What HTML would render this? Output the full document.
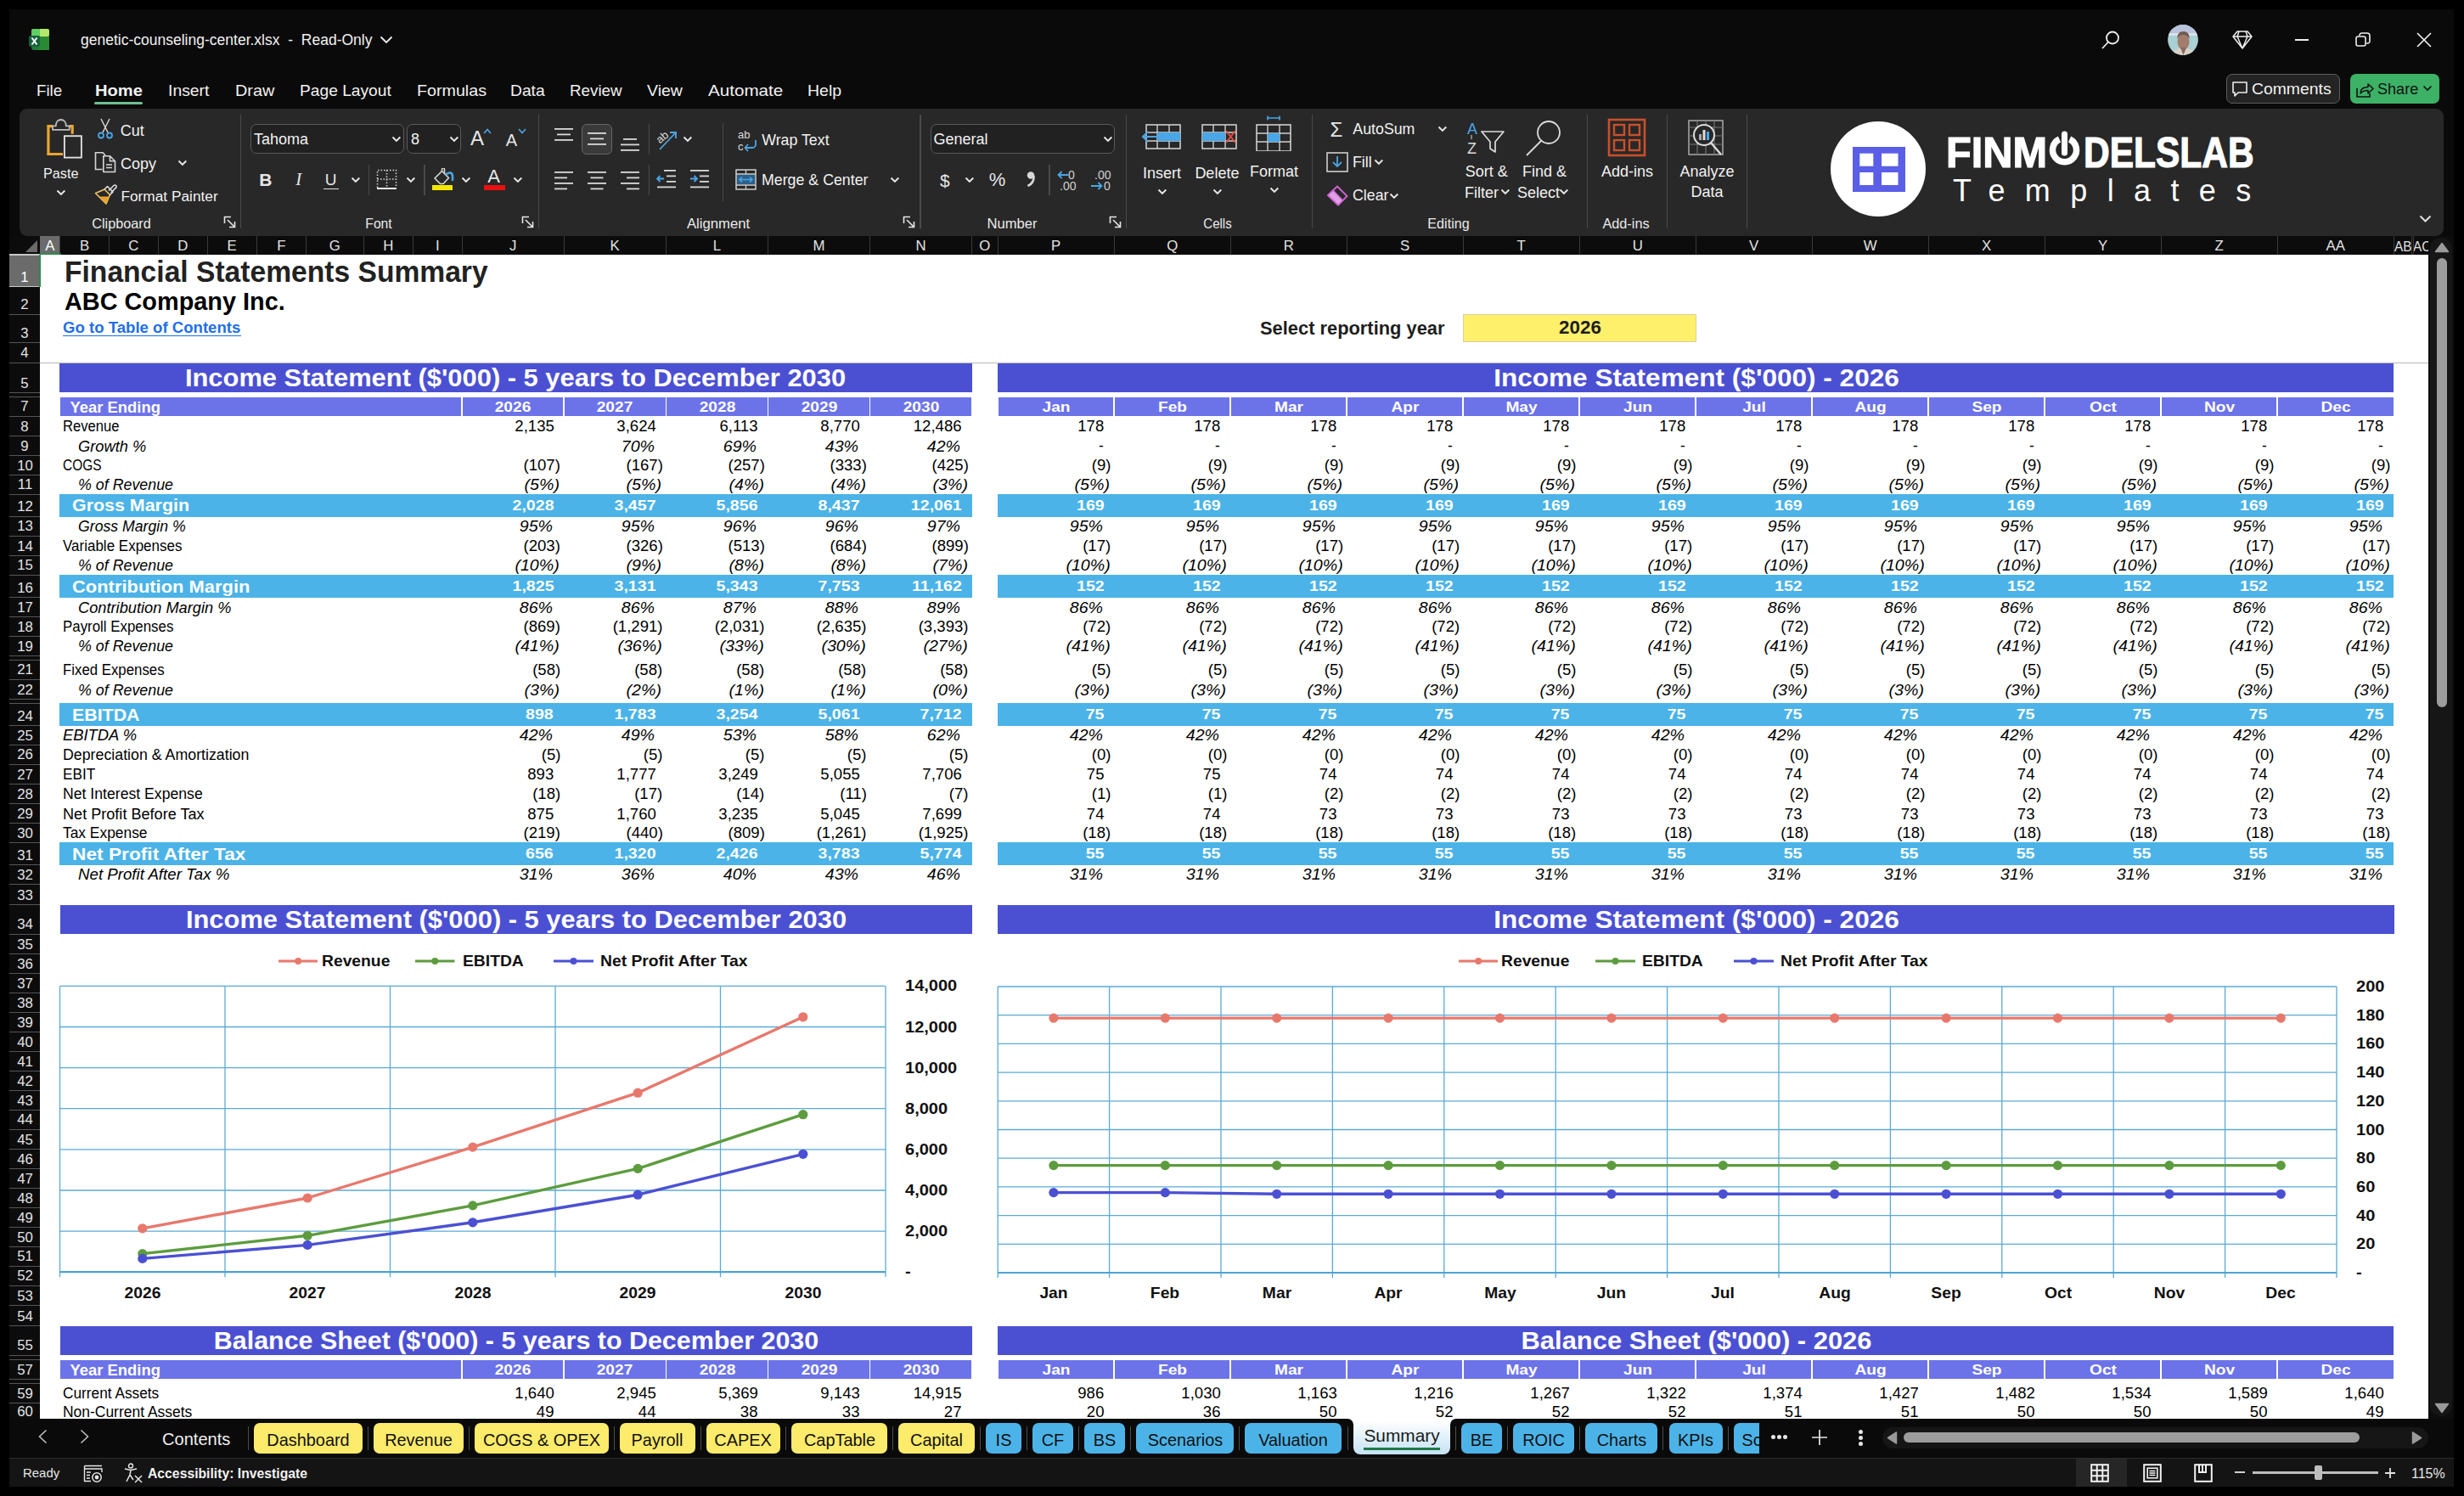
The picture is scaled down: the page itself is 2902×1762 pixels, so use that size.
<!DOCTYPE html><html><head><meta charset="utf-8"><style>
*{margin:0;padding:0;box-sizing:border-box}
html,body{width:2902px;height:1762px;overflow:hidden;background:#000;font-family:"Liberation Sans",sans-serif}
.a{position:absolute}
.t{position:absolute;white-space:pre}
</style></head><body><div class="a" style="left:11.0px;top:11.0px;width:2879.0px;height:1740.0px;background:#0a0a0a;"></div>
<svg class="a" style="left:34.0px;top:33.0px;" width="26" height="28" viewBox="0 0 26 28">
<rect x="3" y="1" width="21" height="25" rx="3" fill="#1f7a34"/>
<rect x="12" y="1" width="12" height="9" rx="2" fill="#b5e86a"/>
<rect x="3" y="1" width="10" height="9" rx="2" fill="#5fcf63"/>
<rect x="12" y="10" width="12" height="16" fill="#2a8a33"/>
<rect x="0" y="9" width="13" height="13" rx="2" fill="#16613a"/>
<path d="M3.5 11.5 L9.5 19.5 M9.5 11.5 L3.5 19.5" stroke="#fff" stroke-width="2"/>
</svg>
<div class="t" style="top:39.0px;font-size:17.6px;line-height:17.6px;color:#f2f2f2;left:95.4px;transform:scaleX(0.995);transform-origin:0 0;">genetic-counseling-center.xlsx  -  Read-Only</div>
<svg class="a" style="left:447.0px;top:42.0px;" width="16" height="10" viewBox="0 0 16 10"><path d="M1.5 1.5 L8 8 L14.5 1.5" stroke="#eee" stroke-width="1.8" fill="none"/></svg>
<svg class="a" style="left:2474.0px;top:35.0px;" width="24" height="24" viewBox="0 0 24 24"><circle cx="14" cy="9.5" r="7" stroke="#eee" stroke-width="1.8" fill="none"/><path d="M9 14.5 L2 22" stroke="#eee" stroke-width="1.8"/></svg>
<svg class="a" style="left:2553.0px;top:28.8px;" width="36" height="36" viewBox="0 0 36 36"><defs><clipPath id="av"><circle cx="18" cy="18" r="17.9"/></clipPath></defs><g clip-path="url(#av)"><rect width="36" height="36" fill="#a9d0d2"/><rect width="36" height="12" fill="#b9c4dc"/><rect y="10" width="36" height="3" fill="#d8e0e8"/><path d="M4 36 C6 29 12 28 18 28 C25 28 31 29 33 36 Z" fill="#d9d2c8"/><ellipse cx="18.5" cy="20" rx="7" ry="9.5" fill="#a47c6c"/><path d="M11.5 17 C11 11 14 8 18.5 8 C23 8 26 11 25.5 17 C24 13 21 12 18.5 12 C15 12 13 13 11.5 17 Z" fill="#6f5a50"/><path d="M15 27 L18.5 36 L22 27 Z" fill="#8a6a5c"/></g></svg>
<svg class="a" style="left:2629.0px;top:35.0px;" width="24" height="24" viewBox="0 0 24 24"><path d="M6 2 H18 L23 8 L12 22 L1 8 Z M1 8 H23 M8 2 L6 8 L12 22 L18 8 L16 2" stroke="#eee" stroke-width="1.5" fill="none" stroke-linejoin="round"/></svg>
<div class="a" style="left:2703.0px;top:46.0px;width:16.0px;height:2.0px;background:#eee;"></div>
<svg class="a" style="left:2774.0px;top:38.0px;" width="18" height="18" viewBox="0 0 18 18"><rect x="1" y="5" width="11" height="11" rx="2" stroke="#eee" stroke-width="1.6" fill="none"/><path d="M5 4 V3.5 a2.5 2.5 0 0 1 2.5 -2.5 H14 a3 3 0 0 1 3 3 V10.5 a2.5 2.5 0 0 1 -2.5 2.5 H13" stroke="#eee" stroke-width="1.6" fill="none"/></svg>
<svg class="a" style="left:2846.0px;top:38.0px;" width="18" height="18" viewBox="0 0 18 18"><path d="M1 1 L17 17 M17 1 L1 17" stroke="#eee" stroke-width="1.7"/></svg>
<div class="a" style="left:2621.5px;top:87.3px;width:134px;height:35.2px;border:1.3px solid #5c5c5c;border-radius:7px;background:#242424"></div>
<svg class="a" style="left:2628.0px;top:95.0px;" width="20" height="20" viewBox="0 0 20 20"><path d="M2 2 H18 V14 H8 L4 18 V14 H2 Z" stroke="#eee" stroke-width="1.6" fill="none" stroke-linejoin="round"/></svg>
<div class="t" style="top:96.3px;font-size:18.5px;line-height:18.5px;color:#f2f2f2;left:2652.4px;transform:scaleX(1.046);transform-origin:0 0;">Comments</div>
<div class="a" style="left:2768px;top:87.3px;width:104.8px;height:35.2px;border-radius:7px;background:#3db166"></div>
<svg class="a" style="left:2774.0px;top:96.0px;" width="22" height="20" viewBox="0 0 22 20"><path d="M2 8 V18 H17 V14" stroke="#111" stroke-width="1.6" fill="none"/><path d="M6 14 C6 9 9 6.5 15 6.5 V3 L21 8.5 L15 14 V10.5 C11 10.5 8 11.5 6 14 Z" stroke="#111" stroke-width="1.5" fill="none" stroke-linejoin="round"/></svg>
<div class="t" style="top:96.3px;font-size:18.5px;line-height:18.5px;color:#111;left:2799.6px;transform:scaleX(0.976);transform-origin:0 0;">Share</div>
<svg class="a" style="left:2853.0px;top:100.0px;" width="12" height="8" viewBox="0 0 12 8"><path d="M1.5 1.5 L6 6 L10.5 1.5" stroke="#111" stroke-width="1.6" fill="none"/></svg>
<div class="t" style="top:98.3px;font-size:18.5px;line-height:18.5px;color:#f2f2f2;left:42.6px;transform:scaleX(1.013);transform-origin:0 0;">File</div>
<div class="t" style="top:98.3px;font-size:18.5px;line-height:18.5px;color:#f2f2f2;font-weight:bold;left:111.6px;transform:scaleX(1.087);transform-origin:0 0;">Home</div>
<div class="t" style="top:98.3px;font-size:18.5px;line-height:18.5px;color:#f2f2f2;left:198.0px;transform:scaleX(1.047);transform-origin:0 0;">Insert</div>
<div class="t" style="top:98.3px;font-size:18.5px;line-height:18.5px;color:#f2f2f2;left:277.2px;transform:scaleX(1.073);transform-origin:0 0;">Draw</div>
<div class="t" style="top:98.3px;font-size:18.5px;line-height:18.5px;color:#f2f2f2;left:353.0px;transform:scaleX(1.037);transform-origin:0 0;">Page Layout</div>
<div class="t" style="top:98.3px;font-size:18.5px;line-height:18.5px;color:#f2f2f2;left:491.0px;transform:scaleX(1.064);transform-origin:0 0;">Formulas</div>
<div class="t" style="top:98.3px;font-size:18.5px;line-height:18.5px;color:#f2f2f2;left:600.6px;transform:scaleX(1.039);transform-origin:0 0;">Data</div>
<div class="t" style="top:98.3px;font-size:18.5px;line-height:18.5px;color:#f2f2f2;left:670.9px;transform:scaleX(1.015);transform-origin:0 0;">Review</div>
<div class="t" style="top:98.3px;font-size:18.5px;line-height:18.5px;color:#f2f2f2;left:761.8px;transform:scaleX(1.052);transform-origin:0 0;">View</div>
<div class="t" style="top:98.3px;font-size:18.5px;line-height:18.5px;color:#f2f2f2;left:834.0px;transform:scaleX(1.114);transform-origin:0 0;">Automate</div>
<div class="t" style="top:98.3px;font-size:18.5px;line-height:18.5px;color:#f2f2f2;left:951.0px;transform:scaleX(1.053);transform-origin:0 0;">Help</div>
<div class="a" style="left:111.0px;top:119.5px;width:57.0px;height:3.1px;background:#6cc08f;border-radius:2px"></div>
<div class="a" style="left:23px;top:128px;width:2855px;height:149.5px;border-radius:9px;background:#282828"></div>
<div class="t" style="top:255.0px;font-size:16.5px;line-height:16.5px;color:#eaeaea;left:143.1px;transform:translateX(-50%) scaleX(0.986);transform-origin:50% 0;">Clipboard</div>
<div class="t" style="top:255.0px;font-size:16.5px;line-height:16.5px;color:#eaeaea;left:445.5px;transform:translateX(-50%) scaleX(0.948);transform-origin:50% 0;">Font</div>
<div class="t" style="top:255.0px;font-size:16.5px;line-height:16.5px;color:#eaeaea;left:846.0px;transform:translateX(-50%) scaleX(1.011);transform-origin:50% 0;">Alignment</div>
<div class="t" style="top:255.0px;font-size:16.5px;line-height:16.5px;color:#eaeaea;left:1191.7px;transform:translateX(-50%) scaleX(1.007);transform-origin:50% 0;">Number</div>
<div class="t" style="top:255.0px;font-size:16.5px;line-height:16.5px;color:#eaeaea;left:1434.2px;transform:translateX(-50%) scaleX(0.912);transform-origin:50% 0;">Cells</div>
<div class="t" style="top:255.0px;font-size:16.5px;line-height:16.5px;color:#eaeaea;left:1705.8px;transform:translateX(-50%) scaleX(0.978);transform-origin:50% 0;">Editing</div>
<div class="t" style="top:255.0px;font-size:16.5px;line-height:16.5px;color:#eaeaea;left:1914.8px;transform:translateX(-50%) scaleX(0.987);transform-origin:50% 0;">Add-ins</div>
<svg class="a" style="left:263.0px;top:254.0px;clip-path:inset(0 0 0 0)" width="16" height="16" viewBox="0 0 16 16"><path d="M1.5 9 V1.5 H9" stroke="#e6e6e6" stroke-width="1.6" fill="none"/><path d="M5 5 L13.5 13.5 M13.5 7 V13.5 H7" stroke="#e6e6e6" stroke-width="1.6" fill="none"/></svg>
<svg class="a" style="left:613.7px;top:254.0px;clip-path:inset(0 0 0 0)" width="16" height="16" viewBox="0 0 16 16"><path d="M1.5 9 V1.5 H9" stroke="#e6e6e6" stroke-width="1.6" fill="none"/><path d="M5 5 L13.5 13.5 M13.5 7 V13.5 H7" stroke="#e6e6e6" stroke-width="1.6" fill="none"/></svg>
<svg class="a" style="left:1063.0px;top:254.0px;clip-path:inset(0 0 0 0)" width="16" height="16" viewBox="0 0 16 16"><path d="M1.5 9 V1.5 H9" stroke="#e6e6e6" stroke-width="1.6" fill="none"/><path d="M5 5 L13.5 13.5 M13.5 7 V13.5 H7" stroke="#e6e6e6" stroke-width="1.6" fill="none"/></svg>
<svg class="a" style="left:1305.7px;top:254.0px;clip-path:inset(0 0 0 0)" width="16" height="16" viewBox="0 0 16 16"><path d="M1.5 9 V1.5 H9" stroke="#e6e6e6" stroke-width="1.6" fill="none"/><path d="M5 5 L13.5 13.5 M13.5 7 V13.5 H7" stroke="#e6e6e6" stroke-width="1.6" fill="none"/></svg>
<div class="a" style="left:283.0px;top:135.0px;width:1.3px;height:134.0px;background:#4a4a4a;"></div>
<div class="a" style="left:633.5px;top:135.0px;width:1.3px;height:134.0px;background:#4a4a4a;"></div>
<div class="a" style="left:1083.4px;top:135.0px;width:1.3px;height:134.0px;background:#4a4a4a;"></div>
<div class="a" style="left:1326.0px;top:135.0px;width:1.3px;height:134.0px;background:#4a4a4a;"></div>
<div class="a" style="left:1544.6px;top:135.0px;width:1.3px;height:134.0px;background:#4a4a4a;"></div>
<div class="a" style="left:1868.5px;top:135.0px;width:1.3px;height:134.0px;background:#4a4a4a;"></div>
<div class="a" style="left:1963.0px;top:135.0px;width:1.3px;height:134.0px;background:#4a4a4a;"></div>
<div class="a" style="left:2056.6px;top:135.0px;width:1.3px;height:134.0px;background:#4a4a4a;"></div>
<svg class="a" style="left:53.0px;top:138.0px;" width="46" height="50" viewBox="0 0 46 50"><path d="M21 43.5 H3.9 V10.7 H9 M28.9 10.7 H32.2 V19.7" stroke="#eba530" stroke-width="3.2" fill="none"/><path d="M9 14.8 V10.3 H12.8 C12.8 5.5 15.5 3 18.8 3 C22 3 24.8 5.5 24.8 10.3 H28.7 V14.8 Z" stroke="#bdbdbd" stroke-width="1.8" fill="none" stroke-linejoin="round"/><rect x="22.9" y="22.2" width="20" height="25.4" stroke="#dedede" stroke-width="1.9" fill="none"/></svg>
<div class="t" style="top:196.2px;font-size:16.2px;line-height:16.2px;color:#f2f2f2;left:71.7px;transform:translateX(-50%) scaleX(1.000);transform-origin:50% 0;">Paste</div>
<svg class="a" style="left:65.8px;top:222.8px;" width="11.8" height="7.4" viewBox="0 0 11.8 7.4"><path d="M1.5 1.5 L5.9 5.9 L10.3 1.5" stroke="#e6e6e6" stroke-width="2" fill="none"/></svg>
<svg class="a" style="left:113.0px;top:139.0px;" width="22" height="26" viewBox="0 0 22 26"><path d="M6 1 L14 17 M16 1 L8 17" stroke="#ddd" stroke-width="1.4" fill="none"/><circle cx="6" cy="20.5" r="3" stroke="#4aa6e6" stroke-width="1.8" fill="none"/><circle cx="16" cy="20.5" r="3" stroke="#4aa6e6" stroke-width="1.8" fill="none"/></svg>
<div class="t" style="top:144.7px;font-size:18px;line-height:18px;color:#f2f2f2;left:141.8px;">Cut</div>
<svg class="a" style="left:111.0px;top:178.0px;" width="27" height="27" viewBox="0 0 27 27"><path d="M9.5 21.5 H1.5 V1.8 H10 L13 4.8" stroke="#d6d6d6" stroke-width="1.6" fill="none"/><path d="M10.8 5.8 H18.5 L24.5 11.8 V24.5 H10.8 Z M18.5 5.8 V11.8 H24.5" stroke="#d6d6d6" stroke-width="1.6" fill="none" stroke-linejoin="round"/><path d="M14 16 H21 M14 19.5 H21" stroke="#d6d6d6" stroke-width="1.5"/></svg>
<div class="t" style="top:183.7px;font-size:18px;line-height:18px;color:#f2f2f2;left:142.0px;">Copy</div>
<svg class="a" style="left:209.3px;top:188.3px;" width="11.8" height="7.4" viewBox="0 0 11.8 7.4"><path d="M1.5 1.5 L5.9 5.9 L10.3 1.5" stroke="#e6e6e6" stroke-width="2" fill="none"/></svg>
<svg class="a" style="left:110.0px;top:216.0px;" width="28" height="26" viewBox="0 0 28 26"><path d="M2.5 11.5 C6 10 10 8.5 13 7 L19.5 13.5 C18 16.5 16.5 20.5 15 24 Z" stroke="#f0c868" stroke-width="1.6" fill="none" stroke-linejoin="round"/><path d="M6.5 15.5 L15 24 C16.5 20.5 17.5 18 18.5 15.5 Z" fill="#e9a32e"/><path d="M13 7 L16.5 3.5 L23 10 L19.5 13.5 M18 8.5 L24 2.5 a1.8 1.8 0 0 1 2.6 2.6 L20.6 11" stroke="#dedede" stroke-width="1.6" fill="none" stroke-linejoin="round"/></svg>
<div class="t" style="top:222.8px;font-size:17.3px;line-height:17.3px;color:#f2f2f2;left:142.4px;">Format Painter</div>
<div class="a" style="left:295.4px;top:146px;width:180.2px;height:35.3px;border:1.3px solid #5a5a5a;border-radius:7px;background:#212121"></div>
<div class="t" style="top:155.2px;font-size:18px;line-height:18px;color:#f2f2f2;left:299.0px;">Tahoma</div>
<svg class="a" style="left:460.9px;top:160.3px;" width="11.8" height="7.4" viewBox="0 0 11.8 7.4"><path d="M1.5 1.5 L5.9 5.9 L10.3 1.5" stroke="#e6e6e6" stroke-width="2" fill="none"/></svg>
<div class="a" style="left:479px;top:146px;width:64.4px;height:35.3px;border:1.3px solid #5a5a5a;border-radius:7px;background:#212121"></div>
<div class="t" style="top:155.2px;font-size:18px;line-height:18px;color:#f2f2f2;left:484.0px;">8</div>
<svg class="a" style="left:528.7px;top:160.3px;" width="11.8" height="7.4" viewBox="0 0 11.8 7.4"><path d="M1.5 1.5 L5.9 5.9 L10.3 1.5" stroke="#e6e6e6" stroke-width="2" fill="none"/></svg>
<div class="t" style="top:151.1px;font-size:24px;line-height:24px;color:#e6e6e6;left:554.0px;">A</div>
<svg class="a" style="left:569.0px;top:151.0px;" width="10" height="7" viewBox="0 0 10 7"><path d="M1 6 L5 1.5 L9 6" stroke="#4aa6e6" stroke-width="1.6" fill="none"/></svg>
<div class="t" style="top:154.5px;font-size:20px;line-height:20px;color:#e6e6e6;left:595.7px;">A</div>
<svg class="a" style="left:610.0px;top:151.0px;" width="10" height="7" viewBox="0 0 10 7"><path d="M1 1 L5 5.5 L9 1" stroke="#4aa6e6" stroke-width="1.6" fill="none"/></svg>
<div class="t" style="top:201.2px;font-size:21px;line-height:21px;color:#e6e6e6;font-weight:bold;left:312.8px;transform:translateX(-50%) scaleX(1.000);transform-origin:50% 0;">B</div>
<div class="t" style="top:201.2px;font-size:21px;line-height:21px;color:#e6e6e6;font-style:italic;left:351.8px;transform:translateX(-50%) scaleX(1.000);transform-origin:50% 0;font-family:Liberation Serif">I</div>
<div class="t" style="top:201.8px;font-size:19px;line-height:19px;color:#e6e6e6;left:389.7px;transform:translateX(-50%) scaleX(1.000);transform-origin:50% 0;">U</div>
<div class="a" style="left:381.0px;top:221.5px;width:18.0px;height:1.5px;background:#e6e6e6;"></div>
<svg class="a" style="left:412.8px;top:208.3px;" width="11.8" height="7.4" viewBox="0 0 11.8 7.4"><path d="M1.5 1.5 L5.9 5.9 L10.3 1.5" stroke="#e6e6e6" stroke-width="2" fill="none"/></svg>
<div class="a" style="left:434.0px;top:194.0px;width:1.3px;height:36.0px;background:#4a4a4a;"></div>
<svg class="a" style="left:443.0px;top:199.0px;" width="25" height="25" viewBox="0 0 25 25"><path d="M1.5 22 V1.5 H23.5 V22 M12.5 1.5 V22 M1.5 12 H23.5" stroke="#d0d0d0" stroke-width="1.6" stroke-dasharray="1.6 1.9" fill="none"/><path d="M1 23 H24" stroke="#eee" stroke-width="2"/></svg>
<svg class="a" style="left:477.8px;top:208.3px;" width="11.8" height="7.4" viewBox="0 0 11.8 7.4"><path d="M1.5 1.5 L5.9 5.9 L10.3 1.5" stroke="#e6e6e6" stroke-width="2" fill="none"/></svg>
<div class="a" style="left:499.3px;top:194.0px;width:1.3px;height:36.0px;background:#4a4a4a;"></div>
<svg class="a" style="left:510.0px;top:198.0px;" width="26" height="22" viewBox="0 0 26 22"><path d="M2 12 L10.5 3.5 L18.5 11.5 L12 18.5 H8.5 Z" stroke="#d6d6d6" stroke-width="1.6" fill="none" stroke-linejoin="round"/><path d="M10.5 3.5 V1.5 a1.5 1.5 0 0 1 3 0 V7" stroke="#d6d6d6" stroke-width="1.6" fill="none"/><path d="M16 7 C19 4.5 22.5 5 23 9 V14" stroke="#4aa6e6" stroke-width="2.6" fill="none" stroke-linecap="round"/></svg>
<div class="a" style="left:509.0px;top:218.0px;width:24.0px;height:6.0px;background:#f5e600;"></div>
<svg class="a" style="left:543.1px;top:208.3px;" width="11.8" height="7.4" viewBox="0 0 11.8 7.4"><path d="M1.5 1.5 L5.9 5.9 L10.3 1.5" stroke="#e6e6e6" stroke-width="2" fill="none"/></svg>
<div class="t" style="top:197.3px;font-size:22px;line-height:22px;color:#e6e6e6;left:581.7px;transform:translateX(-50%) scaleX(1.000);transform-origin:50% 0;">A</div>
<div class="a" style="left:569.5px;top:218.0px;width:25.0px;height:6.0px;background:#e81010;"></div>
<svg class="a" style="left:604.1px;top:208.3px;" width="11.8" height="7.4" viewBox="0 0 11.8 7.4"><path d="M1.5 1.5 L5.9 5.9 L10.3 1.5" stroke="#e6e6e6" stroke-width="2" fill="none"/></svg>
<svg class="a" style="left:653.0px;top:151.0px;" width="23" height="16" viewBox="0 0 23 16"><rect x="0" y="0" width="22" height="1.8" fill="#d9d9d9"/><rect x="3" y="6.5" width="16" height="1.8" fill="#d9d9d9"/><rect x="0" y="13" width="22" height="1.8" fill="#d9d9d9"/></svg>
<div class="a" style="left:685px;top:146px;width:35.8px;height:35.6px;border:1.3px solid #666;border-radius:6px;background:#3a3a3a"></div>
<svg class="a" style="left:692.0px;top:155.5px;" width="23" height="16" viewBox="0 0 23 16"><rect x="0" y="0" width="22" height="1.8" fill="#d9d9d9"/><rect x="3" y="6.5" width="16" height="1.8" fill="#d9d9d9"/><rect x="0" y="13" width="22" height="1.8" fill="#d9d9d9"/></svg>
<svg class="a" style="left:731.0px;top:163.0px;" width="23" height="16" viewBox="0 0 23 16"><rect x="3" y="0" width="16" height="1.8" fill="#d9d9d9"/><rect x="0" y="6.5" width="22" height="1.8" fill="#d9d9d9"/><rect x="0" y="13" width="22" height="1.8" fill="#d9d9d9"/></svg>
<div class="a" style="left:763.6px;top:146.0px;width:1.3px;height:36.0px;background:#4a4a4a;"></div>
<svg class="a" style="left:771.0px;top:150.0px;" width="28" height="28" viewBox="0 0 28 28"><text x="2" y="16" font-size="13" fill="#ddd" font-family="Liberation Sans" transform="rotate(-40 9 12)">ab</text><path d="M6 26 L25 6 M18 6 H25 V13" stroke="#4aa6e6" stroke-width="1.8" fill="none"/></svg>
<svg class="a" style="left:804.1px;top:160.3px;" width="11.8" height="7.4" viewBox="0 0 11.8 7.4"><path d="M1.5 1.5 L5.9 5.9 L10.3 1.5" stroke="#e6e6e6" stroke-width="2" fill="none"/></svg>
<div class="a" style="left:851.0px;top:145.0px;width:1.3px;height:92.0px;background:#4a4a4a;"></div>
<svg class="a" style="left:868.0px;top:152.0px;" width="26" height="28" viewBox="0 0 26 28"><text x="1" y="11" font-size="13" fill="#ddd" font-family="Liberation Sans">ab</text><text x="1" y="25" font-size="13" fill="#ddd" font-family="Liberation Sans">c</text><path d="M22 13 V18 a4 4 0 0 1 -4 4 H10 M13 18 L9.5 22 L13 26" stroke="#4aa6e6" stroke-width="1.8" fill="none"/></svg>
<div class="t" style="top:156.9px;font-size:17.8px;line-height:17.8px;color:#f2f2f2;left:897.2px;">Wrap Text</div>
<svg class="a" style="left:653.0px;top:201.5px;" width="23" height="22.5" viewBox="0 0 23 22.5"><rect x="0" y="0" width="22" height="1.8" fill="#d9d9d9"/><rect x="0" y="6.5" width="15" height="1.8" fill="#d9d9d9"/><rect x="0" y="13" width="22" height="1.8" fill="#d9d9d9"/><rect x="0" y="19.5" width="15" height="1.8" fill="#d9d9d9"/></svg>
<svg class="a" style="left:692.0px;top:201.5px;" width="23" height="22.5" viewBox="0 0 23 22.5"><rect x="0" y="0" width="22" height="1.8" fill="#d9d9d9"/><rect x="3.5" y="6.5" width="15" height="1.8" fill="#d9d9d9"/><rect x="0" y="13" width="22" height="1.8" fill="#d9d9d9"/><rect x="3.5" y="19.5" width="15" height="1.8" fill="#d9d9d9"/></svg>
<svg class="a" style="left:731.0px;top:201.5px;" width="23" height="22.5" viewBox="0 0 23 22.5"><rect x="0" y="0" width="22" height="1.8" fill="#d9d9d9"/><rect x="7" y="6.5" width="15" height="1.8" fill="#d9d9d9"/><rect x="0" y="13" width="22" height="1.8" fill="#d9d9d9"/><rect x="7" y="19.5" width="15" height="1.8" fill="#d9d9d9"/></svg>
<div class="a" style="left:763.6px;top:194.0px;width:1.3px;height:36.0px;background:#4a4a4a;"></div>
<svg class="a" style="left:773.0px;top:200.0px;" width="24" height="22" viewBox="0 0 24 22"><rect x="9" y="0" width="14" height="1.8" fill="#d9d9d9"/><rect x="12" y="6.5" width="11" height="1.8" fill="#d9d9d9"/><rect x="12" y="13" width="11" height="1.8" fill="#d9d9d9"/><rect x="1" y="19.5" width="22" height="1.8" fill="#d9d9d9"/><path d="M9 10.5 H1 M4.5 7 L1 10.5 L4.5 14" stroke="#4aa6e6" stroke-width="1.8" fill="none"/></svg>
<svg class="a" style="left:812.0px;top:200.0px;" width="24" height="22" viewBox="0 0 24 22"><rect x="1" y="0" width="22" height="1.8" fill="#d9d9d9"/><rect x="12" y="6.5" width="11" height="1.8" fill="#d9d9d9"/><rect x="12" y="13" width="11" height="1.8" fill="#d9d9d9"/><rect x="1" y="19.5" width="22" height="1.8" fill="#d9d9d9"/><path d="M1 10.5 H9 M5.5 7 L9 10.5 L5.5 14" stroke="#4aa6e6" stroke-width="1.8" fill="none"/></svg>
<svg class="a" style="left:866.0px;top:199.0px;" width="25" height="25" viewBox="0 0 25 25"><rect x="1" y="1" width="23" height="23" stroke="#cfcfcf" stroke-width="1.5" fill="none"/><path d="M1 6 H24 M1 19 H24 M12.5 1 V6 M12.5 19 V24" stroke="#cfcfcf" stroke-width="1.3"/><rect x="2" y="7" width="21" height="11" fill="#2b5f8a"/><path d="M5 12.5 H20 M8 9.5 L5 12.5 L8 15.5 M17 9.5 L20 12.5 L17 15.5" stroke="#4aa6e6" stroke-width="1.6" fill="none"/></svg>
<div class="t" style="top:203.9px;font-size:17.8px;line-height:17.8px;color:#f2f2f2;left:897.0px;">Merge &amp; Center</div>
<svg class="a" style="left:1048.1px;top:208.3px;" width="11.8" height="7.4" viewBox="0 0 11.8 7.4"><path d="M1.5 1.5 L5.9 5.9 L10.3 1.5" stroke="#e6e6e6" stroke-width="2" fill="none"/></svg>
<div class="a" style="left:1096px;top:146px;width:217.3px;height:35.4px;border:1.3px solid #5a5a5a;border-radius:7px;background:#212121"></div>
<div class="t" style="top:155.2px;font-size:18px;line-height:18px;color:#f2f2f2;left:1099.4px;">General</div>
<svg class="a" style="left:1298.5px;top:160.3px;" width="11.8" height="7.4" viewBox="0 0 11.8 7.4"><path d="M1.5 1.5 L5.9 5.9 L10.3 1.5" stroke="#e6e6e6" stroke-width="2" fill="none"/></svg>
<div class="t" style="top:201.7px;font-size:21px;line-height:21px;color:#e6e6e6;left:1112.8px;transform:translateX(-50%) scaleX(1.000);transform-origin:50% 0;">$</div>
<svg class="a" style="left:1136.1px;top:208.3px;" width="11.8" height="7.4" viewBox="0 0 11.8 7.4"><path d="M1.5 1.5 L5.9 5.9 L10.3 1.5" stroke="#e6e6e6" stroke-width="2" fill="none"/></svg>
<div class="t" style="top:200.8px;font-size:22px;line-height:22px;color:#e6e6e6;left:1174.5px;transform:translateX(-50%) scaleX(1.000);transform-origin:50% 0;">%</div>
<svg class="a" style="left:1206.0px;top:200.0px;" width="16" height="22" viewBox="0 0 16 22"><circle cx="8" cy="6.5" r="4.2" fill="#d8d8d8"/><path d="M11.5 7 C12 12.5 9 17 4.5 19" stroke="#d8d8d8" stroke-width="2.6" fill="none"/></svg>
<div class="a" style="left:1235.4px;top:194.0px;width:1.3px;height:36.0px;background:#4a4a4a;"></div>
<svg class="a" style="left:1244.0px;top:198.0px;" width="30" height="28" viewBox="0 0 30 28"><text x="14" y="13" font-size="14" fill="#d0d0d0" font-family="Liberation Sans">0</text><text x="4" y="26" font-size="14" fill="#d0d0d0" font-family="Liberation Sans">.00</text><path d="M14 8 H2.5 M6.5 4 L2.5 8 L6.5 12" stroke="#4aa6e6" stroke-width="1.8" fill="none"/></svg>
<svg class="a" style="left:1282.0px;top:198.0px;" width="30" height="28" viewBox="0 0 30 28"><text x="7" y="13" font-size="14" fill="#d0d0d0" font-family="Liberation Sans">.00</text><text x="18" y="26" font-size="14" fill="#d0d0d0" font-family="Liberation Sans">0</text><path d="M3 21 H15.5 M11.5 17 L15.5 21 L11.5 25" stroke="#4aa6e6" stroke-width="1.8" fill="none"/></svg>
<svg class="a" style="left:1345.0px;top:140.0px;" width="48" height="42" viewBox="0 0 48 42"><rect x="5" y="7" width="40" height="28" stroke="#cfcfcf" stroke-width="1.6" fill="none"/><path d="M5 16 H45 M5 26 H45 M18 7 V35 M32 7 V35" stroke="#cfcfcf" stroke-width="1.4"/><rect x="18" y="16" width="27" height="10" fill="#4aa6e6"/><path d="M1 21 H20 M7 15 L1 21 L7 27" stroke="#4aa6e6" stroke-width="2" fill="none"/></svg>
<div class="t" style="top:195.2px;font-size:18px;line-height:18px;color:#f2f2f2;left:1368.5px;transform:translateX(-50%) scaleX(1.000);transform-origin:50% 0;">Insert</div>
<svg class="a" style="left:1362.6px;top:222.3px;" width="11.8" height="7.4" viewBox="0 0 11.8 7.4"><path d="M1.5 1.5 L5.9 5.9 L10.3 1.5" stroke="#e6e6e6" stroke-width="2" fill="none"/></svg>
<svg class="a" style="left:1411.0px;top:140.0px;" width="48" height="42" viewBox="0 0 48 42"><rect x="5" y="7" width="40" height="28" stroke="#cfcfcf" stroke-width="1.6" fill="none"/><path d="M5 16 H45 M5 26 H45 M18 7 V35 M32 7 V35" stroke="#cfcfcf" stroke-width="1.4"/><rect x="5" y="16" width="27" height="10" fill="#4aa6e6"/><path d="M33 14 L44 28 M44 14 L33 28" stroke="#e84b3c" stroke-width="2"/></svg>
<div class="t" style="top:195.2px;font-size:18px;line-height:18px;color:#f2f2f2;left:1433.4px;transform:translateX(-50%) scaleX(1.000);transform-origin:50% 0;">Delete</div>
<svg class="a" style="left:1427.5px;top:222.3px;" width="11.8" height="7.4" viewBox="0 0 11.8 7.4"><path d="M1.5 1.5 L5.9 5.9 L10.3 1.5" stroke="#e6e6e6" stroke-width="2" fill="none"/></svg>
<svg class="a" style="left:1476.0px;top:136.0px;" width="48" height="42" viewBox="0 0 48 42"><rect x="4" y="11" width="40" height="31" stroke="#cfcfcf" stroke-width="1.6" fill="none"/><path d="M4 21 H44 M4 31 H44 M17 11 V42 M31 11 V42" stroke="#cfcfcf" stroke-width="1.4"/><rect x="17" y="21" width="14" height="10" fill="#4aa6e6"/><path d="M17 3 H31 M17 0.5 V5.5 M31 0.5 V5.5" stroke="#4aa6e6" stroke-width="1.6"/></svg>
<div class="t" style="top:193.2px;font-size:18px;line-height:18px;color:#f2f2f2;left:1500.4px;transform:translateX(-50%) scaleX(1.000);transform-origin:50% 0;">Format</div>
<svg class="a" style="left:1494.5px;top:220.3px;" width="11.8" height="7.4" viewBox="0 0 11.8 7.4"><path d="M1.5 1.5 L5.9 5.9 L10.3 1.5" stroke="#e6e6e6" stroke-width="2" fill="none"/></svg>
<div class="t" style="top:140.6px;font-size:24px;line-height:24px;color:#e6e6e6;left:1574.0px;transform:translateX(-50%) scaleX(1.000);transform-origin:50% 0;">Σ</div>
<div class="t" style="top:143.9px;font-size:17.8px;line-height:17.8px;color:#f2f2f2;left:1593.3px;">AutoSum</div>
<svg class="a" style="left:1693.1px;top:148.3px;" width="11.8" height="7.4" viewBox="0 0 11.8 7.4"><path d="M1.5 1.5 L5.9 5.9 L10.3 1.5" stroke="#e6e6e6" stroke-width="2" fill="none"/></svg>
<svg class="a" style="left:1562.0px;top:179.0px;" width="26" height="24" viewBox="0 0 26 24"><rect x="1" y="1" width="24" height="22" stroke="#cfcfcf" stroke-width="1.6" fill="none"/><path d="M13 5 V17 M8 12 L13 17 L18 12" stroke="#4aa6e6" stroke-width="1.8" fill="none"/></svg>
<div class="t" style="top:182.9px;font-size:17.8px;line-height:17.8px;color:#f2f2f2;left:1593.0px;">Fill</div>
<svg class="a" style="left:1618.1px;top:187.3px;" width="11.8" height="7.4" viewBox="0 0 11.8 7.4"><path d="M1.5 1.5 L5.9 5.9 L10.3 1.5" stroke="#e6e6e6" stroke-width="2" fill="none"/></svg>
<svg class="a" style="left:1562.0px;top:218.0px;" width="26" height="25" viewBox="0 0 26 25"><path d="M13 1.5 L24.5 13 L14 23.5 L2 12 Z" stroke="#c862cc" stroke-width="2" fill="none" stroke-linejoin="round"/><path d="M2 12 L8 6 L19.5 18 L14 23.5 Z" fill="#e0a0e6" stroke="#c862cc" stroke-width="1.5" stroke-linejoin="round"/></svg>
<div class="t" style="top:222.4px;font-size:17.8px;line-height:17.8px;color:#f2f2f2;left:1593.0px;">Clear</div>
<svg class="a" style="left:1636.1px;top:227.3px;" width="11.8" height="7.4" viewBox="0 0 11.8 7.4"><path d="M1.5 1.5 L5.9 5.9 L10.3 1.5" stroke="#e6e6e6" stroke-width="2" fill="none"/></svg>
<svg class="a" style="left:1727.0px;top:141.0px;" width="48" height="42" viewBox="0 0 48 42"><text x="1" y="17" font-size="18" fill="#4aa6e6" font-family="Liberation Sans">A</text><text x="1" y="40" font-size="18" fill="#ddd" font-family="Liberation Sans">Z</text><path d="M6 18 V23" stroke="#ddd" stroke-width="1"/><path d="M18 14 H44 L34 26 V38 L28 34 V26 Z" stroke="#ddd" stroke-width="1.7" fill="none" stroke-linejoin="round"/></svg>
<div class="t" style="top:193.2px;font-size:18px;line-height:18px;color:#f2f2f2;left:1750.8px;transform:translateX(-50%) scaleX(1.000);transform-origin:50% 0;">Sort &amp;</div>
<div class="t" style="top:217.7px;font-size:18px;line-height:18px;color:#f2f2f2;left:1745.0px;transform:translateX(-50%) scaleX(1.000);transform-origin:50% 0;">Filter</div>
<svg class="a" style="left:1767.1px;top:222.3px;" width="11.8" height="7.4" viewBox="0 0 11.8 7.4"><path d="M1.5 1.5 L5.9 5.9 L10.3 1.5" stroke="#e6e6e6" stroke-width="2" fill="none"/></svg>
<svg class="a" style="left:1796.0px;top:140.0px;" width="48" height="44" viewBox="0 0 48 44"><circle cx="28" cy="16" r="13" stroke="#ddd" stroke-width="1.8" fill="none"/><path d="M19 26 L2 43" stroke="#ddd" stroke-width="1.8"/></svg>
<div class="t" style="top:193.2px;font-size:18px;line-height:18px;color:#f2f2f2;left:1819.0px;transform:translateX(-50%) scaleX(1.000);transform-origin:50% 0;">Find &amp;</div>
<div class="t" style="top:217.7px;font-size:18px;line-height:18px;color:#f2f2f2;left:1812.0px;transform:translateX(-50%) scaleX(1.000);transform-origin:50% 0;">Select</div>
<svg class="a" style="left:1836.1px;top:222.3px;" width="11.8" height="7.4" viewBox="0 0 11.8 7.4"><path d="M1.5 1.5 L5.9 5.9 L10.3 1.5" stroke="#e6e6e6" stroke-width="2" fill="none"/></svg>
<svg class="a" style="left:1893.0px;top:139.0px;" width="46" height="46" viewBox="0 0 46 46"><rect x="2" y="2" width="42" height="42" stroke="#c9502b" stroke-width="2.6" fill="none"/><rect x="8" y="8" width="12" height="12" stroke="#c9502b" stroke-width="2.4" fill="none"/><rect x="26" y="8" width="12" height="12" stroke="#c9502b" stroke-width="2.4" fill="none"/><rect x="8" y="26" width="12" height="12" stroke="#c9502b" stroke-width="2.4" fill="none"/><rect x="26" y="26" width="12" height="12" stroke="#c9502b" stroke-width="2.4" fill="none"/></svg>
<div class="t" style="top:193.2px;font-size:18px;line-height:18px;color:#f2f2f2;left:1916.4px;transform:translateX(-50%) scaleX(1.000);transform-origin:50% 0;">Add-ins</div>
<svg class="a" style="left:1987.0px;top:140.0px;" width="46" height="46" viewBox="0 0 46 46"><rect x="2" y="2" width="40" height="40" stroke="#aaa" stroke-width="1.5" fill="none"/><path d="M2 10 H42 M2 20 H42 M2 30 H42 M12 2 V42 M22 2 V42 M32 2 V42" stroke="#777" stroke-width="1.1"/><circle cx="20" cy="19" r="12" stroke="#ddd" stroke-width="2" fill="#282828"/><path d="M28 28 L40 42" stroke="#ddd" stroke-width="2.4"/><rect x="14" y="18" width="3" height="7" fill="#aaa"/><rect x="18.5" y="13" width="3" height="12" fill="#ddd"/><rect x="23" y="15" width="3" height="10" fill="#4aa6e6"/></svg>
<div class="t" style="top:193.2px;font-size:18px;line-height:18px;color:#f2f2f2;left:2010.6px;transform:translateX(-50%) scaleX(1.000);transform-origin:50% 0;">Analyze</div>
<div class="t" style="top:217.2px;font-size:18px;line-height:18px;color:#f2f2f2;left:2010.6px;transform:translateX(-50%) scaleX(1.000);transform-origin:50% 0;">Data</div>
<div class="a" style="left:2156.3px;top:143.3px;width:112px;height:112px;border-radius:50%;background:#fff"></div>
<svg class="a" style="left:2181.7px;top:173.1px;" width="62" height="53" viewBox="0 0 62 53"><rect x="0" y="0" width="62" height="53" fill="#5b5ee6"/><rect x="8.3" y="7.7" width="16" height="15" fill="#fff"/><rect x="34" y="7.7" width="19.5" height="15" fill="#fff"/><rect x="8.3" y="30" width="16" height="15" fill="#fff"/><rect x="34" y="30" width="19.5" height="15" fill="#fff"/></svg>
<div class="t" style="top:154.5px;font-size:50px;line-height:50px;color:#fff;font-weight:bold;left:2292.0px;transform:scaleX(0.975);transform-origin:0 0;-webkit-text-stroke:1.2px #fff">FINM</div>
<div class="t" style="top:154.5px;font-size:50px;line-height:50px;color:#fff;font-weight:bold;left:2453.5px;transform:scaleX(0.850);transform-origin:0 0;-webkit-text-stroke:1.2px #fff">DELSLAB</div>
<svg class="a" style="left:2410.0px;top:150.0px;" width="44" height="50" viewBox="0 0 44 50"><path d="M15.5 14 A14 14 0 1 0 27.5 14" stroke="#fff" stroke-width="7.5" fill="none"/><path d="M21.5 8 V30" stroke="#fff" stroke-width="7" stroke-linecap="round"/></svg>
<div class="t" style="top:206.7px;font-size:36px;line-height:36px;color:#fff;left:2300.0px;letter-spacing:23.4px">Templates</div>
<svg class="a" style="left:2849.0px;top:252.5px;" width="15" height="9" viewBox="0 0 15 9"><path d="M1.5 1.5 L7.5 7.5 L13.5 1.5" stroke="#ddd" stroke-width="2" fill="none"/></svg>
<div class="a" style="left:47.0px;top:300.0px;width:2813.0px;height:1370.5px;background:#fff;"></div>
<div class="a" style="left:11.0px;top:278.0px;width:2849.0px;height:22.0px;background:#0c0c0c;"></div>
<svg class="a" style="left:27.0px;top:282.0px;" width="18" height="16" viewBox="0 0 18 16"><path d="M17 1 V15 H3 Z" fill="#6a6a6a"/></svg>
<div class="a" style="left:47.0px;top:278.0px;width:23.6px;height:22.0px;background:#6b6b6b;"></div>
<div class="a" style="left:47.0px;top:298.2px;width:24.6px;height:2.3px;background:#2f8a4f;"></div>
<div class="t" style="top:281.7px;font-size:16.8px;line-height:16.8px;color:#ffffff;left:58.8px;transform:translateX(-50%) scaleX(1.000);transform-origin:50% 0;">A</div>
<div class="t" style="top:281.7px;font-size:16.8px;line-height:16.8px;color:#e3e3e3;left:99.6px;transform:translateX(-50%) scaleX(1.000);transform-origin:50% 0;">B</div>
<div class="a" style="left:70.0px;top:278.0px;width:1.2px;height:22.0px;background:#3a3a3a;"></div>
<div class="t" style="top:281.7px;font-size:16.8px;line-height:16.8px;color:#e3e3e3;left:157.4px;transform:translateX(-50%) scaleX(1.000);transform-origin:50% 0;">C</div>
<div class="a" style="left:128.0px;top:278.0px;width:1.2px;height:22.0px;background:#3a3a3a;"></div>
<div class="t" style="top:281.7px;font-size:16.8px;line-height:16.8px;color:#e3e3e3;left:215.2px;transform:translateX(-50%) scaleX(1.000);transform-origin:50% 0;">D</div>
<div class="a" style="left:185.7px;top:278.0px;width:1.2px;height:22.0px;background:#3a3a3a;"></div>
<div class="t" style="top:281.7px;font-size:16.8px;line-height:16.8px;color:#e3e3e3;left:273.2px;transform:translateX(-50%) scaleX(1.000);transform-origin:50% 0;">E</div>
<div class="a" style="left:243.6px;top:278.0px;width:1.2px;height:22.0px;background:#3a3a3a;"></div>
<div class="t" style="top:281.7px;font-size:16.8px;line-height:16.8px;color:#e3e3e3;left:331.3px;transform:translateX(-50%) scaleX(1.000);transform-origin:50% 0;">F</div>
<div class="a" style="left:301.6px;top:278.0px;width:1.2px;height:22.0px;background:#3a3a3a;"></div>
<div class="t" style="top:281.7px;font-size:16.8px;line-height:16.8px;color:#e3e3e3;left:394.2px;transform:translateX(-50%) scaleX(1.000);transform-origin:50% 0;">G</div>
<div class="a" style="left:359.8px;top:278.0px;width:1.2px;height:22.0px;background:#3a3a3a;"></div>
<div class="t" style="top:281.7px;font-size:16.8px;line-height:16.8px;color:#e3e3e3;left:457.2px;transform:translateX(-50%) scaleX(1.000);transform-origin:50% 0;">H</div>
<div class="a" style="left:427.5px;top:278.0px;width:1.2px;height:22.0px;background:#3a3a3a;"></div>
<div class="t" style="top:281.7px;font-size:16.8px;line-height:16.8px;color:#e3e3e3;left:515.3px;transform:translateX(-50%) scaleX(1.000);transform-origin:50% 0;">I</div>
<div class="a" style="left:485.8px;top:278.0px;width:1.2px;height:22.0px;background:#3a3a3a;"></div>
<div class="t" style="top:281.7px;font-size:16.8px;line-height:16.8px;color:#e3e3e3;left:604.2px;transform:translateX(-50%) scaleX(1.000);transform-origin:50% 0;">J</div>
<div class="a" style="left:543.7px;top:278.0px;width:1.2px;height:22.0px;background:#3a3a3a;"></div>
<div class="t" style="top:281.7px;font-size:16.8px;line-height:16.8px;color:#e3e3e3;left:724.2px;transform:translateX(-50%) scaleX(1.000);transform-origin:50% 0;">K</div>
<div class="a" style="left:663.5px;top:278.0px;width:1.2px;height:22.0px;background:#3a3a3a;"></div>
<div class="t" style="top:281.7px;font-size:16.8px;line-height:16.8px;color:#e3e3e3;left:844.5px;transform:translateX(-50%) scaleX(1.000);transform-origin:50% 0;">L</div>
<div class="a" style="left:783.8px;top:278.0px;width:1.2px;height:22.0px;background:#3a3a3a;"></div>
<div class="t" style="top:281.7px;font-size:16.8px;line-height:16.8px;color:#e3e3e3;left:964.5px;transform:translateX(-50%) scaleX(1.000);transform-origin:50% 0;">M</div>
<div class="a" style="left:903.9px;top:278.0px;width:1.2px;height:22.0px;background:#3a3a3a;"></div>
<div class="t" style="top:281.7px;font-size:16.8px;line-height:16.8px;color:#e3e3e3;left:1084.5px;transform:translateX(-50%) scaleX(1.000);transform-origin:50% 0;">N</div>
<div class="a" style="left:1023.9px;top:278.0px;width:1.2px;height:22.0px;background:#3a3a3a;"></div>
<div class="t" style="top:281.7px;font-size:16.8px;line-height:16.8px;color:#e3e3e3;left:1159.8px;transform:translateX(-50%) scaleX(1.000);transform-origin:50% 0;">O</div>
<div class="a" style="left:1143.9px;top:278.0px;width:1.2px;height:22.0px;background:#3a3a3a;"></div>
<div class="t" style="top:281.7px;font-size:16.8px;line-height:16.8px;color:#e3e3e3;left:1243.7px;transform:translateX(-50%) scaleX(1.000);transform-origin:50% 0;">P</div>
<div class="a" style="left:1174.6px;top:278.0px;width:1.2px;height:22.0px;background:#3a3a3a;"></div>
<div class="t" style="top:281.7px;font-size:16.8px;line-height:16.8px;color:#e3e3e3;left:1380.7px;transform:translateX(-50%) scaleX(1.000);transform-origin:50% 0;">Q</div>
<div class="a" style="left:1311.6px;top:278.0px;width:1.2px;height:22.0px;background:#3a3a3a;"></div>
<div class="t" style="top:281.7px;font-size:16.8px;line-height:16.8px;color:#e3e3e3;left:1517.7px;transform:translateX(-50%) scaleX(1.000);transform-origin:50% 0;">R</div>
<div class="a" style="left:1448.6px;top:278.0px;width:1.2px;height:22.0px;background:#3a3a3a;"></div>
<div class="t" style="top:281.7px;font-size:16.8px;line-height:16.8px;color:#e3e3e3;left:1654.7px;transform:translateX(-50%) scaleX(1.000);transform-origin:50% 0;">S</div>
<div class="a" style="left:1585.6px;top:278.0px;width:1.2px;height:22.0px;background:#3a3a3a;"></div>
<div class="t" style="top:281.7px;font-size:16.8px;line-height:16.8px;color:#e3e3e3;left:1791.7px;transform:translateX(-50%) scaleX(1.000);transform-origin:50% 0;">T</div>
<div class="a" style="left:1722.6px;top:278.0px;width:1.2px;height:22.0px;background:#3a3a3a;"></div>
<div class="t" style="top:281.7px;font-size:16.8px;line-height:16.8px;color:#e3e3e3;left:1928.7px;transform:translateX(-50%) scaleX(1.000);transform-origin:50% 0;">U</div>
<div class="a" style="left:1859.6px;top:278.0px;width:1.2px;height:22.0px;background:#3a3a3a;"></div>
<div class="t" style="top:281.7px;font-size:16.8px;line-height:16.8px;color:#e3e3e3;left:2065.7px;transform:translateX(-50%) scaleX(1.000);transform-origin:50% 0;">V</div>
<div class="a" style="left:1996.6px;top:278.0px;width:1.2px;height:22.0px;background:#3a3a3a;"></div>
<div class="t" style="top:281.7px;font-size:16.8px;line-height:16.8px;color:#e3e3e3;left:2202.7px;transform:translateX(-50%) scaleX(1.000);transform-origin:50% 0;">W</div>
<div class="a" style="left:2133.6px;top:278.0px;width:1.2px;height:22.0px;background:#3a3a3a;"></div>
<div class="t" style="top:281.7px;font-size:16.8px;line-height:16.8px;color:#e3e3e3;left:2339.7px;transform:translateX(-50%) scaleX(1.000);transform-origin:50% 0;">X</div>
<div class="a" style="left:2270.6px;top:278.0px;width:1.2px;height:22.0px;background:#3a3a3a;"></div>
<div class="t" style="top:281.7px;font-size:16.8px;line-height:16.8px;color:#e3e3e3;left:2476.7px;transform:translateX(-50%) scaleX(1.000);transform-origin:50% 0;">Y</div>
<div class="a" style="left:2407.6px;top:278.0px;width:1.2px;height:22.0px;background:#3a3a3a;"></div>
<div class="t" style="top:281.7px;font-size:16.8px;line-height:16.8px;color:#e3e3e3;left:2613.7px;transform:translateX(-50%) scaleX(1.000);transform-origin:50% 0;">Z</div>
<div class="a" style="left:2544.6px;top:278.0px;width:1.2px;height:22.0px;background:#3a3a3a;"></div>
<div class="t" style="top:281.7px;font-size:16.8px;line-height:16.8px;color:#e3e3e3;left:2750.7px;transform:translateX(-50%) scaleX(1.000);transform-origin:50% 0;">AA</div>
<div class="a" style="left:2681.6px;top:278.0px;width:1.2px;height:22.0px;background:#3a3a3a;"></div>
<div class="t" style="top:282.0px;font-size:16.5px;line-height:16.5px;color:#e3e3e3;left:2820.2px;transform:scaleX(0.930);transform-origin:0 0;overflow:hidden;">AB</div>
<div class="a" style="left:2818.6px;top:278.0px;width:1.2px;height:22.0px;background:#3a3a3a;"></div>
<div class="t" style="top:282.0px;font-size:16.5px;line-height:16.5px;color:#e3e3e3;left:2841.6px;transform:scaleX(0.930);transform-origin:0 0;overflow:hidden;">AC</div>
<div class="a" style="left:2840.0px;top:278.0px;width:1.2px;height:22.0px;background:#3a3a3a;"></div>
<div class="a" style="left:2818.6px;top:278.0px;width:1.2px;height:22.0px;background:#3a3a3a;"></div>
<div class="a" style="left:2841.6px;top:278.0px;width:1.2px;height:22.0px;background:#3a3a3a;"></div>
<div class="a" style="left:11.0px;top:300.0px;width:36.0px;height:1370.5px;background:#0c0c0c;"></div>
<div class="a" style="left:11.0px;top:300.0px;width:36.0px;height:37.5px;background:#6b6b6b;"></div>
<div class="t" style="top:318.6px;font-size:16.8px;line-height:16.8px;color:#ffffff;left:29.0px;transform:translateX(-50%) scaleX(1.000);transform-origin:50% 0;">1</div>
<div class="a" style="left:11.0px;top:337.0px;width:36.0px;height:1.0px;background:#c9c9c9;"></div>
<div class="t" style="top:351.3px;font-size:16.8px;line-height:16.8px;color:#e3e3e3;left:29.0px;transform:translateX(-50%) scaleX(1.000);transform-origin:50% 0;">2</div>
<div class="a" style="left:11.0px;top:369.7px;width:36.0px;height:1.0px;background:#555;"></div>
<div class="t" style="top:384.5px;font-size:16.8px;line-height:16.8px;color:#e3e3e3;left:29.0px;transform:translateX(-50%) scaleX(1.000);transform-origin:50% 0;">3</div>
<div class="a" style="left:11.0px;top:402.9px;width:36.0px;height:1.0px;background:#555;"></div>
<div class="t" style="top:408.1px;font-size:16.8px;line-height:16.8px;color:#e3e3e3;left:29.0px;transform:translateX(-50%) scaleX(1.000);transform-origin:50% 0;">4</div>
<div class="a" style="left:11.0px;top:426.5px;width:36.0px;height:1.0px;background:#555;"></div>
<div class="t" style="top:443.6px;font-size:16.8px;line-height:16.8px;color:#e3e3e3;left:29.0px;transform:translateX(-50%) scaleX(1.000);transform-origin:50% 0;">5</div>
<div class="a" style="left:11.0px;top:462.0px;width:36.0px;height:1.0px;background:#555;"></div>
<div class="a" style="left:11.0px;top:466.5px;width:36.0px;height:1.0px;background:#555;"></div>
<div class="t" style="top:471.1px;font-size:16.8px;line-height:16.8px;color:#e3e3e3;left:29.0px;transform:translateX(-50%) scaleX(1.000);transform-origin:50% 0;">7</div>
<div class="a" style="left:11.0px;top:489.5px;width:36.0px;height:1.0px;background:#555;"></div>
<div class="t" style="top:494.5px;font-size:16.8px;line-height:16.8px;color:#e3e3e3;left:29.0px;transform:translateX(-50%) scaleX(1.000);transform-origin:50% 0;">8</div>
<div class="a" style="left:11.0px;top:512.9px;width:36.0px;height:1.0px;background:#555;"></div>
<div class="t" style="top:517.7px;font-size:16.8px;line-height:16.8px;color:#e3e3e3;left:29.0px;transform:translateX(-50%) scaleX(1.000);transform-origin:50% 0;">9</div>
<div class="a" style="left:11.0px;top:536.1px;width:36.0px;height:1.0px;background:#555;"></div>
<div class="t" style="top:540.6px;font-size:16.8px;line-height:16.8px;color:#e3e3e3;left:29.5px;transform:translateX(-50%) scaleX(1.000);transform-origin:50% 0;">10</div>
<div class="a" style="left:11.0px;top:559.0px;width:36.0px;height:1.0px;background:#555;"></div>
<div class="t" style="top:563.4px;font-size:16.8px;line-height:16.8px;color:#e3e3e3;left:29.5px;transform:translateX(-50%) scaleX(1.000);transform-origin:50% 0;">11</div>
<div class="a" style="left:11.0px;top:581.8px;width:36.0px;height:1.0px;background:#555;"></div>
<div class="t" style="top:589.4px;font-size:16.8px;line-height:16.8px;color:#e3e3e3;left:29.5px;transform:translateX(-50%) scaleX(1.000);transform-origin:50% 0;">12</div>
<div class="a" style="left:11.0px;top:607.8px;width:36.0px;height:1.0px;background:#555;"></div>
<div class="t" style="top:612.1px;font-size:16.8px;line-height:16.8px;color:#e3e3e3;left:29.5px;transform:translateX(-50%) scaleX(1.000);transform-origin:50% 0;">13</div>
<div class="a" style="left:11.0px;top:630.5px;width:36.0px;height:1.0px;background:#555;"></div>
<div class="t" style="top:635.6px;font-size:16.8px;line-height:16.8px;color:#e3e3e3;left:29.5px;transform:translateX(-50%) scaleX(1.000);transform-origin:50% 0;">14</div>
<div class="a" style="left:11.0px;top:654.0px;width:36.0px;height:1.0px;background:#555;"></div>
<div class="t" style="top:658.4px;font-size:16.8px;line-height:16.8px;color:#e3e3e3;left:29.5px;transform:translateX(-50%) scaleX(1.000);transform-origin:50% 0;">15</div>
<div class="a" style="left:11.0px;top:676.8px;width:36.0px;height:1.0px;background:#555;"></div>
<div class="t" style="top:684.5px;font-size:16.8px;line-height:16.8px;color:#e3e3e3;left:29.5px;transform:translateX(-50%) scaleX(1.000);transform-origin:50% 0;">16</div>
<div class="a" style="left:11.0px;top:702.9px;width:36.0px;height:1.0px;background:#555;"></div>
<div class="t" style="top:707.9px;font-size:16.8px;line-height:16.8px;color:#e3e3e3;left:29.5px;transform:translateX(-50%) scaleX(1.000);transform-origin:50% 0;">17</div>
<div class="a" style="left:11.0px;top:726.3px;width:36.0px;height:1.0px;background:#555;"></div>
<div class="t" style="top:730.6px;font-size:16.8px;line-height:16.8px;color:#e3e3e3;left:29.5px;transform:translateX(-50%) scaleX(1.000);transform-origin:50% 0;">18</div>
<div class="a" style="left:11.0px;top:749.0px;width:36.0px;height:1.0px;background:#555;"></div>
<div class="t" style="top:753.6px;font-size:16.8px;line-height:16.8px;color:#e3e3e3;left:29.5px;transform:translateX(-50%) scaleX(1.000);transform-origin:50% 0;">19</div>
<div class="a" style="left:11.0px;top:772.0px;width:36.0px;height:1.0px;background:#555;"></div>
<div class="a" style="left:11.0px;top:776.5px;width:36.0px;height:1.0px;background:#555;"></div>
<div class="t" style="top:781.4px;font-size:16.8px;line-height:16.8px;color:#e3e3e3;left:29.5px;transform:translateX(-50%) scaleX(1.000);transform-origin:50% 0;">21</div>
<div class="a" style="left:11.0px;top:799.8px;width:36.0px;height:1.0px;background:#555;"></div>
<div class="t" style="top:804.8px;font-size:16.8px;line-height:16.8px;color:#e3e3e3;left:29.5px;transform:translateX(-50%) scaleX(1.000);transform-origin:50% 0;">22</div>
<div class="a" style="left:11.0px;top:823.2px;width:36.0px;height:1.0px;background:#555;"></div>
<div class="a" style="left:11.0px;top:827.9px;width:36.0px;height:1.0px;background:#555;"></div>
<div class="t" style="top:835.6px;font-size:16.8px;line-height:16.8px;color:#e3e3e3;left:29.5px;transform:translateX(-50%) scaleX(1.000);transform-origin:50% 0;">24</div>
<div class="a" style="left:11.0px;top:854.0px;width:36.0px;height:1.0px;background:#555;"></div>
<div class="t" style="top:858.5px;font-size:16.8px;line-height:16.8px;color:#e3e3e3;left:29.5px;transform:translateX(-50%) scaleX(1.000);transform-origin:50% 0;">25</div>
<div class="a" style="left:11.0px;top:876.9px;width:36.0px;height:1.0px;background:#555;"></div>
<div class="t" style="top:881.2px;font-size:16.8px;line-height:16.8px;color:#e3e3e3;left:29.5px;transform:translateX(-50%) scaleX(1.000);transform-origin:50% 0;">26</div>
<div class="a" style="left:11.0px;top:899.6px;width:36.0px;height:1.0px;background:#555;"></div>
<div class="t" style="top:904.6px;font-size:16.8px;line-height:16.8px;color:#e3e3e3;left:29.5px;transform:translateX(-50%) scaleX(1.000);transform-origin:50% 0;">27</div>
<div class="a" style="left:11.0px;top:923.0px;width:36.0px;height:1.0px;background:#555;"></div>
<div class="t" style="top:927.6px;font-size:16.8px;line-height:16.8px;color:#e3e3e3;left:29.5px;transform:translateX(-50%) scaleX(1.000);transform-origin:50% 0;">28</div>
<div class="a" style="left:11.0px;top:946.0px;width:36.0px;height:1.0px;background:#555;"></div>
<div class="t" style="top:950.7px;font-size:16.8px;line-height:16.8px;color:#e3e3e3;left:29.5px;transform:translateX(-50%) scaleX(1.000);transform-origin:50% 0;">29</div>
<div class="a" style="left:11.0px;top:969.1px;width:36.0px;height:1.0px;background:#555;"></div>
<div class="t" style="top:973.5px;font-size:16.8px;line-height:16.8px;color:#e3e3e3;left:29.5px;transform:translateX(-50%) scaleX(1.000);transform-origin:50% 0;">30</div>
<div class="a" style="left:11.0px;top:991.9px;width:36.0px;height:1.0px;background:#555;"></div>
<div class="t" style="top:999.5px;font-size:16.8px;line-height:16.8px;color:#e3e3e3;left:29.5px;transform:translateX(-50%) scaleX(1.000);transform-origin:50% 0;">31</div>
<div class="a" style="left:11.0px;top:1017.9px;width:36.0px;height:1.0px;background:#555;"></div>
<div class="t" style="top:1022.6px;font-size:16.8px;line-height:16.8px;color:#e3e3e3;left:29.5px;transform:translateX(-50%) scaleX(1.000);transform-origin:50% 0;">32</div>
<div class="a" style="left:11.0px;top:1041.0px;width:36.0px;height:1.0px;background:#555;"></div>
<div class="t" style="top:1046.5px;font-size:16.8px;line-height:16.8px;color:#e3e3e3;left:29.5px;transform:translateX(-50%) scaleX(1.000);transform-origin:50% 0;">33</div>
<div class="a" style="left:11.0px;top:1064.9px;width:36.0px;height:1.0px;background:#555;"></div>
<div class="t" style="top:1081.3px;font-size:16.8px;line-height:16.8px;color:#e3e3e3;left:29.5px;transform:translateX(-50%) scaleX(1.000);transform-origin:50% 0;">34</div>
<div class="a" style="left:11.0px;top:1099.7px;width:36.0px;height:1.0px;background:#555;"></div>
<div class="t" style="top:1104.7px;font-size:16.8px;line-height:16.8px;color:#e3e3e3;left:29.5px;transform:translateX(-50%) scaleX(1.000);transform-origin:50% 0;">35</div>
<div class="a" style="left:11.0px;top:1123.1px;width:36.0px;height:1.0px;background:#555;"></div>
<div class="t" style="top:1127.7px;font-size:16.8px;line-height:16.8px;color:#e3e3e3;left:29.5px;transform:translateX(-50%) scaleX(1.000);transform-origin:50% 0;">36</div>
<div class="a" style="left:11.0px;top:1146.1px;width:36.0px;height:1.0px;background:#555;"></div>
<div class="t" style="top:1150.8px;font-size:16.8px;line-height:16.8px;color:#e3e3e3;left:29.5px;transform:translateX(-50%) scaleX(1.000);transform-origin:50% 0;">37</div>
<div class="a" style="left:11.0px;top:1169.2px;width:36.0px;height:1.0px;background:#555;"></div>
<div class="t" style="top:1173.5px;font-size:16.8px;line-height:16.8px;color:#e3e3e3;left:29.5px;transform:translateX(-50%) scaleX(1.000);transform-origin:50% 0;">38</div>
<div class="a" style="left:11.0px;top:1191.9px;width:36.0px;height:1.0px;background:#555;"></div>
<div class="t" style="top:1196.7px;font-size:16.8px;line-height:16.8px;color:#e3e3e3;left:29.5px;transform:translateX(-50%) scaleX(1.000);transform-origin:50% 0;">39</div>
<div class="a" style="left:11.0px;top:1215.1px;width:36.0px;height:1.0px;background:#555;"></div>
<div class="t" style="top:1219.8px;font-size:16.8px;line-height:16.8px;color:#e3e3e3;left:29.5px;transform:translateX(-50%) scaleX(1.000);transform-origin:50% 0;">40</div>
<div class="a" style="left:11.0px;top:1238.2px;width:36.0px;height:1.0px;background:#555;"></div>
<div class="t" style="top:1242.5px;font-size:16.8px;line-height:16.8px;color:#e3e3e3;left:29.5px;transform:translateX(-50%) scaleX(1.000);transform-origin:50% 0;">41</div>
<div class="a" style="left:11.0px;top:1260.9px;width:36.0px;height:1.0px;background:#555;"></div>
<div class="t" style="top:1265.7px;font-size:16.8px;line-height:16.8px;color:#e3e3e3;left:29.5px;transform:translateX(-50%) scaleX(1.000);transform-origin:50% 0;">42</div>
<div class="a" style="left:11.0px;top:1284.1px;width:36.0px;height:1.0px;background:#555;"></div>
<div class="t" style="top:1288.7px;font-size:16.8px;line-height:16.8px;color:#e3e3e3;left:29.5px;transform:translateX(-50%) scaleX(1.000);transform-origin:50% 0;">43</div>
<div class="a" style="left:11.0px;top:1307.1px;width:36.0px;height:1.0px;background:#555;"></div>
<div class="t" style="top:1311.4px;font-size:16.8px;line-height:16.8px;color:#e3e3e3;left:29.5px;transform:translateX(-50%) scaleX(1.000);transform-origin:50% 0;">44</div>
<div class="a" style="left:11.0px;top:1329.8px;width:36.0px;height:1.0px;background:#555;"></div>
<div class="t" style="top:1334.5px;font-size:16.8px;line-height:16.8px;color:#e3e3e3;left:29.5px;transform:translateX(-50%) scaleX(1.000);transform-origin:50% 0;">45</div>
<div class="a" style="left:11.0px;top:1352.9px;width:36.0px;height:1.0px;background:#555;"></div>
<div class="t" style="top:1357.5px;font-size:16.8px;line-height:16.8px;color:#e3e3e3;left:29.5px;transform:translateX(-50%) scaleX(1.000);transform-origin:50% 0;">46</div>
<div class="a" style="left:11.0px;top:1375.9px;width:36.0px;height:1.0px;background:#555;"></div>
<div class="t" style="top:1380.5px;font-size:16.8px;line-height:16.8px;color:#e3e3e3;left:29.5px;transform:translateX(-50%) scaleX(1.000);transform-origin:50% 0;">47</div>
<div class="a" style="left:11.0px;top:1398.9px;width:36.0px;height:1.0px;background:#555;"></div>
<div class="t" style="top:1403.5px;font-size:16.8px;line-height:16.8px;color:#e3e3e3;left:29.5px;transform:translateX(-50%) scaleX(1.000);transform-origin:50% 0;">48</div>
<div class="a" style="left:11.0px;top:1421.9px;width:36.0px;height:1.0px;background:#555;"></div>
<div class="t" style="top:1426.5px;font-size:16.8px;line-height:16.8px;color:#e3e3e3;left:29.5px;transform:translateX(-50%) scaleX(1.000);transform-origin:50% 0;">49</div>
<div class="a" style="left:11.0px;top:1444.9px;width:36.0px;height:1.0px;background:#555;"></div>
<div class="t" style="top:1449.5px;font-size:16.8px;line-height:16.8px;color:#e3e3e3;left:29.5px;transform:translateX(-50%) scaleX(1.000);transform-origin:50% 0;">50</div>
<div class="a" style="left:11.0px;top:1467.9px;width:36.0px;height:1.0px;background:#555;"></div>
<div class="t" style="top:1472.4px;font-size:16.8px;line-height:16.8px;color:#e3e3e3;left:29.5px;transform:translateX(-50%) scaleX(1.000);transform-origin:50% 0;">51</div>
<div class="a" style="left:11.0px;top:1490.8px;width:36.0px;height:1.0px;background:#555;"></div>
<div class="t" style="top:1495.4px;font-size:16.8px;line-height:16.8px;color:#e3e3e3;left:29.5px;transform:translateX(-50%) scaleX(1.000);transform-origin:50% 0;">52</div>
<div class="a" style="left:11.0px;top:1513.8px;width:36.0px;height:1.0px;background:#555;"></div>
<div class="t" style="top:1518.8px;font-size:16.8px;line-height:16.8px;color:#e3e3e3;left:29.5px;transform:translateX(-50%) scaleX(1.000);transform-origin:50% 0;">53</div>
<div class="a" style="left:11.0px;top:1537.2px;width:36.0px;height:1.0px;background:#555;"></div>
<div class="t" style="top:1542.6px;font-size:16.8px;line-height:16.8px;color:#e3e3e3;left:29.5px;transform:translateX(-50%) scaleX(1.000);transform-origin:50% 0;">54</div>
<div class="a" style="left:11.0px;top:1561.0px;width:36.0px;height:1.0px;background:#555;"></div>
<div class="t" style="top:1577.4px;font-size:16.8px;line-height:16.8px;color:#e3e3e3;left:29.5px;transform:translateX(-50%) scaleX(1.000);transform-origin:50% 0;">55</div>
<div class="a" style="left:11.0px;top:1595.8px;width:36.0px;height:1.0px;background:#555;"></div>
<div class="a" style="left:11.0px;top:1600.7px;width:36.0px;height:1.0px;background:#555;"></div>
<div class="t" style="top:1605.9px;font-size:16.8px;line-height:16.8px;color:#e3e3e3;left:29.5px;transform:translateX(-50%) scaleX(1.000);transform-origin:50% 0;">57</div>
<div class="a" style="left:11.0px;top:1624.3px;width:36.0px;height:1.0px;background:#555;"></div>
<div class="a" style="left:11.0px;top:1629.0px;width:36.0px;height:1.0px;background:#555;"></div>
<div class="t" style="top:1633.6px;font-size:16.8px;line-height:16.8px;color:#e3e3e3;left:29.5px;transform:translateX(-50%) scaleX(1.000);transform-origin:50% 0;">59</div>
<div class="a" style="left:11.0px;top:1652.0px;width:36.0px;height:1.0px;background:#555;"></div>
<div class="t" style="top:1655.3px;font-size:16.8px;line-height:16.8px;color:#e3e3e3;left:29.5px;transform:translateX(-50%) scaleX(1.000);transform-origin:50% 0;">60</div>
<div class="a" style="left:11.0px;top:1673.7px;width:36.0px;height:1.0px;background:#555;"></div>
<div class="a" style="left:11.0px;top:299.4px;width:36.0px;height:1.3px;background:#c9c9c9;"></div>
<div class="a" style="left:46.2px;top:300.0px;width:1.4px;height:37.5px;background:#2f8a4f;"></div>
<div class="a" style="left:47.0px;top:426.5px;width:2813.0px;height:1.1px;background:#b8b8b8;"></div>
<div class="a" style="left:70.1px;top:427.8px;width:1074.7px;height:34.7px;background:#4b50d3;"></div>
<div class="t" style="top:430.3px;font-size:29.4px;line-height:29.4px;color:#fff;font-weight:bold;left:607.2px;transform:translateX(-50%) scaleX(1.051);transform-origin:50% 0;">Income Statement ($'000) - 5 years to December 2030</div>
<div class="a" style="left:1175.2px;top:427.8px;width:1644.3px;height:34.7px;background:#4b50d3;"></div>
<div class="t" style="top:430.3px;font-size:29.4px;line-height:29.4px;color:#fff;font-weight:bold;left:1997.5px;transform:translateX(-50%) scaleX(1.074);transform-origin:50% 0;">Income Statement ($'000) - 2026</div>
<div class="a" style="left:71.2px;top:468.0px;width:1072.6px;height:21.6px;background:#6c73e8;"></div>
<div class="a" style="left:543.4px;top:468.0px;width:1.8px;height:21.6px;background:#fff;"></div>
<div class="a" style="left:663.2px;top:468.0px;width:1.8px;height:21.6px;background:#fff;"></div>
<div class="a" style="left:783.5px;top:468.0px;width:1.8px;height:21.6px;background:#fff;"></div>
<div class="a" style="left:903.6px;top:468.0px;width:1.8px;height:21.6px;background:#fff;"></div>
<div class="a" style="left:1023.6px;top:468.0px;width:1.8px;height:21.6px;background:#fff;"></div>
<div class="t" style="top:470.5px;font-size:18.4px;line-height:18.4px;color:#fff;font-weight:bold;left:82.6px;">Year Ending</div>
<div class="t" style="top:470.6px;font-size:17.4px;line-height:17.4px;color:#fff;font-weight:bold;left:604.2px;transform:translateX(-50%) scaleX(1.100);transform-origin:50% 0;">2026</div>
<div class="t" style="top:470.6px;font-size:17.4px;line-height:17.4px;color:#fff;font-weight:bold;left:724.2px;transform:translateX(-50%) scaleX(1.100);transform-origin:50% 0;">2027</div>
<div class="t" style="top:470.6px;font-size:17.4px;line-height:17.4px;color:#fff;font-weight:bold;left:844.5px;transform:translateX(-50%) scaleX(1.100);transform-origin:50% 0;">2028</div>
<div class="t" style="top:470.6px;font-size:17.4px;line-height:17.4px;color:#fff;font-weight:bold;left:964.5px;transform:translateX(-50%) scaleX(1.100);transform-origin:50% 0;">2029</div>
<div class="t" style="top:470.6px;font-size:17.4px;line-height:17.4px;color:#fff;font-weight:bold;left:1084.5px;transform:translateX(-50%) scaleX(1.100);transform-origin:50% 0;">2030</div>
<div class="a" style="left:1175.8px;top:468.0px;width:1642.9px;height:21.6px;background:#6c73e8;"></div>
<div class="a" style="left:1311.3px;top:468.0px;width:1.8px;height:21.6px;background:#fff;"></div>
<div class="a" style="left:1448.3px;top:468.0px;width:1.8px;height:21.6px;background:#fff;"></div>
<div class="a" style="left:1585.3px;top:468.0px;width:1.8px;height:21.6px;background:#fff;"></div>
<div class="a" style="left:1722.3px;top:468.0px;width:1.8px;height:21.6px;background:#fff;"></div>
<div class="a" style="left:1859.3px;top:468.0px;width:1.8px;height:21.6px;background:#fff;"></div>
<div class="a" style="left:1996.3px;top:468.0px;width:1.8px;height:21.6px;background:#fff;"></div>
<div class="a" style="left:2133.3px;top:468.0px;width:1.8px;height:21.6px;background:#fff;"></div>
<div class="a" style="left:2270.3px;top:468.0px;width:1.8px;height:21.6px;background:#fff;"></div>
<div class="a" style="left:2407.3px;top:468.0px;width:1.8px;height:21.6px;background:#fff;"></div>
<div class="a" style="left:2544.3px;top:468.0px;width:1.8px;height:21.6px;background:#fff;"></div>
<div class="a" style="left:2681.3px;top:468.0px;width:1.8px;height:21.6px;background:#fff;"></div>
<div class="t" style="top:470.6px;font-size:17.4px;line-height:17.4px;color:#fff;font-weight:bold;left:1243.7px;transform:translateX(-50%) scaleX(1.100);transform-origin:50% 0;">Jan</div>
<div class="t" style="top:470.6px;font-size:17.4px;line-height:17.4px;color:#fff;font-weight:bold;left:1380.7px;transform:translateX(-50%) scaleX(1.100);transform-origin:50% 0;">Feb</div>
<div class="t" style="top:470.6px;font-size:17.4px;line-height:17.4px;color:#fff;font-weight:bold;left:1517.7px;transform:translateX(-50%) scaleX(1.100);transform-origin:50% 0;">Mar</div>
<div class="t" style="top:470.6px;font-size:17.4px;line-height:17.4px;color:#fff;font-weight:bold;left:1654.7px;transform:translateX(-50%) scaleX(1.100);transform-origin:50% 0;">Apr</div>
<div class="t" style="top:470.6px;font-size:17.4px;line-height:17.4px;color:#fff;font-weight:bold;left:1791.7px;transform:translateX(-50%) scaleX(1.100);transform-origin:50% 0;">May</div>
<div class="t" style="top:470.6px;font-size:17.4px;line-height:17.4px;color:#fff;font-weight:bold;left:1928.7px;transform:translateX(-50%) scaleX(1.100);transform-origin:50% 0;">Jun</div>
<div class="t" style="top:470.6px;font-size:17.4px;line-height:17.4px;color:#fff;font-weight:bold;left:2065.7px;transform:translateX(-50%) scaleX(1.100);transform-origin:50% 0;">Jul</div>
<div class="t" style="top:470.6px;font-size:17.4px;line-height:17.4px;color:#fff;font-weight:bold;left:2202.7px;transform:translateX(-50%) scaleX(1.100);transform-origin:50% 0;">Aug</div>
<div class="t" style="top:470.6px;font-size:17.4px;line-height:17.4px;color:#fff;font-weight:bold;left:2339.7px;transform:translateX(-50%) scaleX(1.100);transform-origin:50% 0;">Sep</div>
<div class="t" style="top:470.6px;font-size:17.4px;line-height:17.4px;color:#fff;font-weight:bold;left:2476.7px;transform:translateX(-50%) scaleX(1.100);transform-origin:50% 0;">Oct</div>
<div class="t" style="top:470.6px;font-size:17.4px;line-height:17.4px;color:#fff;font-weight:bold;left:2613.7px;transform:translateX(-50%) scaleX(1.100);transform-origin:50% 0;">Nov</div>
<div class="t" style="top:470.6px;font-size:17.4px;line-height:17.4px;color:#fff;font-weight:bold;left:2750.7px;transform:translateX(-50%) scaleX(1.100);transform-origin:50% 0;">Dec</div>
<div class="t" style="top:494.3px;font-size:17.5px;line-height:17.5px;left:74.0px;transform:scaleX(0.949);transform-origin:0 0;">Revenue</div>
<div class="t" style="top:494.3px;font-size:17.5px;line-height:17.5px;right:2249.5px;transform:scaleX(1.060);transform-origin:100% 0;">2,135</div>
<div class="t" style="top:494.3px;font-size:17.5px;line-height:17.5px;right:2129.2px;transform:scaleX(1.060);transform-origin:100% 0;">3,624</div>
<div class="t" style="top:494.3px;font-size:17.5px;line-height:17.5px;right:2009.1px;transform:scaleX(1.060);transform-origin:100% 0;">6,113</div>
<div class="t" style="top:494.3px;font-size:17.5px;line-height:17.5px;right:1889.1px;transform:scaleX(1.060);transform-origin:100% 0;">8,770</div>
<div class="t" style="top:494.3px;font-size:17.5px;line-height:17.5px;right:1769.1px;transform:scaleX(1.060);transform-origin:100% 0;">12,486</div>
<div class="t" style="top:494.3px;font-size:17.5px;line-height:17.5px;right:1601.4px;transform:scaleX(1.060);transform-origin:100% 0;">178</div>
<div class="t" style="top:494.3px;font-size:17.5px;line-height:17.5px;right:1464.4px;transform:scaleX(1.060);transform-origin:100% 0;">178</div>
<div class="t" style="top:494.3px;font-size:17.5px;line-height:17.5px;right:1327.4px;transform:scaleX(1.060);transform-origin:100% 0;">178</div>
<div class="t" style="top:494.3px;font-size:17.5px;line-height:17.5px;right:1190.4px;transform:scaleX(1.060);transform-origin:100% 0;">178</div>
<div class="t" style="top:494.3px;font-size:17.5px;line-height:17.5px;right:1053.4px;transform:scaleX(1.060);transform-origin:100% 0;">178</div>
<div class="t" style="top:494.3px;font-size:17.5px;line-height:17.5px;right:916.4px;transform:scaleX(1.060);transform-origin:100% 0;">178</div>
<div class="t" style="top:494.3px;font-size:17.5px;line-height:17.5px;right:779.4px;transform:scaleX(1.060);transform-origin:100% 0;">178</div>
<div class="t" style="top:494.3px;font-size:17.5px;line-height:17.5px;right:642.4px;transform:scaleX(1.060);transform-origin:100% 0;">178</div>
<div class="t" style="top:494.3px;font-size:17.5px;line-height:17.5px;right:505.4px;transform:scaleX(1.060);transform-origin:100% 0;">178</div>
<div class="t" style="top:494.3px;font-size:17.5px;line-height:17.5px;right:368.4px;transform:scaleX(1.060);transform-origin:100% 0;">178</div>
<div class="t" style="top:494.3px;font-size:17.5px;line-height:17.5px;right:231.4px;transform:scaleX(1.060);transform-origin:100% 0;">178</div>
<div class="t" style="top:494.3px;font-size:17.5px;line-height:17.5px;right:94.4px;transform:scaleX(1.060);transform-origin:100% 0;">178</div>
<div class="t" style="top:517.5px;font-size:17.5px;line-height:17.5px;font-style:italic;left:92.0px;transform:scaleX(1.046);transform-origin:0 0;">Growth %</div>
<div class="t" style="top:517.5px;font-size:17.5px;line-height:17.5px;font-style:italic;right:2130.6px;transform:scaleX(1.120);transform-origin:100% 0;">70%</div>
<div class="t" style="top:517.5px;font-size:17.5px;line-height:17.5px;font-style:italic;right:2010.5px;transform:scaleX(1.120);transform-origin:100% 0;">69%</div>
<div class="t" style="top:517.5px;font-size:17.5px;line-height:17.5px;font-style:italic;right:1890.5px;transform:scaleX(1.120);transform-origin:100% 0;">43%</div>
<div class="t" style="top:517.5px;font-size:17.5px;line-height:17.5px;font-style:italic;right:1770.5px;transform:scaleX(1.120);transform-origin:100% 0;">42%</div>
<div class="t" style="top:516.7px;font-size:17.5px;line-height:17.5px;right:1602.3px;">-</div>
<div class="t" style="top:516.7px;font-size:17.5px;line-height:17.5px;right:1465.3px;">-</div>
<div class="t" style="top:516.7px;font-size:17.5px;line-height:17.5px;right:1328.3px;">-</div>
<div class="t" style="top:516.7px;font-size:17.5px;line-height:17.5px;right:1191.3px;">-</div>
<div class="t" style="top:516.7px;font-size:17.5px;line-height:17.5px;right:1054.3px;">-</div>
<div class="t" style="top:516.7px;font-size:17.5px;line-height:17.5px;right:917.3px;">-</div>
<div class="t" style="top:516.7px;font-size:17.5px;line-height:17.5px;right:780.3px;">-</div>
<div class="t" style="top:516.7px;font-size:17.5px;line-height:17.5px;right:643.3px;">-</div>
<div class="t" style="top:516.7px;font-size:17.5px;line-height:17.5px;right:506.3px;">-</div>
<div class="t" style="top:516.7px;font-size:17.5px;line-height:17.5px;right:369.3px;">-</div>
<div class="t" style="top:516.7px;font-size:17.5px;line-height:17.5px;right:232.3px;">-</div>
<div class="t" style="top:516.7px;font-size:17.5px;line-height:17.5px;right:95.3px;">-</div>
<div class="t" style="top:540.4px;font-size:17.5px;line-height:17.5px;left:74.0px;transform:scaleX(0.883);transform-origin:0 0;">COGS</div>
<div class="t" style="top:540.4px;font-size:17.5px;line-height:17.5px;right:2241.9px;transform:scaleX(1.060);transform-origin:100% 0;">(107)</div>
<div class="t" style="top:540.4px;font-size:17.5px;line-height:17.5px;right:2121.6px;transform:scaleX(1.060);transform-origin:100% 0;">(167)</div>
<div class="t" style="top:540.4px;font-size:17.5px;line-height:17.5px;right:2001.5px;transform:scaleX(1.060);transform-origin:100% 0;">(257)</div>
<div class="t" style="top:540.4px;font-size:17.5px;line-height:17.5px;right:1881.5px;transform:scaleX(1.060);transform-origin:100% 0;">(333)</div>
<div class="t" style="top:540.4px;font-size:17.5px;line-height:17.5px;right:1761.5px;transform:scaleX(1.060);transform-origin:100% 0;">(425)</div>
<div class="t" style="top:540.4px;font-size:17.5px;line-height:17.5px;right:1593.8px;transform:scaleX(1.060);transform-origin:100% 0;">(9)</div>
<div class="t" style="top:540.4px;font-size:17.5px;line-height:17.5px;right:1456.8px;transform:scaleX(1.060);transform-origin:100% 0;">(9)</div>
<div class="t" style="top:540.4px;font-size:17.5px;line-height:17.5px;right:1319.8px;transform:scaleX(1.060);transform-origin:100% 0;">(9)</div>
<div class="t" style="top:540.4px;font-size:17.5px;line-height:17.5px;right:1182.8px;transform:scaleX(1.060);transform-origin:100% 0;">(9)</div>
<div class="t" style="top:540.4px;font-size:17.5px;line-height:17.5px;right:1045.8px;transform:scaleX(1.060);transform-origin:100% 0;">(9)</div>
<div class="t" style="top:540.4px;font-size:17.5px;line-height:17.5px;right:908.8px;transform:scaleX(1.060);transform-origin:100% 0;">(9)</div>
<div class="t" style="top:540.4px;font-size:17.5px;line-height:17.5px;right:771.8px;transform:scaleX(1.060);transform-origin:100% 0;">(9)</div>
<div class="t" style="top:540.4px;font-size:17.5px;line-height:17.5px;right:634.8px;transform:scaleX(1.060);transform-origin:100% 0;">(9)</div>
<div class="t" style="top:540.4px;font-size:17.5px;line-height:17.5px;right:497.8px;transform:scaleX(1.060);transform-origin:100% 0;">(9)</div>
<div class="t" style="top:540.4px;font-size:17.5px;line-height:17.5px;right:360.8px;transform:scaleX(1.060);transform-origin:100% 0;">(9)</div>
<div class="t" style="top:540.4px;font-size:17.5px;line-height:17.5px;right:223.8px;transform:scaleX(1.060);transform-origin:100% 0;">(9)</div>
<div class="t" style="top:540.4px;font-size:17.5px;line-height:17.5px;right:86.8px;transform:scaleX(1.060);transform-origin:100% 0;">(9)</div>
<div class="t" style="top:563.2px;font-size:17.5px;line-height:17.5px;font-style:italic;left:92.0px;transform:scaleX(1.019);transform-origin:0 0;">% of Revenue</div>
<div class="t" style="top:563.2px;font-size:17.5px;line-height:17.5px;font-style:italic;right:2242.9px;transform:scaleX(1.120);transform-origin:100% 0;">(5%)</div>
<div class="t" style="top:563.2px;font-size:17.5px;line-height:17.5px;font-style:italic;right:2122.6px;transform:scaleX(1.120);transform-origin:100% 0;">(5%)</div>
<div class="t" style="top:563.2px;font-size:17.5px;line-height:17.5px;font-style:italic;right:2002.5px;transform:scaleX(1.120);transform-origin:100% 0;">(4%)</div>
<div class="t" style="top:563.2px;font-size:17.5px;line-height:17.5px;font-style:italic;right:1882.5px;transform:scaleX(1.120);transform-origin:100% 0;">(4%)</div>
<div class="t" style="top:563.2px;font-size:17.5px;line-height:17.5px;font-style:italic;right:1762.5px;transform:scaleX(1.120);transform-origin:100% 0;">(3%)</div>
<div class="t" style="top:563.2px;font-size:17.5px;line-height:17.5px;font-style:italic;right:1594.8px;transform:scaleX(1.120);transform-origin:100% 0;">(5%)</div>
<div class="t" style="top:563.2px;font-size:17.5px;line-height:17.5px;font-style:italic;right:1457.8px;transform:scaleX(1.120);transform-origin:100% 0;">(5%)</div>
<div class="t" style="top:563.2px;font-size:17.5px;line-height:17.5px;font-style:italic;right:1320.8px;transform:scaleX(1.120);transform-origin:100% 0;">(5%)</div>
<div class="t" style="top:563.2px;font-size:17.5px;line-height:17.5px;font-style:italic;right:1183.8px;transform:scaleX(1.120);transform-origin:100% 0;">(5%)</div>
<div class="t" style="top:563.2px;font-size:17.5px;line-height:17.5px;font-style:italic;right:1046.8px;transform:scaleX(1.120);transform-origin:100% 0;">(5%)</div>
<div class="t" style="top:563.2px;font-size:17.5px;line-height:17.5px;font-style:italic;right:909.8px;transform:scaleX(1.120);transform-origin:100% 0;">(5%)</div>
<div class="t" style="top:563.2px;font-size:17.5px;line-height:17.5px;font-style:italic;right:772.8px;transform:scaleX(1.120);transform-origin:100% 0;">(5%)</div>
<div class="t" style="top:563.2px;font-size:17.5px;line-height:17.5px;font-style:italic;right:635.8px;transform:scaleX(1.120);transform-origin:100% 0;">(5%)</div>
<div class="t" style="top:563.2px;font-size:17.5px;line-height:17.5px;font-style:italic;right:498.8px;transform:scaleX(1.120);transform-origin:100% 0;">(5%)</div>
<div class="t" style="top:563.2px;font-size:17.5px;line-height:17.5px;font-style:italic;right:361.8px;transform:scaleX(1.120);transform-origin:100% 0;">(5%)</div>
<div class="t" style="top:563.2px;font-size:17.5px;line-height:17.5px;font-style:italic;right:224.8px;transform:scaleX(1.120);transform-origin:100% 0;">(5%)</div>
<div class="t" style="top:563.2px;font-size:17.5px;line-height:17.5px;font-style:italic;right:87.8px;transform:scaleX(1.120);transform-origin:100% 0;">(5%)</div>
<div class="a" style="left:70.2px;top:582.1px;width:1074.6px;height:26.7px;background:#4bb3e7;"></div>
<div class="a" style="left:1175.2px;top:582.1px;width:1644.3px;height:26.7px;background:#4bb3e7;"></div>
<div class="t" style="top:585.4px;font-size:20.8px;line-height:20.8px;color:#fff;font-weight:bold;left:85.0px;transform:scaleX(1.030);transform-origin:0 0;">Gross Margin</div>
<div class="t" style="top:587.6px;font-size:16.6px;line-height:16.6px;color:#fff;font-weight:bold;right:2249.9px;transform:scaleX(1.180);transform-origin:100% 0;">2,028</div>
<div class="t" style="top:587.6px;font-size:16.6px;line-height:16.6px;color:#fff;font-weight:bold;right:2129.6px;transform:scaleX(1.180);transform-origin:100% 0;">3,457</div>
<div class="t" style="top:587.6px;font-size:16.6px;line-height:16.6px;color:#fff;font-weight:bold;right:2009.5px;transform:scaleX(1.180);transform-origin:100% 0;">5,856</div>
<div class="t" style="top:587.6px;font-size:16.6px;line-height:16.6px;color:#fff;font-weight:bold;right:1889.5px;transform:scaleX(1.180);transform-origin:100% 0;">8,437</div>
<div class="t" style="top:587.6px;font-size:16.6px;line-height:16.6px;color:#fff;font-weight:bold;right:1769.5px;transform:scaleX(1.180);transform-origin:100% 0;">12,061</div>
<div class="t" style="top:587.6px;font-size:16.6px;line-height:16.6px;color:#fff;font-weight:bold;right:1601.8px;transform:scaleX(1.180);transform-origin:100% 0;">169</div>
<div class="t" style="top:587.6px;font-size:16.6px;line-height:16.6px;color:#fff;font-weight:bold;right:1464.8px;transform:scaleX(1.180);transform-origin:100% 0;">169</div>
<div class="t" style="top:587.6px;font-size:16.6px;line-height:16.6px;color:#fff;font-weight:bold;right:1327.8px;transform:scaleX(1.180);transform-origin:100% 0;">169</div>
<div class="t" style="top:587.6px;font-size:16.6px;line-height:16.6px;color:#fff;font-weight:bold;right:1190.8px;transform:scaleX(1.180);transform-origin:100% 0;">169</div>
<div class="t" style="top:587.6px;font-size:16.6px;line-height:16.6px;color:#fff;font-weight:bold;right:1053.8px;transform:scaleX(1.180);transform-origin:100% 0;">169</div>
<div class="t" style="top:587.6px;font-size:16.6px;line-height:16.6px;color:#fff;font-weight:bold;right:916.8px;transform:scaleX(1.180);transform-origin:100% 0;">169</div>
<div class="t" style="top:587.6px;font-size:16.6px;line-height:16.6px;color:#fff;font-weight:bold;right:779.8px;transform:scaleX(1.180);transform-origin:100% 0;">169</div>
<div class="t" style="top:587.6px;font-size:16.6px;line-height:16.6px;color:#fff;font-weight:bold;right:642.8px;transform:scaleX(1.180);transform-origin:100% 0;">169</div>
<div class="t" style="top:587.6px;font-size:16.6px;line-height:16.6px;color:#fff;font-weight:bold;right:505.8px;transform:scaleX(1.180);transform-origin:100% 0;">169</div>
<div class="t" style="top:587.6px;font-size:16.6px;line-height:16.6px;color:#fff;font-weight:bold;right:368.8px;transform:scaleX(1.180);transform-origin:100% 0;">169</div>
<div class="t" style="top:587.6px;font-size:16.6px;line-height:16.6px;color:#fff;font-weight:bold;right:231.8px;transform:scaleX(1.180);transform-origin:100% 0;">169</div>
<div class="t" style="top:587.6px;font-size:16.6px;line-height:16.6px;color:#fff;font-weight:bold;right:94.8px;transform:scaleX(1.180);transform-origin:100% 0;">169</div>
<div class="t" style="top:611.9px;font-size:17.5px;line-height:17.5px;font-style:italic;left:92.0px;transform:scaleX(1.010);transform-origin:0 0;">Gross Margin %</div>
<div class="t" style="top:611.9px;font-size:17.5px;line-height:17.5px;font-style:italic;right:2250.9px;transform:scaleX(1.120);transform-origin:100% 0;">95%</div>
<div class="t" style="top:611.9px;font-size:17.5px;line-height:17.5px;font-style:italic;right:2130.6px;transform:scaleX(1.120);transform-origin:100% 0;">95%</div>
<div class="t" style="top:611.9px;font-size:17.5px;line-height:17.5px;font-style:italic;right:2010.5px;transform:scaleX(1.120);transform-origin:100% 0;">96%</div>
<div class="t" style="top:611.9px;font-size:17.5px;line-height:17.5px;font-style:italic;right:1890.5px;transform:scaleX(1.120);transform-origin:100% 0;">96%</div>
<div class="t" style="top:611.9px;font-size:17.5px;line-height:17.5px;font-style:italic;right:1770.5px;transform:scaleX(1.120);transform-origin:100% 0;">97%</div>
<div class="t" style="top:611.9px;font-size:17.5px;line-height:17.5px;font-style:italic;right:1602.8px;transform:scaleX(1.120);transform-origin:100% 0;">95%</div>
<div class="t" style="top:611.9px;font-size:17.5px;line-height:17.5px;font-style:italic;right:1465.8px;transform:scaleX(1.120);transform-origin:100% 0;">95%</div>
<div class="t" style="top:611.9px;font-size:17.5px;line-height:17.5px;font-style:italic;right:1328.8px;transform:scaleX(1.120);transform-origin:100% 0;">95%</div>
<div class="t" style="top:611.9px;font-size:17.5px;line-height:17.5px;font-style:italic;right:1191.8px;transform:scaleX(1.120);transform-origin:100% 0;">95%</div>
<div class="t" style="top:611.9px;font-size:17.5px;line-height:17.5px;font-style:italic;right:1054.8px;transform:scaleX(1.120);transform-origin:100% 0;">95%</div>
<div class="t" style="top:611.9px;font-size:17.5px;line-height:17.5px;font-style:italic;right:917.8px;transform:scaleX(1.120);transform-origin:100% 0;">95%</div>
<div class="t" style="top:611.9px;font-size:17.5px;line-height:17.5px;font-style:italic;right:780.8px;transform:scaleX(1.120);transform-origin:100% 0;">95%</div>
<div class="t" style="top:611.9px;font-size:17.5px;line-height:17.5px;font-style:italic;right:643.8px;transform:scaleX(1.120);transform-origin:100% 0;">95%</div>
<div class="t" style="top:611.9px;font-size:17.5px;line-height:17.5px;font-style:italic;right:506.8px;transform:scaleX(1.120);transform-origin:100% 0;">95%</div>
<div class="t" style="top:611.9px;font-size:17.5px;line-height:17.5px;font-style:italic;right:369.8px;transform:scaleX(1.120);transform-origin:100% 0;">95%</div>
<div class="t" style="top:611.9px;font-size:17.5px;line-height:17.5px;font-style:italic;right:232.8px;transform:scaleX(1.120);transform-origin:100% 0;">95%</div>
<div class="t" style="top:611.9px;font-size:17.5px;line-height:17.5px;font-style:italic;right:95.8px;transform:scaleX(1.120);transform-origin:100% 0;">95%</div>
<div class="t" style="top:635.4px;font-size:17.5px;line-height:17.5px;left:74.0px;transform:scaleX(0.971);transform-origin:0 0;">Variable Expenses</div>
<div class="t" style="top:635.4px;font-size:17.5px;line-height:17.5px;right:2241.9px;transform:scaleX(1.060);transform-origin:100% 0;">(203)</div>
<div class="t" style="top:635.4px;font-size:17.5px;line-height:17.5px;right:2121.6px;transform:scaleX(1.060);transform-origin:100% 0;">(326)</div>
<div class="t" style="top:635.4px;font-size:17.5px;line-height:17.5px;right:2001.5px;transform:scaleX(1.060);transform-origin:100% 0;">(513)</div>
<div class="t" style="top:635.4px;font-size:17.5px;line-height:17.5px;right:1881.5px;transform:scaleX(1.060);transform-origin:100% 0;">(684)</div>
<div class="t" style="top:635.4px;font-size:17.5px;line-height:17.5px;right:1761.5px;transform:scaleX(1.060);transform-origin:100% 0;">(899)</div>
<div class="t" style="top:635.4px;font-size:17.5px;line-height:17.5px;right:1593.8px;transform:scaleX(1.060);transform-origin:100% 0;">(17)</div>
<div class="t" style="top:635.4px;font-size:17.5px;line-height:17.5px;right:1456.8px;transform:scaleX(1.060);transform-origin:100% 0;">(17)</div>
<div class="t" style="top:635.4px;font-size:17.5px;line-height:17.5px;right:1319.8px;transform:scaleX(1.060);transform-origin:100% 0;">(17)</div>
<div class="t" style="top:635.4px;font-size:17.5px;line-height:17.5px;right:1182.8px;transform:scaleX(1.060);transform-origin:100% 0;">(17)</div>
<div class="t" style="top:635.4px;font-size:17.5px;line-height:17.5px;right:1045.8px;transform:scaleX(1.060);transform-origin:100% 0;">(17)</div>
<div class="t" style="top:635.4px;font-size:17.5px;line-height:17.5px;right:908.8px;transform:scaleX(1.060);transform-origin:100% 0;">(17)</div>
<div class="t" style="top:635.4px;font-size:17.5px;line-height:17.5px;right:771.8px;transform:scaleX(1.060);transform-origin:100% 0;">(17)</div>
<div class="t" style="top:635.4px;font-size:17.5px;line-height:17.5px;right:634.8px;transform:scaleX(1.060);transform-origin:100% 0;">(17)</div>
<div class="t" style="top:635.4px;font-size:17.5px;line-height:17.5px;right:497.8px;transform:scaleX(1.060);transform-origin:100% 0;">(17)</div>
<div class="t" style="top:635.4px;font-size:17.5px;line-height:17.5px;right:360.8px;transform:scaleX(1.060);transform-origin:100% 0;">(17)</div>
<div class="t" style="top:635.4px;font-size:17.5px;line-height:17.5px;right:223.8px;transform:scaleX(1.060);transform-origin:100% 0;">(17)</div>
<div class="t" style="top:635.4px;font-size:17.5px;line-height:17.5px;right:86.8px;transform:scaleX(1.060);transform-origin:100% 0;">(17)</div>
<div class="t" style="top:658.2px;font-size:17.5px;line-height:17.5px;font-style:italic;left:92.0px;transform:scaleX(1.019);transform-origin:0 0;">% of Revenue</div>
<div class="t" style="top:658.2px;font-size:17.5px;line-height:17.5px;font-style:italic;right:2242.9px;transform:scaleX(1.120);transform-origin:100% 0;">(10%)</div>
<div class="t" style="top:658.2px;font-size:17.5px;line-height:17.5px;font-style:italic;right:2122.6px;transform:scaleX(1.120);transform-origin:100% 0;">(9%)</div>
<div class="t" style="top:658.2px;font-size:17.5px;line-height:17.5px;font-style:italic;right:2002.5px;transform:scaleX(1.120);transform-origin:100% 0;">(8%)</div>
<div class="t" style="top:658.2px;font-size:17.5px;line-height:17.5px;font-style:italic;right:1882.5px;transform:scaleX(1.120);transform-origin:100% 0;">(8%)</div>
<div class="t" style="top:658.2px;font-size:17.5px;line-height:17.5px;font-style:italic;right:1762.5px;transform:scaleX(1.120);transform-origin:100% 0;">(7%)</div>
<div class="t" style="top:658.2px;font-size:17.5px;line-height:17.5px;font-style:italic;right:1594.8px;transform:scaleX(1.120);transform-origin:100% 0;">(10%)</div>
<div class="t" style="top:658.2px;font-size:17.5px;line-height:17.5px;font-style:italic;right:1457.8px;transform:scaleX(1.120);transform-origin:100% 0;">(10%)</div>
<div class="t" style="top:658.2px;font-size:17.5px;line-height:17.5px;font-style:italic;right:1320.8px;transform:scaleX(1.120);transform-origin:100% 0;">(10%)</div>
<div class="t" style="top:658.2px;font-size:17.5px;line-height:17.5px;font-style:italic;right:1183.8px;transform:scaleX(1.120);transform-origin:100% 0;">(10%)</div>
<div class="t" style="top:658.2px;font-size:17.5px;line-height:17.5px;font-style:italic;right:1046.8px;transform:scaleX(1.120);transform-origin:100% 0;">(10%)</div>
<div class="t" style="top:658.2px;font-size:17.5px;line-height:17.5px;font-style:italic;right:909.8px;transform:scaleX(1.120);transform-origin:100% 0;">(10%)</div>
<div class="t" style="top:658.2px;font-size:17.5px;line-height:17.5px;font-style:italic;right:772.8px;transform:scaleX(1.120);transform-origin:100% 0;">(10%)</div>
<div class="t" style="top:658.2px;font-size:17.5px;line-height:17.5px;font-style:italic;right:635.8px;transform:scaleX(1.120);transform-origin:100% 0;">(10%)</div>
<div class="t" style="top:658.2px;font-size:17.5px;line-height:17.5px;font-style:italic;right:498.8px;transform:scaleX(1.120);transform-origin:100% 0;">(10%)</div>
<div class="t" style="top:658.2px;font-size:17.5px;line-height:17.5px;font-style:italic;right:361.8px;transform:scaleX(1.120);transform-origin:100% 0;">(10%)</div>
<div class="t" style="top:658.2px;font-size:17.5px;line-height:17.5px;font-style:italic;right:224.8px;transform:scaleX(1.120);transform-origin:100% 0;">(10%)</div>
<div class="t" style="top:658.2px;font-size:17.5px;line-height:17.5px;font-style:italic;right:87.8px;transform:scaleX(1.120);transform-origin:100% 0;">(10%)</div>
<div class="a" style="left:70.2px;top:677.1px;width:1074.6px;height:26.8px;background:#4bb3e7;"></div>
<div class="a" style="left:1175.2px;top:677.1px;width:1644.3px;height:26.8px;background:#4bb3e7;"></div>
<div class="t" style="top:680.5px;font-size:20.8px;line-height:20.8px;color:#fff;font-weight:bold;left:85.0px;transform:scaleX(1.054);transform-origin:0 0;">Contribution Margin</div>
<div class="t" style="top:682.7px;font-size:16.6px;line-height:16.6px;color:#fff;font-weight:bold;right:2249.9px;transform:scaleX(1.180);transform-origin:100% 0;">1,825</div>
<div class="t" style="top:682.7px;font-size:16.6px;line-height:16.6px;color:#fff;font-weight:bold;right:2129.6px;transform:scaleX(1.180);transform-origin:100% 0;">3,131</div>
<div class="t" style="top:682.7px;font-size:16.6px;line-height:16.6px;color:#fff;font-weight:bold;right:2009.5px;transform:scaleX(1.180);transform-origin:100% 0;">5,343</div>
<div class="t" style="top:682.7px;font-size:16.6px;line-height:16.6px;color:#fff;font-weight:bold;right:1889.5px;transform:scaleX(1.180);transform-origin:100% 0;">7,753</div>
<div class="t" style="top:682.7px;font-size:16.6px;line-height:16.6px;color:#fff;font-weight:bold;right:1769.5px;transform:scaleX(1.180);transform-origin:100% 0;">11,162</div>
<div class="t" style="top:682.7px;font-size:16.6px;line-height:16.6px;color:#fff;font-weight:bold;right:1601.8px;transform:scaleX(1.180);transform-origin:100% 0;">152</div>
<div class="t" style="top:682.7px;font-size:16.6px;line-height:16.6px;color:#fff;font-weight:bold;right:1464.8px;transform:scaleX(1.180);transform-origin:100% 0;">152</div>
<div class="t" style="top:682.7px;font-size:16.6px;line-height:16.6px;color:#fff;font-weight:bold;right:1327.8px;transform:scaleX(1.180);transform-origin:100% 0;">152</div>
<div class="t" style="top:682.7px;font-size:16.6px;line-height:16.6px;color:#fff;font-weight:bold;right:1190.8px;transform:scaleX(1.180);transform-origin:100% 0;">152</div>
<div class="t" style="top:682.7px;font-size:16.6px;line-height:16.6px;color:#fff;font-weight:bold;right:1053.8px;transform:scaleX(1.180);transform-origin:100% 0;">152</div>
<div class="t" style="top:682.7px;font-size:16.6px;line-height:16.6px;color:#fff;font-weight:bold;right:916.8px;transform:scaleX(1.180);transform-origin:100% 0;">152</div>
<div class="t" style="top:682.7px;font-size:16.6px;line-height:16.6px;color:#fff;font-weight:bold;right:779.8px;transform:scaleX(1.180);transform-origin:100% 0;">152</div>
<div class="t" style="top:682.7px;font-size:16.6px;line-height:16.6px;color:#fff;font-weight:bold;right:642.8px;transform:scaleX(1.180);transform-origin:100% 0;">152</div>
<div class="t" style="top:682.7px;font-size:16.6px;line-height:16.6px;color:#fff;font-weight:bold;right:505.8px;transform:scaleX(1.180);transform-origin:100% 0;">152</div>
<div class="t" style="top:682.7px;font-size:16.6px;line-height:16.6px;color:#fff;font-weight:bold;right:368.8px;transform:scaleX(1.180);transform-origin:100% 0;">152</div>
<div class="t" style="top:682.7px;font-size:16.6px;line-height:16.6px;color:#fff;font-weight:bold;right:231.8px;transform:scaleX(1.180);transform-origin:100% 0;">152</div>
<div class="t" style="top:682.7px;font-size:16.6px;line-height:16.6px;color:#fff;font-weight:bold;right:94.8px;transform:scaleX(1.180);transform-origin:100% 0;">152</div>
<div class="t" style="top:707.7px;font-size:17.5px;line-height:17.5px;font-style:italic;left:92.0px;transform:scaleX(1.042);transform-origin:0 0;">Contribution Margin %</div>
<div class="t" style="top:707.7px;font-size:17.5px;line-height:17.5px;font-style:italic;right:2250.9px;transform:scaleX(1.120);transform-origin:100% 0;">86%</div>
<div class="t" style="top:707.7px;font-size:17.5px;line-height:17.5px;font-style:italic;right:2130.6px;transform:scaleX(1.120);transform-origin:100% 0;">86%</div>
<div class="t" style="top:707.7px;font-size:17.5px;line-height:17.5px;font-style:italic;right:2010.5px;transform:scaleX(1.120);transform-origin:100% 0;">87%</div>
<div class="t" style="top:707.7px;font-size:17.5px;line-height:17.5px;font-style:italic;right:1890.5px;transform:scaleX(1.120);transform-origin:100% 0;">88%</div>
<div class="t" style="top:707.7px;font-size:17.5px;line-height:17.5px;font-style:italic;right:1770.5px;transform:scaleX(1.120);transform-origin:100% 0;">89%</div>
<div class="t" style="top:707.7px;font-size:17.5px;line-height:17.5px;font-style:italic;right:1602.8px;transform:scaleX(1.120);transform-origin:100% 0;">86%</div>
<div class="t" style="top:707.7px;font-size:17.5px;line-height:17.5px;font-style:italic;right:1465.8px;transform:scaleX(1.120);transform-origin:100% 0;">86%</div>
<div class="t" style="top:707.7px;font-size:17.5px;line-height:17.5px;font-style:italic;right:1328.8px;transform:scaleX(1.120);transform-origin:100% 0;">86%</div>
<div class="t" style="top:707.7px;font-size:17.5px;line-height:17.5px;font-style:italic;right:1191.8px;transform:scaleX(1.120);transform-origin:100% 0;">86%</div>
<div class="t" style="top:707.7px;font-size:17.5px;line-height:17.5px;font-style:italic;right:1054.8px;transform:scaleX(1.120);transform-origin:100% 0;">86%</div>
<div class="t" style="top:707.7px;font-size:17.5px;line-height:17.5px;font-style:italic;right:917.8px;transform:scaleX(1.120);transform-origin:100% 0;">86%</div>
<div class="t" style="top:707.7px;font-size:17.5px;line-height:17.5px;font-style:italic;right:780.8px;transform:scaleX(1.120);transform-origin:100% 0;">86%</div>
<div class="t" style="top:707.7px;font-size:17.5px;line-height:17.5px;font-style:italic;right:643.8px;transform:scaleX(1.120);transform-origin:100% 0;">86%</div>
<div class="t" style="top:707.7px;font-size:17.5px;line-height:17.5px;font-style:italic;right:506.8px;transform:scaleX(1.120);transform-origin:100% 0;">86%</div>
<div class="t" style="top:707.7px;font-size:17.5px;line-height:17.5px;font-style:italic;right:369.8px;transform:scaleX(1.120);transform-origin:100% 0;">86%</div>
<div class="t" style="top:707.7px;font-size:17.5px;line-height:17.5px;font-style:italic;right:232.8px;transform:scaleX(1.120);transform-origin:100% 0;">86%</div>
<div class="t" style="top:707.7px;font-size:17.5px;line-height:17.5px;font-style:italic;right:95.8px;transform:scaleX(1.120);transform-origin:100% 0;">86%</div>
<div class="t" style="top:730.4px;font-size:17.5px;line-height:17.5px;left:74.0px;transform:scaleX(0.964);transform-origin:0 0;">Payroll Expenses</div>
<div class="t" style="top:730.4px;font-size:17.5px;line-height:17.5px;right:2241.9px;transform:scaleX(1.060);transform-origin:100% 0;">(869)</div>
<div class="t" style="top:730.4px;font-size:17.5px;line-height:17.5px;right:2121.6px;transform:scaleX(1.060);transform-origin:100% 0;">(1,291)</div>
<div class="t" style="top:730.4px;font-size:17.5px;line-height:17.5px;right:2001.5px;transform:scaleX(1.060);transform-origin:100% 0;">(2,031)</div>
<div class="t" style="top:730.4px;font-size:17.5px;line-height:17.5px;right:1881.5px;transform:scaleX(1.060);transform-origin:100% 0;">(2,635)</div>
<div class="t" style="top:730.4px;font-size:17.5px;line-height:17.5px;right:1761.5px;transform:scaleX(1.060);transform-origin:100% 0;">(3,393)</div>
<div class="t" style="top:730.4px;font-size:17.5px;line-height:17.5px;right:1593.8px;transform:scaleX(1.060);transform-origin:100% 0;">(72)</div>
<div class="t" style="top:730.4px;font-size:17.5px;line-height:17.5px;right:1456.8px;transform:scaleX(1.060);transform-origin:100% 0;">(72)</div>
<div class="t" style="top:730.4px;font-size:17.5px;line-height:17.5px;right:1319.8px;transform:scaleX(1.060);transform-origin:100% 0;">(72)</div>
<div class="t" style="top:730.4px;font-size:17.5px;line-height:17.5px;right:1182.8px;transform:scaleX(1.060);transform-origin:100% 0;">(72)</div>
<div class="t" style="top:730.4px;font-size:17.5px;line-height:17.5px;right:1045.8px;transform:scaleX(1.060);transform-origin:100% 0;">(72)</div>
<div class="t" style="top:730.4px;font-size:17.5px;line-height:17.5px;right:908.8px;transform:scaleX(1.060);transform-origin:100% 0;">(72)</div>
<div class="t" style="top:730.4px;font-size:17.5px;line-height:17.5px;right:771.8px;transform:scaleX(1.060);transform-origin:100% 0;">(72)</div>
<div class="t" style="top:730.4px;font-size:17.5px;line-height:17.5px;right:634.8px;transform:scaleX(1.060);transform-origin:100% 0;">(72)</div>
<div class="t" style="top:730.4px;font-size:17.5px;line-height:17.5px;right:497.8px;transform:scaleX(1.060);transform-origin:100% 0;">(72)</div>
<div class="t" style="top:730.4px;font-size:17.5px;line-height:17.5px;right:360.8px;transform:scaleX(1.060);transform-origin:100% 0;">(72)</div>
<div class="t" style="top:730.4px;font-size:17.5px;line-height:17.5px;right:223.8px;transform:scaleX(1.060);transform-origin:100% 0;">(72)</div>
<div class="t" style="top:730.4px;font-size:17.5px;line-height:17.5px;right:86.8px;transform:scaleX(1.060);transform-origin:100% 0;">(72)</div>
<div class="t" style="top:753.4px;font-size:17.5px;line-height:17.5px;font-style:italic;left:92.0px;transform:scaleX(1.019);transform-origin:0 0;">% of Revenue</div>
<div class="t" style="top:753.4px;font-size:17.5px;line-height:17.5px;font-style:italic;right:2242.9px;transform:scaleX(1.120);transform-origin:100% 0;">(41%)</div>
<div class="t" style="top:753.4px;font-size:17.5px;line-height:17.5px;font-style:italic;right:2122.6px;transform:scaleX(1.120);transform-origin:100% 0;">(36%)</div>
<div class="t" style="top:753.4px;font-size:17.5px;line-height:17.5px;font-style:italic;right:2002.5px;transform:scaleX(1.120);transform-origin:100% 0;">(33%)</div>
<div class="t" style="top:753.4px;font-size:17.5px;line-height:17.5px;font-style:italic;right:1882.5px;transform:scaleX(1.120);transform-origin:100% 0;">(30%)</div>
<div class="t" style="top:753.4px;font-size:17.5px;line-height:17.5px;font-style:italic;right:1762.5px;transform:scaleX(1.120);transform-origin:100% 0;">(27%)</div>
<div class="t" style="top:753.4px;font-size:17.5px;line-height:17.5px;font-style:italic;right:1594.8px;transform:scaleX(1.120);transform-origin:100% 0;">(41%)</div>
<div class="t" style="top:753.4px;font-size:17.5px;line-height:17.5px;font-style:italic;right:1457.8px;transform:scaleX(1.120);transform-origin:100% 0;">(41%)</div>
<div class="t" style="top:753.4px;font-size:17.5px;line-height:17.5px;font-style:italic;right:1320.8px;transform:scaleX(1.120);transform-origin:100% 0;">(41%)</div>
<div class="t" style="top:753.4px;font-size:17.5px;line-height:17.5px;font-style:italic;right:1183.8px;transform:scaleX(1.120);transform-origin:100% 0;">(41%)</div>
<div class="t" style="top:753.4px;font-size:17.5px;line-height:17.5px;font-style:italic;right:1046.8px;transform:scaleX(1.120);transform-origin:100% 0;">(41%)</div>
<div class="t" style="top:753.4px;font-size:17.5px;line-height:17.5px;font-style:italic;right:909.8px;transform:scaleX(1.120);transform-origin:100% 0;">(41%)</div>
<div class="t" style="top:753.4px;font-size:17.5px;line-height:17.5px;font-style:italic;right:772.8px;transform:scaleX(1.120);transform-origin:100% 0;">(41%)</div>
<div class="t" style="top:753.4px;font-size:17.5px;line-height:17.5px;font-style:italic;right:635.8px;transform:scaleX(1.120);transform-origin:100% 0;">(41%)</div>
<div class="t" style="top:753.4px;font-size:17.5px;line-height:17.5px;font-style:italic;right:498.8px;transform:scaleX(1.120);transform-origin:100% 0;">(41%)</div>
<div class="t" style="top:753.4px;font-size:17.5px;line-height:17.5px;font-style:italic;right:361.8px;transform:scaleX(1.120);transform-origin:100% 0;">(41%)</div>
<div class="t" style="top:753.4px;font-size:17.5px;line-height:17.5px;font-style:italic;right:224.8px;transform:scaleX(1.120);transform-origin:100% 0;">(41%)</div>
<div class="t" style="top:753.4px;font-size:17.5px;line-height:17.5px;font-style:italic;right:87.8px;transform:scaleX(1.120);transform-origin:100% 0;">(41%)</div>
<div class="t" style="top:781.2px;font-size:17.5px;line-height:17.5px;left:74.0px;transform:scaleX(0.960);transform-origin:0 0;">Fixed Expenses</div>
<div class="t" style="top:781.2px;font-size:17.5px;line-height:17.5px;right:2241.9px;transform:scaleX(1.060);transform-origin:100% 0;">(58)</div>
<div class="t" style="top:781.2px;font-size:17.5px;line-height:17.5px;right:2121.6px;transform:scaleX(1.060);transform-origin:100% 0;">(58)</div>
<div class="t" style="top:781.2px;font-size:17.5px;line-height:17.5px;right:2001.5px;transform:scaleX(1.060);transform-origin:100% 0;">(58)</div>
<div class="t" style="top:781.2px;font-size:17.5px;line-height:17.5px;right:1881.5px;transform:scaleX(1.060);transform-origin:100% 0;">(58)</div>
<div class="t" style="top:781.2px;font-size:17.5px;line-height:17.5px;right:1761.5px;transform:scaleX(1.060);transform-origin:100% 0;">(58)</div>
<div class="t" style="top:781.2px;font-size:17.5px;line-height:17.5px;right:1593.8px;transform:scaleX(1.060);transform-origin:100% 0;">(5)</div>
<div class="t" style="top:781.2px;font-size:17.5px;line-height:17.5px;right:1456.8px;transform:scaleX(1.060);transform-origin:100% 0;">(5)</div>
<div class="t" style="top:781.2px;font-size:17.5px;line-height:17.5px;right:1319.8px;transform:scaleX(1.060);transform-origin:100% 0;">(5)</div>
<div class="t" style="top:781.2px;font-size:17.5px;line-height:17.5px;right:1182.8px;transform:scaleX(1.060);transform-origin:100% 0;">(5)</div>
<div class="t" style="top:781.2px;font-size:17.5px;line-height:17.5px;right:1045.8px;transform:scaleX(1.060);transform-origin:100% 0;">(5)</div>
<div class="t" style="top:781.2px;font-size:17.5px;line-height:17.5px;right:908.8px;transform:scaleX(1.060);transform-origin:100% 0;">(5)</div>
<div class="t" style="top:781.2px;font-size:17.5px;line-height:17.5px;right:771.8px;transform:scaleX(1.060);transform-origin:100% 0;">(5)</div>
<div class="t" style="top:781.2px;font-size:17.5px;line-height:17.5px;right:634.8px;transform:scaleX(1.060);transform-origin:100% 0;">(5)</div>
<div class="t" style="top:781.2px;font-size:17.5px;line-height:17.5px;right:497.8px;transform:scaleX(1.060);transform-origin:100% 0;">(5)</div>
<div class="t" style="top:781.2px;font-size:17.5px;line-height:17.5px;right:360.8px;transform:scaleX(1.060);transform-origin:100% 0;">(5)</div>
<div class="t" style="top:781.2px;font-size:17.5px;line-height:17.5px;right:223.8px;transform:scaleX(1.060);transform-origin:100% 0;">(5)</div>
<div class="t" style="top:781.2px;font-size:17.5px;line-height:17.5px;right:86.8px;transform:scaleX(1.060);transform-origin:100% 0;">(5)</div>
<div class="t" style="top:804.6px;font-size:17.5px;line-height:17.5px;font-style:italic;left:92.0px;transform:scaleX(1.019);transform-origin:0 0;">% of Revenue</div>
<div class="t" style="top:804.6px;font-size:17.5px;line-height:17.5px;font-style:italic;right:2242.9px;transform:scaleX(1.120);transform-origin:100% 0;">(3%)</div>
<div class="t" style="top:804.6px;font-size:17.5px;line-height:17.5px;font-style:italic;right:2122.6px;transform:scaleX(1.120);transform-origin:100% 0;">(2%)</div>
<div class="t" style="top:804.6px;font-size:17.5px;line-height:17.5px;font-style:italic;right:2002.5px;transform:scaleX(1.120);transform-origin:100% 0;">(1%)</div>
<div class="t" style="top:804.6px;font-size:17.5px;line-height:17.5px;font-style:italic;right:1882.5px;transform:scaleX(1.120);transform-origin:100% 0;">(1%)</div>
<div class="t" style="top:804.6px;font-size:17.5px;line-height:17.5px;font-style:italic;right:1762.5px;transform:scaleX(1.120);transform-origin:100% 0;">(0%)</div>
<div class="t" style="top:804.6px;font-size:17.5px;line-height:17.5px;font-style:italic;right:1594.8px;transform:scaleX(1.120);transform-origin:100% 0;">(3%)</div>
<div class="t" style="top:804.6px;font-size:17.5px;line-height:17.5px;font-style:italic;right:1457.8px;transform:scaleX(1.120);transform-origin:100% 0;">(3%)</div>
<div class="t" style="top:804.6px;font-size:17.5px;line-height:17.5px;font-style:italic;right:1320.8px;transform:scaleX(1.120);transform-origin:100% 0;">(3%)</div>
<div class="t" style="top:804.6px;font-size:17.5px;line-height:17.5px;font-style:italic;right:1183.8px;transform:scaleX(1.120);transform-origin:100% 0;">(3%)</div>
<div class="t" style="top:804.6px;font-size:17.5px;line-height:17.5px;font-style:italic;right:1046.8px;transform:scaleX(1.120);transform-origin:100% 0;">(3%)</div>
<div class="t" style="top:804.6px;font-size:17.5px;line-height:17.5px;font-style:italic;right:909.8px;transform:scaleX(1.120);transform-origin:100% 0;">(3%)</div>
<div class="t" style="top:804.6px;font-size:17.5px;line-height:17.5px;font-style:italic;right:772.8px;transform:scaleX(1.120);transform-origin:100% 0;">(3%)</div>
<div class="t" style="top:804.6px;font-size:17.5px;line-height:17.5px;font-style:italic;right:635.8px;transform:scaleX(1.120);transform-origin:100% 0;">(3%)</div>
<div class="t" style="top:804.6px;font-size:17.5px;line-height:17.5px;font-style:italic;right:498.8px;transform:scaleX(1.120);transform-origin:100% 0;">(3%)</div>
<div class="t" style="top:804.6px;font-size:17.5px;line-height:17.5px;font-style:italic;right:361.8px;transform:scaleX(1.120);transform-origin:100% 0;">(3%)</div>
<div class="t" style="top:804.6px;font-size:17.5px;line-height:17.5px;font-style:italic;right:224.8px;transform:scaleX(1.120);transform-origin:100% 0;">(3%)</div>
<div class="t" style="top:804.6px;font-size:17.5px;line-height:17.5px;font-style:italic;right:87.8px;transform:scaleX(1.120);transform-origin:100% 0;">(3%)</div>
<div class="a" style="left:70.2px;top:828.2px;width:1074.6px;height:26.8px;background:#4bb3e7;"></div>
<div class="a" style="left:1175.2px;top:828.2px;width:1644.3px;height:26.8px;background:#4bb3e7;"></div>
<div class="t" style="top:831.6px;font-size:20.8px;line-height:20.8px;color:#fff;font-weight:bold;left:85.0px;transform:scaleX(1.027);transform-origin:0 0;">EBITDA</div>
<div class="t" style="top:833.8px;font-size:16.6px;line-height:16.6px;color:#fff;font-weight:bold;right:2249.9px;transform:scaleX(1.180);transform-origin:100% 0;">898</div>
<div class="t" style="top:833.8px;font-size:16.6px;line-height:16.6px;color:#fff;font-weight:bold;right:2129.6px;transform:scaleX(1.180);transform-origin:100% 0;">1,783</div>
<div class="t" style="top:833.8px;font-size:16.6px;line-height:16.6px;color:#fff;font-weight:bold;right:2009.5px;transform:scaleX(1.180);transform-origin:100% 0;">3,254</div>
<div class="t" style="top:833.8px;font-size:16.6px;line-height:16.6px;color:#fff;font-weight:bold;right:1889.5px;transform:scaleX(1.180);transform-origin:100% 0;">5,061</div>
<div class="t" style="top:833.8px;font-size:16.6px;line-height:16.6px;color:#fff;font-weight:bold;right:1769.5px;transform:scaleX(1.180);transform-origin:100% 0;">7,712</div>
<div class="t" style="top:833.8px;font-size:16.6px;line-height:16.6px;color:#fff;font-weight:bold;right:1601.8px;transform:scaleX(1.180);transform-origin:100% 0;">75</div>
<div class="t" style="top:833.8px;font-size:16.6px;line-height:16.6px;color:#fff;font-weight:bold;right:1464.8px;transform:scaleX(1.180);transform-origin:100% 0;">75</div>
<div class="t" style="top:833.8px;font-size:16.6px;line-height:16.6px;color:#fff;font-weight:bold;right:1327.8px;transform:scaleX(1.180);transform-origin:100% 0;">75</div>
<div class="t" style="top:833.8px;font-size:16.6px;line-height:16.6px;color:#fff;font-weight:bold;right:1190.8px;transform:scaleX(1.180);transform-origin:100% 0;">75</div>
<div class="t" style="top:833.8px;font-size:16.6px;line-height:16.6px;color:#fff;font-weight:bold;right:1053.8px;transform:scaleX(1.180);transform-origin:100% 0;">75</div>
<div class="t" style="top:833.8px;font-size:16.6px;line-height:16.6px;color:#fff;font-weight:bold;right:916.8px;transform:scaleX(1.180);transform-origin:100% 0;">75</div>
<div class="t" style="top:833.8px;font-size:16.6px;line-height:16.6px;color:#fff;font-weight:bold;right:779.8px;transform:scaleX(1.180);transform-origin:100% 0;">75</div>
<div class="t" style="top:833.8px;font-size:16.6px;line-height:16.6px;color:#fff;font-weight:bold;right:642.8px;transform:scaleX(1.180);transform-origin:100% 0;">75</div>
<div class="t" style="top:833.8px;font-size:16.6px;line-height:16.6px;color:#fff;font-weight:bold;right:505.8px;transform:scaleX(1.180);transform-origin:100% 0;">75</div>
<div class="t" style="top:833.8px;font-size:16.6px;line-height:16.6px;color:#fff;font-weight:bold;right:368.8px;transform:scaleX(1.180);transform-origin:100% 0;">75</div>
<div class="t" style="top:833.8px;font-size:16.6px;line-height:16.6px;color:#fff;font-weight:bold;right:231.8px;transform:scaleX(1.180);transform-origin:100% 0;">75</div>
<div class="t" style="top:833.8px;font-size:16.6px;line-height:16.6px;color:#fff;font-weight:bold;right:94.8px;transform:scaleX(1.180);transform-origin:100% 0;">75</div>
<div class="t" style="top:858.3px;font-size:17.5px;line-height:17.5px;font-style:italic;left:74.0px;transform:scaleX(1.050);transform-origin:0 0;">EBITDA %</div>
<div class="t" style="top:858.3px;font-size:17.5px;line-height:17.5px;font-style:italic;right:2250.9px;transform:scaleX(1.120);transform-origin:100% 0;">42%</div>
<div class="t" style="top:858.3px;font-size:17.5px;line-height:17.5px;font-style:italic;right:2130.6px;transform:scaleX(1.120);transform-origin:100% 0;">49%</div>
<div class="t" style="top:858.3px;font-size:17.5px;line-height:17.5px;font-style:italic;right:2010.5px;transform:scaleX(1.120);transform-origin:100% 0;">53%</div>
<div class="t" style="top:858.3px;font-size:17.5px;line-height:17.5px;font-style:italic;right:1890.5px;transform:scaleX(1.120);transform-origin:100% 0;">58%</div>
<div class="t" style="top:858.3px;font-size:17.5px;line-height:17.5px;font-style:italic;right:1770.5px;transform:scaleX(1.120);transform-origin:100% 0;">62%</div>
<div class="t" style="top:858.3px;font-size:17.5px;line-height:17.5px;font-style:italic;right:1602.8px;transform:scaleX(1.120);transform-origin:100% 0;">42%</div>
<div class="t" style="top:858.3px;font-size:17.5px;line-height:17.5px;font-style:italic;right:1465.8px;transform:scaleX(1.120);transform-origin:100% 0;">42%</div>
<div class="t" style="top:858.3px;font-size:17.5px;line-height:17.5px;font-style:italic;right:1328.8px;transform:scaleX(1.120);transform-origin:100% 0;">42%</div>
<div class="t" style="top:858.3px;font-size:17.5px;line-height:17.5px;font-style:italic;right:1191.8px;transform:scaleX(1.120);transform-origin:100% 0;">42%</div>
<div class="t" style="top:858.3px;font-size:17.5px;line-height:17.5px;font-style:italic;right:1054.8px;transform:scaleX(1.120);transform-origin:100% 0;">42%</div>
<div class="t" style="top:858.3px;font-size:17.5px;line-height:17.5px;font-style:italic;right:917.8px;transform:scaleX(1.120);transform-origin:100% 0;">42%</div>
<div class="t" style="top:858.3px;font-size:17.5px;line-height:17.5px;font-style:italic;right:780.8px;transform:scaleX(1.120);transform-origin:100% 0;">42%</div>
<div class="t" style="top:858.3px;font-size:17.5px;line-height:17.5px;font-style:italic;right:643.8px;transform:scaleX(1.120);transform-origin:100% 0;">42%</div>
<div class="t" style="top:858.3px;font-size:17.5px;line-height:17.5px;font-style:italic;right:506.8px;transform:scaleX(1.120);transform-origin:100% 0;">42%</div>
<div class="t" style="top:858.3px;font-size:17.5px;line-height:17.5px;font-style:italic;right:369.8px;transform:scaleX(1.120);transform-origin:100% 0;">42%</div>
<div class="t" style="top:858.3px;font-size:17.5px;line-height:17.5px;font-style:italic;right:232.8px;transform:scaleX(1.120);transform-origin:100% 0;">42%</div>
<div class="t" style="top:858.3px;font-size:17.5px;line-height:17.5px;font-style:italic;right:95.8px;transform:scaleX(1.120);transform-origin:100% 0;">42%</div>
<div class="t" style="top:881.0px;font-size:17.5px;line-height:17.5px;left:74.0px;transform:scaleX(1.016);transform-origin:0 0;">Depreciation &amp; Amortization</div>
<div class="t" style="top:881.0px;font-size:17.5px;line-height:17.5px;right:2241.9px;transform:scaleX(1.060);transform-origin:100% 0;">(5)</div>
<div class="t" style="top:881.0px;font-size:17.5px;line-height:17.5px;right:2121.6px;transform:scaleX(1.060);transform-origin:100% 0;">(5)</div>
<div class="t" style="top:881.0px;font-size:17.5px;line-height:17.5px;right:2001.5px;transform:scaleX(1.060);transform-origin:100% 0;">(5)</div>
<div class="t" style="top:881.0px;font-size:17.5px;line-height:17.5px;right:1881.5px;transform:scaleX(1.060);transform-origin:100% 0;">(5)</div>
<div class="t" style="top:881.0px;font-size:17.5px;line-height:17.5px;right:1761.5px;transform:scaleX(1.060);transform-origin:100% 0;">(5)</div>
<div class="t" style="top:881.0px;font-size:17.5px;line-height:17.5px;right:1593.8px;transform:scaleX(1.060);transform-origin:100% 0;">(0)</div>
<div class="t" style="top:881.0px;font-size:17.5px;line-height:17.5px;right:1456.8px;transform:scaleX(1.060);transform-origin:100% 0;">(0)</div>
<div class="t" style="top:881.0px;font-size:17.5px;line-height:17.5px;right:1319.8px;transform:scaleX(1.060);transform-origin:100% 0;">(0)</div>
<div class="t" style="top:881.0px;font-size:17.5px;line-height:17.5px;right:1182.8px;transform:scaleX(1.060);transform-origin:100% 0;">(0)</div>
<div class="t" style="top:881.0px;font-size:17.5px;line-height:17.5px;right:1045.8px;transform:scaleX(1.060);transform-origin:100% 0;">(0)</div>
<div class="t" style="top:881.0px;font-size:17.5px;line-height:17.5px;right:908.8px;transform:scaleX(1.060);transform-origin:100% 0;">(0)</div>
<div class="t" style="top:881.0px;font-size:17.5px;line-height:17.5px;right:771.8px;transform:scaleX(1.060);transform-origin:100% 0;">(0)</div>
<div class="t" style="top:881.0px;font-size:17.5px;line-height:17.5px;right:634.8px;transform:scaleX(1.060);transform-origin:100% 0;">(0)</div>
<div class="t" style="top:881.0px;font-size:17.5px;line-height:17.5px;right:497.8px;transform:scaleX(1.060);transform-origin:100% 0;">(0)</div>
<div class="t" style="top:881.0px;font-size:17.5px;line-height:17.5px;right:360.8px;transform:scaleX(1.060);transform-origin:100% 0;">(0)</div>
<div class="t" style="top:881.0px;font-size:17.5px;line-height:17.5px;right:223.8px;transform:scaleX(1.060);transform-origin:100% 0;">(0)</div>
<div class="t" style="top:881.0px;font-size:17.5px;line-height:17.5px;right:86.8px;transform:scaleX(1.060);transform-origin:100% 0;">(0)</div>
<div class="t" style="top:904.4px;font-size:17.5px;line-height:17.5px;left:74.0px;transform:scaleX(0.984);transform-origin:0 0;">EBIT</div>
<div class="t" style="top:904.4px;font-size:17.5px;line-height:17.5px;right:2249.5px;transform:scaleX(1.060);transform-origin:100% 0;">893</div>
<div class="t" style="top:904.4px;font-size:17.5px;line-height:17.5px;right:2129.2px;transform:scaleX(1.060);transform-origin:100% 0;">1,777</div>
<div class="t" style="top:904.4px;font-size:17.5px;line-height:17.5px;right:2009.1px;transform:scaleX(1.060);transform-origin:100% 0;">3,249</div>
<div class="t" style="top:904.4px;font-size:17.5px;line-height:17.5px;right:1889.1px;transform:scaleX(1.060);transform-origin:100% 0;">5,055</div>
<div class="t" style="top:904.4px;font-size:17.5px;line-height:17.5px;right:1769.1px;transform:scaleX(1.060);transform-origin:100% 0;">7,706</div>
<div class="t" style="top:904.4px;font-size:17.5px;line-height:17.5px;right:1601.4px;transform:scaleX(1.060);transform-origin:100% 0;">75</div>
<div class="t" style="top:904.4px;font-size:17.5px;line-height:17.5px;right:1464.4px;transform:scaleX(1.060);transform-origin:100% 0;">75</div>
<div class="t" style="top:904.4px;font-size:17.5px;line-height:17.5px;right:1327.4px;transform:scaleX(1.060);transform-origin:100% 0;">74</div>
<div class="t" style="top:904.4px;font-size:17.5px;line-height:17.5px;right:1190.4px;transform:scaleX(1.060);transform-origin:100% 0;">74</div>
<div class="t" style="top:904.4px;font-size:17.5px;line-height:17.5px;right:1053.4px;transform:scaleX(1.060);transform-origin:100% 0;">74</div>
<div class="t" style="top:904.4px;font-size:17.5px;line-height:17.5px;right:916.4px;transform:scaleX(1.060);transform-origin:100% 0;">74</div>
<div class="t" style="top:904.4px;font-size:17.5px;line-height:17.5px;right:779.4px;transform:scaleX(1.060);transform-origin:100% 0;">74</div>
<div class="t" style="top:904.4px;font-size:17.5px;line-height:17.5px;right:642.4px;transform:scaleX(1.060);transform-origin:100% 0;">74</div>
<div class="t" style="top:904.4px;font-size:17.5px;line-height:17.5px;right:505.4px;transform:scaleX(1.060);transform-origin:100% 0;">74</div>
<div class="t" style="top:904.4px;font-size:17.5px;line-height:17.5px;right:368.4px;transform:scaleX(1.060);transform-origin:100% 0;">74</div>
<div class="t" style="top:904.4px;font-size:17.5px;line-height:17.5px;right:231.4px;transform:scaleX(1.060);transform-origin:100% 0;">74</div>
<div class="t" style="top:904.4px;font-size:17.5px;line-height:17.5px;right:94.4px;transform:scaleX(1.060);transform-origin:100% 0;">74</div>
<div class="t" style="top:927.4px;font-size:17.5px;line-height:17.5px;left:74.0px;transform:scaleX(1.008);transform-origin:0 0;">Net Interest Expense</div>
<div class="t" style="top:927.4px;font-size:17.5px;line-height:17.5px;right:2241.9px;transform:scaleX(1.060);transform-origin:100% 0;">(18)</div>
<div class="t" style="top:927.4px;font-size:17.5px;line-height:17.5px;right:2121.6px;transform:scaleX(1.060);transform-origin:100% 0;">(17)</div>
<div class="t" style="top:927.4px;font-size:17.5px;line-height:17.5px;right:2001.5px;transform:scaleX(1.060);transform-origin:100% 0;">(14)</div>
<div class="t" style="top:927.4px;font-size:17.5px;line-height:17.5px;right:1881.5px;transform:scaleX(1.060);transform-origin:100% 0;">(11)</div>
<div class="t" style="top:927.4px;font-size:17.5px;line-height:17.5px;right:1761.5px;transform:scaleX(1.060);transform-origin:100% 0;">(7)</div>
<div class="t" style="top:927.4px;font-size:17.5px;line-height:17.5px;right:1593.8px;transform:scaleX(1.060);transform-origin:100% 0;">(1)</div>
<div class="t" style="top:927.4px;font-size:17.5px;line-height:17.5px;right:1456.8px;transform:scaleX(1.060);transform-origin:100% 0;">(1)</div>
<div class="t" style="top:927.4px;font-size:17.5px;line-height:17.5px;right:1319.8px;transform:scaleX(1.060);transform-origin:100% 0;">(2)</div>
<div class="t" style="top:927.4px;font-size:17.5px;line-height:17.5px;right:1182.8px;transform:scaleX(1.060);transform-origin:100% 0;">(2)</div>
<div class="t" style="top:927.4px;font-size:17.5px;line-height:17.5px;right:1045.8px;transform:scaleX(1.060);transform-origin:100% 0;">(2)</div>
<div class="t" style="top:927.4px;font-size:17.5px;line-height:17.5px;right:908.8px;transform:scaleX(1.060);transform-origin:100% 0;">(2)</div>
<div class="t" style="top:927.4px;font-size:17.5px;line-height:17.5px;right:771.8px;transform:scaleX(1.060);transform-origin:100% 0;">(2)</div>
<div class="t" style="top:927.4px;font-size:17.5px;line-height:17.5px;right:634.8px;transform:scaleX(1.060);transform-origin:100% 0;">(2)</div>
<div class="t" style="top:927.4px;font-size:17.5px;line-height:17.5px;right:497.8px;transform:scaleX(1.060);transform-origin:100% 0;">(2)</div>
<div class="t" style="top:927.4px;font-size:17.5px;line-height:17.5px;right:360.8px;transform:scaleX(1.060);transform-origin:100% 0;">(2)</div>
<div class="t" style="top:927.4px;font-size:17.5px;line-height:17.5px;right:223.8px;transform:scaleX(1.060);transform-origin:100% 0;">(2)</div>
<div class="t" style="top:927.4px;font-size:17.5px;line-height:17.5px;right:86.8px;transform:scaleX(1.060);transform-origin:100% 0;">(2)</div>
<div class="t" style="top:950.5px;font-size:17.5px;line-height:17.5px;left:74.0px;transform:scaleX(1.034);transform-origin:0 0;">Net Profit Before Tax</div>
<div class="t" style="top:950.5px;font-size:17.5px;line-height:17.5px;right:2249.5px;transform:scaleX(1.060);transform-origin:100% 0;">875</div>
<div class="t" style="top:950.5px;font-size:17.5px;line-height:17.5px;right:2129.2px;transform:scaleX(1.060);transform-origin:100% 0;">1,760</div>
<div class="t" style="top:950.5px;font-size:17.5px;line-height:17.5px;right:2009.1px;transform:scaleX(1.060);transform-origin:100% 0;">3,235</div>
<div class="t" style="top:950.5px;font-size:17.5px;line-height:17.5px;right:1889.1px;transform:scaleX(1.060);transform-origin:100% 0;">5,045</div>
<div class="t" style="top:950.5px;font-size:17.5px;line-height:17.5px;right:1769.1px;transform:scaleX(1.060);transform-origin:100% 0;">7,699</div>
<div class="t" style="top:950.5px;font-size:17.5px;line-height:17.5px;right:1601.4px;transform:scaleX(1.060);transform-origin:100% 0;">74</div>
<div class="t" style="top:950.5px;font-size:17.5px;line-height:17.5px;right:1464.4px;transform:scaleX(1.060);transform-origin:100% 0;">74</div>
<div class="t" style="top:950.5px;font-size:17.5px;line-height:17.5px;right:1327.4px;transform:scaleX(1.060);transform-origin:100% 0;">73</div>
<div class="t" style="top:950.5px;font-size:17.5px;line-height:17.5px;right:1190.4px;transform:scaleX(1.060);transform-origin:100% 0;">73</div>
<div class="t" style="top:950.5px;font-size:17.5px;line-height:17.5px;right:1053.4px;transform:scaleX(1.060);transform-origin:100% 0;">73</div>
<div class="t" style="top:950.5px;font-size:17.5px;line-height:17.5px;right:916.4px;transform:scaleX(1.060);transform-origin:100% 0;">73</div>
<div class="t" style="top:950.5px;font-size:17.5px;line-height:17.5px;right:779.4px;transform:scaleX(1.060);transform-origin:100% 0;">73</div>
<div class="t" style="top:950.5px;font-size:17.5px;line-height:17.5px;right:642.4px;transform:scaleX(1.060);transform-origin:100% 0;">73</div>
<div class="t" style="top:950.5px;font-size:17.5px;line-height:17.5px;right:505.4px;transform:scaleX(1.060);transform-origin:100% 0;">73</div>
<div class="t" style="top:950.5px;font-size:17.5px;line-height:17.5px;right:368.4px;transform:scaleX(1.060);transform-origin:100% 0;">73</div>
<div class="t" style="top:950.5px;font-size:17.5px;line-height:17.5px;right:231.4px;transform:scaleX(1.060);transform-origin:100% 0;">73</div>
<div class="t" style="top:950.5px;font-size:17.5px;line-height:17.5px;right:94.4px;transform:scaleX(1.060);transform-origin:100% 0;">73</div>
<div class="t" style="top:973.3px;font-size:17.5px;line-height:17.5px;left:74.0px;transform:scaleX(0.993);transform-origin:0 0;">Tax Expense</div>
<div class="t" style="top:973.3px;font-size:17.5px;line-height:17.5px;right:2241.9px;transform:scaleX(1.060);transform-origin:100% 0;">(219)</div>
<div class="t" style="top:973.3px;font-size:17.5px;line-height:17.5px;right:2121.6px;transform:scaleX(1.060);transform-origin:100% 0;">(440)</div>
<div class="t" style="top:973.3px;font-size:17.5px;line-height:17.5px;right:2001.5px;transform:scaleX(1.060);transform-origin:100% 0;">(809)</div>
<div class="t" style="top:973.3px;font-size:17.5px;line-height:17.5px;right:1881.5px;transform:scaleX(1.060);transform-origin:100% 0;">(1,261)</div>
<div class="t" style="top:973.3px;font-size:17.5px;line-height:17.5px;right:1761.5px;transform:scaleX(1.060);transform-origin:100% 0;">(1,925)</div>
<div class="t" style="top:973.3px;font-size:17.5px;line-height:17.5px;right:1593.8px;transform:scaleX(1.060);transform-origin:100% 0;">(18)</div>
<div class="t" style="top:973.3px;font-size:17.5px;line-height:17.5px;right:1456.8px;transform:scaleX(1.060);transform-origin:100% 0;">(18)</div>
<div class="t" style="top:973.3px;font-size:17.5px;line-height:17.5px;right:1319.8px;transform:scaleX(1.060);transform-origin:100% 0;">(18)</div>
<div class="t" style="top:973.3px;font-size:17.5px;line-height:17.5px;right:1182.8px;transform:scaleX(1.060);transform-origin:100% 0;">(18)</div>
<div class="t" style="top:973.3px;font-size:17.5px;line-height:17.5px;right:1045.8px;transform:scaleX(1.060);transform-origin:100% 0;">(18)</div>
<div class="t" style="top:973.3px;font-size:17.5px;line-height:17.5px;right:908.8px;transform:scaleX(1.060);transform-origin:100% 0;">(18)</div>
<div class="t" style="top:973.3px;font-size:17.5px;line-height:17.5px;right:771.8px;transform:scaleX(1.060);transform-origin:100% 0;">(18)</div>
<div class="t" style="top:973.3px;font-size:17.5px;line-height:17.5px;right:634.8px;transform:scaleX(1.060);transform-origin:100% 0;">(18)</div>
<div class="t" style="top:973.3px;font-size:17.5px;line-height:17.5px;right:497.8px;transform:scaleX(1.060);transform-origin:100% 0;">(18)</div>
<div class="t" style="top:973.3px;font-size:17.5px;line-height:17.5px;right:360.8px;transform:scaleX(1.060);transform-origin:100% 0;">(18)</div>
<div class="t" style="top:973.3px;font-size:17.5px;line-height:17.5px;right:223.8px;transform:scaleX(1.060);transform-origin:100% 0;">(18)</div>
<div class="t" style="top:973.3px;font-size:17.5px;line-height:17.5px;right:86.8px;transform:scaleX(1.060);transform-origin:100% 0;">(18)</div>
<div class="a" style="left:70.2px;top:992.2px;width:1074.6px;height:26.7px;background:#4bb3e7;"></div>
<div class="a" style="left:1175.2px;top:992.2px;width:1644.3px;height:26.7px;background:#4bb3e7;"></div>
<div class="t" style="top:995.5px;font-size:20.8px;line-height:20.8px;color:#fff;font-weight:bold;left:85.0px;transform:scaleX(1.092);transform-origin:0 0;">Net Profit After Tax</div>
<div class="t" style="top:997.7px;font-size:16.6px;line-height:16.6px;color:#fff;font-weight:bold;right:2249.9px;transform:scaleX(1.180);transform-origin:100% 0;">656</div>
<div class="t" style="top:997.7px;font-size:16.6px;line-height:16.6px;color:#fff;font-weight:bold;right:2129.6px;transform:scaleX(1.180);transform-origin:100% 0;">1,320</div>
<div class="t" style="top:997.7px;font-size:16.6px;line-height:16.6px;color:#fff;font-weight:bold;right:2009.5px;transform:scaleX(1.180);transform-origin:100% 0;">2,426</div>
<div class="t" style="top:997.7px;font-size:16.6px;line-height:16.6px;color:#fff;font-weight:bold;right:1889.5px;transform:scaleX(1.180);transform-origin:100% 0;">3,783</div>
<div class="t" style="top:997.7px;font-size:16.6px;line-height:16.6px;color:#fff;font-weight:bold;right:1769.5px;transform:scaleX(1.180);transform-origin:100% 0;">5,774</div>
<div class="t" style="top:997.7px;font-size:16.6px;line-height:16.6px;color:#fff;font-weight:bold;right:1601.8px;transform:scaleX(1.180);transform-origin:100% 0;">55</div>
<div class="t" style="top:997.7px;font-size:16.6px;line-height:16.6px;color:#fff;font-weight:bold;right:1464.8px;transform:scaleX(1.180);transform-origin:100% 0;">55</div>
<div class="t" style="top:997.7px;font-size:16.6px;line-height:16.6px;color:#fff;font-weight:bold;right:1327.8px;transform:scaleX(1.180);transform-origin:100% 0;">55</div>
<div class="t" style="top:997.7px;font-size:16.6px;line-height:16.6px;color:#fff;font-weight:bold;right:1190.8px;transform:scaleX(1.180);transform-origin:100% 0;">55</div>
<div class="t" style="top:997.7px;font-size:16.6px;line-height:16.6px;color:#fff;font-weight:bold;right:1053.8px;transform:scaleX(1.180);transform-origin:100% 0;">55</div>
<div class="t" style="top:997.7px;font-size:16.6px;line-height:16.6px;color:#fff;font-weight:bold;right:916.8px;transform:scaleX(1.180);transform-origin:100% 0;">55</div>
<div class="t" style="top:997.7px;font-size:16.6px;line-height:16.6px;color:#fff;font-weight:bold;right:779.8px;transform:scaleX(1.180);transform-origin:100% 0;">55</div>
<div class="t" style="top:997.7px;font-size:16.6px;line-height:16.6px;color:#fff;font-weight:bold;right:642.8px;transform:scaleX(1.180);transform-origin:100% 0;">55</div>
<div class="t" style="top:997.7px;font-size:16.6px;line-height:16.6px;color:#fff;font-weight:bold;right:505.8px;transform:scaleX(1.180);transform-origin:100% 0;">55</div>
<div class="t" style="top:997.7px;font-size:16.6px;line-height:16.6px;color:#fff;font-weight:bold;right:368.8px;transform:scaleX(1.180);transform-origin:100% 0;">55</div>
<div class="t" style="top:997.7px;font-size:16.6px;line-height:16.6px;color:#fff;font-weight:bold;right:231.8px;transform:scaleX(1.180);transform-origin:100% 0;">55</div>
<div class="t" style="top:997.7px;font-size:16.6px;line-height:16.6px;color:#fff;font-weight:bold;right:94.8px;transform:scaleX(1.180);transform-origin:100% 0;">55</div>
<div class="t" style="top:1022.4px;font-size:17.5px;line-height:17.5px;font-style:italic;left:92.0px;transform:scaleX(1.068);transform-origin:0 0;">Net Profit After Tax %</div>
<div class="t" style="top:1022.4px;font-size:17.5px;line-height:17.5px;font-style:italic;right:2250.9px;transform:scaleX(1.120);transform-origin:100% 0;">31%</div>
<div class="t" style="top:1022.4px;font-size:17.5px;line-height:17.5px;font-style:italic;right:2130.6px;transform:scaleX(1.120);transform-origin:100% 0;">36%</div>
<div class="t" style="top:1022.4px;font-size:17.5px;line-height:17.5px;font-style:italic;right:2010.5px;transform:scaleX(1.120);transform-origin:100% 0;">40%</div>
<div class="t" style="top:1022.4px;font-size:17.5px;line-height:17.5px;font-style:italic;right:1890.5px;transform:scaleX(1.120);transform-origin:100% 0;">43%</div>
<div class="t" style="top:1022.4px;font-size:17.5px;line-height:17.5px;font-style:italic;right:1770.5px;transform:scaleX(1.120);transform-origin:100% 0;">46%</div>
<div class="t" style="top:1022.4px;font-size:17.5px;line-height:17.5px;font-style:italic;right:1602.8px;transform:scaleX(1.120);transform-origin:100% 0;">31%</div>
<div class="t" style="top:1022.4px;font-size:17.5px;line-height:17.5px;font-style:italic;right:1465.8px;transform:scaleX(1.120);transform-origin:100% 0;">31%</div>
<div class="t" style="top:1022.4px;font-size:17.5px;line-height:17.5px;font-style:italic;right:1328.8px;transform:scaleX(1.120);transform-origin:100% 0;">31%</div>
<div class="t" style="top:1022.4px;font-size:17.5px;line-height:17.5px;font-style:italic;right:1191.8px;transform:scaleX(1.120);transform-origin:100% 0;">31%</div>
<div class="t" style="top:1022.4px;font-size:17.5px;line-height:17.5px;font-style:italic;right:1054.8px;transform:scaleX(1.120);transform-origin:100% 0;">31%</div>
<div class="t" style="top:1022.4px;font-size:17.5px;line-height:17.5px;font-style:italic;right:917.8px;transform:scaleX(1.120);transform-origin:100% 0;">31%</div>
<div class="t" style="top:1022.4px;font-size:17.5px;line-height:17.5px;font-style:italic;right:780.8px;transform:scaleX(1.120);transform-origin:100% 0;">31%</div>
<div class="t" style="top:1022.4px;font-size:17.5px;line-height:17.5px;font-style:italic;right:643.8px;transform:scaleX(1.120);transform-origin:100% 0;">31%</div>
<div class="t" style="top:1022.4px;font-size:17.5px;line-height:17.5px;font-style:italic;right:506.8px;transform:scaleX(1.120);transform-origin:100% 0;">31%</div>
<div class="t" style="top:1022.4px;font-size:17.5px;line-height:17.5px;font-style:italic;right:369.8px;transform:scaleX(1.120);transform-origin:100% 0;">31%</div>
<div class="t" style="top:1022.4px;font-size:17.5px;line-height:17.5px;font-style:italic;right:232.8px;transform:scaleX(1.120);transform-origin:100% 0;">31%</div>
<div class="t" style="top:1022.4px;font-size:17.5px;line-height:17.5px;font-style:italic;right:95.8px;transform:scaleX(1.120);transform-origin:100% 0;">31%</div>
<div class="t" style="top:301.9px;font-size:35.2px;line-height:35.2px;color:#222;font-weight:bold;left:76.2px;transform:scaleX(0.955);transform-origin:0 0;">Financial Statements Summary</div>
<div class="t" style="top:340.6px;font-size:29px;line-height:29px;font-weight:bold;left:76.2px;transform:scaleX(0.995);transform-origin:0 0;">ABC Company Inc.</div>
<div class="t" style="top:376.8px;font-size:18.7px;line-height:18.7px;color:#1f6fe6;font-weight:bold;left:74.3px;transform:scaleX(0.995);transform-origin:0 0;">Go to Table of Contents</div>
<div class="a" style="left:74.3px;top:394.6px;width:209.4px;height:1.6px;background:#1f6fe6;"></div>
<div class="t" style="top:374.9px;font-size:22.9px;line-height:22.9px;color:#1e1e1e;font-weight:bold;left:1484.0px;transform:scaleX(0.955);transform-origin:0 0;">Select reporting year</div>
<div class="a" style="left:1723.2px;top:370.1px;width:274.7px;height:33.2px;background:#fef06b;border:1px solid #d6d0a0"></div>
<div class="t" style="top:375.9px;font-size:21.3px;line-height:21.3px;color:#1e1e1e;font-weight:bold;left:1861.0px;transform:translateX(-50%) scaleX(1.050);transform-origin:50% 0;">2026</div>
<div class="a" style="left:70.6px;top:1066.2px;width:1074.9px;height:34.0px;background:#4b50d3;"></div>
<div class="t" style="top:1068.0px;font-size:29.4px;line-height:29.4px;color:#fff;font-weight:bold;left:607.5px;transform:translateX(-50%) scaleX(1.051);transform-origin:50% 0;">Income Statement ($'000) - 5 years to December 2030</div>
<div class="a" style="left:1175.2px;top:1066.2px;width:1644.6px;height:34.0px;background:#4b50d3;"></div>
<div class="t" style="top:1068.0px;font-size:29.4px;line-height:29.4px;color:#fff;font-weight:bold;left:1997.8px;transform:translateX(-50%) scaleX(1.074);transform-origin:50% 0;">Income Statement ($'000) - 2026</div>
<svg class="a" style="left:327.7px;top:1126.8px;" width="46.30000000000001" height="10" viewBox="0 0 46.30000000000001 10"><path d="M0 5 H46.30000000000001" stroke="#e8786c" stroke-width="3.2"/><circle cx="23.150000000000006" cy="5" r="4" fill="#e8786c"/></svg>
<div class="t" style="top:1122.9px;font-size:18.2px;line-height:18.2px;color:#111;font-weight:bold;left:378.6px;transform:scaleX(1.060);transform-origin:0 0;">Revenue</div>
<svg class="a" style="left:489.0px;top:1126.8px;" width="46.5" height="10" viewBox="0 0 46.5 10"><path d="M0 5 H46.5" stroke="#5d9c3e" stroke-width="3.2"/><circle cx="23.25" cy="5" r="4" fill="#5d9c3e"/></svg>
<div class="t" style="top:1122.9px;font-size:18.2px;line-height:18.2px;color:#111;font-weight:bold;left:545.0px;transform:scaleX(1.060);transform-origin:0 0;">EBITDA</div>
<svg class="a" style="left:652.0px;top:1126.8px;" width="47" height="10" viewBox="0 0 47 10"><path d="M0 5 H47" stroke="#4b50d3" stroke-width="3.2"/><circle cx="23.5" cy="5" r="4" fill="#4b50d3"/></svg>
<div class="t" style="top:1122.9px;font-size:18.2px;line-height:18.2px;color:#111;font-weight:bold;left:707.0px;transform:scaleX(1.060);transform-origin:0 0;">Net Profit After Tax</div>
<svg class="a" style="left:1717.6px;top:1126.8px;" width="46.40000000000009" height="10" viewBox="0 0 46.40000000000009 10"><path d="M0 5 H46.40000000000009" stroke="#e8786c" stroke-width="3.2"/><circle cx="23.200000000000045" cy="5" r="4" fill="#e8786c"/></svg>
<div class="t" style="top:1122.9px;font-size:18.2px;line-height:18.2px;color:#111;font-weight:bold;left:1768.0px;transform:scaleX(1.060);transform-origin:0 0;">Revenue</div>
<svg class="a" style="left:1879.0px;top:1126.8px;" width="47" height="10" viewBox="0 0 47 10"><path d="M0 5 H47" stroke="#5d9c3e" stroke-width="3.2"/><circle cx="23.5" cy="5" r="4" fill="#5d9c3e"/></svg>
<div class="t" style="top:1122.9px;font-size:18.2px;line-height:18.2px;color:#111;font-weight:bold;left:1934.0px;transform:scaleX(1.060);transform-origin:0 0;">EBITDA</div>
<svg class="a" style="left:2042.0px;top:1126.8px;" width="47" height="10" viewBox="0 0 47 10"><path d="M0 5 H47" stroke="#4b50d3" stroke-width="3.2"/><circle cx="23.5" cy="5" r="4" fill="#4b50d3"/></svg>
<div class="t" style="top:1122.9px;font-size:18.2px;line-height:18.2px;color:#111;font-weight:bold;left:2097.0px;transform:scaleX(1.060);transform-origin:0 0;">Net Profit After Tax</div>
<svg class="a" style="left:0;top:0" width="2902" height="1762" viewBox="0 0 2902 1762"><path d="M70.5 1161.4 H1043" stroke="#5aaad6" stroke-width="1.3"/><path d="M70.5 1209.5 H1043" stroke="#5aaad6" stroke-width="1.3"/><path d="M70.5 1257.6 H1043" stroke="#5aaad6" stroke-width="1.3"/><path d="M70.5 1305.7 H1043" stroke="#5aaad6" stroke-width="1.3"/><path d="M70.5 1353.9 H1043" stroke="#5aaad6" stroke-width="1.3"/><path d="M70.5 1402.0 H1043" stroke="#5aaad6" stroke-width="1.3"/><path d="M70.5 1450.1 H1043" stroke="#5aaad6" stroke-width="1.3"/><path d="M70.5 1498.2 H1043" stroke="#5aaad6" stroke-width="1.3"/><path d="M70.5 1161.4 V1504.2" stroke="#5aaad6" stroke-width="1.3"/><path d="M265.0 1161.4 V1504.2" stroke="#5aaad6" stroke-width="1.3"/><path d="M459.5 1161.4 V1504.2" stroke="#5aaad6" stroke-width="1.3"/><path d="M654.0 1161.4 V1504.2" stroke="#5aaad6" stroke-width="1.3"/><path d="M848.5 1161.4 V1504.2" stroke="#5aaad6" stroke-width="1.3"/><path d="M1043.0 1161.4 V1504.2" stroke="#5aaad6" stroke-width="1.3"/><path d="M70.5 1498.2 H1043" stroke="#4ea3d6" stroke-width="2.2"/><path d="M167.8 1446.8 L362.2 1411.0 L556.8 1351.1 L751.2 1287.2 L945.8 1197.8" stroke="#e8786c" stroke-width="3.4" fill="none" stroke-linejoin="round"/><circle cx="167.8" cy="1446.8" r="5.6" fill="#e8786c"/><circle cx="362.2" cy="1411.0" r="5.6" fill="#e8786c"/><circle cx="556.8" cy="1351.1" r="5.6" fill="#e8786c"/><circle cx="751.2" cy="1287.2" r="5.6" fill="#e8786c"/><circle cx="945.8" cy="1197.8" r="5.6" fill="#e8786c"/><path d="M167.8 1476.6 L362.2 1455.3 L556.8 1419.9 L751.2 1376.4 L945.8 1312.7" stroke="#5d9c3e" stroke-width="3.4" fill="none" stroke-linejoin="round"/><circle cx="167.8" cy="1476.6" r="5.6" fill="#5d9c3e"/><circle cx="362.2" cy="1455.3" r="5.6" fill="#5d9c3e"/><circle cx="556.8" cy="1419.9" r="5.6" fill="#5d9c3e"/><circle cx="751.2" cy="1376.4" r="5.6" fill="#5d9c3e"/><circle cx="945.8" cy="1312.7" r="5.6" fill="#5d9c3e"/><path d="M167.8 1482.4 L362.2 1466.4 L556.8 1439.8 L751.2 1407.2 L945.8 1359.3" stroke="#4b50d3" stroke-width="3.4" fill="none" stroke-linejoin="round"/><circle cx="167.8" cy="1482.4" r="5.6" fill="#4b50d3"/><circle cx="362.2" cy="1466.4" r="5.6" fill="#4b50d3"/><circle cx="556.8" cy="1439.8" r="5.6" fill="#4b50d3"/><circle cx="751.2" cy="1407.2" r="5.6" fill="#4b50d3"/><circle cx="945.8" cy="1359.3" r="5.6" fill="#4b50d3"/></svg>
<div class="t" style="top:1152.4px;font-size:18.2px;line-height:18.2px;color:#111;font-weight:bold;left:1066.0px;transform:scaleX(1.100);transform-origin:0 0;">14,000</div>
<div class="t" style="top:1200.5px;font-size:18.2px;line-height:18.2px;color:#111;font-weight:bold;left:1066.0px;transform:scaleX(1.100);transform-origin:0 0;">12,000</div>
<div class="t" style="top:1248.7px;font-size:18.2px;line-height:18.2px;color:#111;font-weight:bold;left:1066.0px;transform:scaleX(1.100);transform-origin:0 0;">10,000</div>
<div class="t" style="top:1296.8px;font-size:18.2px;line-height:18.2px;color:#111;font-weight:bold;left:1066.0px;transform:scaleX(1.100);transform-origin:0 0;">8,000</div>
<div class="t" style="top:1344.9px;font-size:18.2px;line-height:18.2px;color:#111;font-weight:bold;left:1066.0px;transform:scaleX(1.100);transform-origin:0 0;">6,000</div>
<div class="t" style="top:1393.0px;font-size:18.2px;line-height:18.2px;color:#111;font-weight:bold;left:1066.0px;transform:scaleX(1.100);transform-origin:0 0;">4,000</div>
<div class="t" style="top:1441.1px;font-size:18.2px;line-height:18.2px;color:#111;font-weight:bold;left:1066.0px;transform:scaleX(1.100);transform-origin:0 0;">2,000</div>
<div class="t" style="top:1489.2px;font-size:18.2px;line-height:18.2px;color:#111;font-weight:bold;left:1066.0px;transform:scaleX(1.100);transform-origin:0 0;">-</div>
<div class="t" style="top:1513.5px;font-size:18.2px;line-height:18.2px;color:#111;font-weight:bold;left:167.8px;transform:translateX(-50%) scaleX(1.060);transform-origin:50% 0;">2026</div>
<div class="t" style="top:1513.5px;font-size:18.2px;line-height:18.2px;color:#111;font-weight:bold;left:362.2px;transform:translateX(-50%) scaleX(1.060);transform-origin:50% 0;">2027</div>
<div class="t" style="top:1513.5px;font-size:18.2px;line-height:18.2px;color:#111;font-weight:bold;left:556.8px;transform:translateX(-50%) scaleX(1.060);transform-origin:50% 0;">2028</div>
<div class="t" style="top:1513.5px;font-size:18.2px;line-height:18.2px;color:#111;font-weight:bold;left:751.2px;transform:translateX(-50%) scaleX(1.060);transform-origin:50% 0;">2029</div>
<div class="t" style="top:1513.5px;font-size:18.2px;line-height:18.2px;color:#111;font-weight:bold;left:945.8px;transform:translateX(-50%) scaleX(1.060);transform-origin:50% 0;">2030</div>
<svg class="a" style="left:0;top:0" width="2902" height="1762" viewBox="0 0 2902 1762"><path d="M1175.2 1162.0 H2752" stroke="#5aaad6" stroke-width="1.3"/><path d="M1175.2 1195.7 H2752" stroke="#5aaad6" stroke-width="1.3"/><path d="M1175.2 1229.4 H2752" stroke="#5aaad6" stroke-width="1.3"/><path d="M1175.2 1263.1 H2752" stroke="#5aaad6" stroke-width="1.3"/><path d="M1175.2 1296.8 H2752" stroke="#5aaad6" stroke-width="1.3"/><path d="M1175.2 1330.5 H2752" stroke="#5aaad6" stroke-width="1.3"/><path d="M1175.2 1364.2 H2752" stroke="#5aaad6" stroke-width="1.3"/><path d="M1175.2 1397.9 H2752" stroke="#5aaad6" stroke-width="1.3"/><path d="M1175.2 1431.6 H2752" stroke="#5aaad6" stroke-width="1.3"/><path d="M1175.2 1465.3 H2752" stroke="#5aaad6" stroke-width="1.3"/><path d="M1175.2 1499.0 H2752" stroke="#5aaad6" stroke-width="1.3"/><path d="M1175.2 1162 V1505" stroke="#5aaad6" stroke-width="1.3"/><path d="M1306.6 1162 V1505" stroke="#5aaad6" stroke-width="1.3"/><path d="M1438.0 1162 V1505" stroke="#5aaad6" stroke-width="1.3"/><path d="M1569.4 1162 V1505" stroke="#5aaad6" stroke-width="1.3"/><path d="M1700.8 1162 V1505" stroke="#5aaad6" stroke-width="1.3"/><path d="M1832.2 1162 V1505" stroke="#5aaad6" stroke-width="1.3"/><path d="M1963.6 1162 V1505" stroke="#5aaad6" stroke-width="1.3"/><path d="M2095.0 1162 V1505" stroke="#5aaad6" stroke-width="1.3"/><path d="M2226.4 1162 V1505" stroke="#5aaad6" stroke-width="1.3"/><path d="M2357.8 1162 V1505" stroke="#5aaad6" stroke-width="1.3"/><path d="M2489.2 1162 V1505" stroke="#5aaad6" stroke-width="1.3"/><path d="M2620.6 1162 V1505" stroke="#5aaad6" stroke-width="1.3"/><path d="M2752.0 1162 V1505" stroke="#5aaad6" stroke-width="1.3"/><path d="M1175.2 1499.0 H2752" stroke="#4ea3d6" stroke-width="2.2"/><path d="M1240.9 1199.1 L1372.3 1199.1 L1503.7 1199.1 L1635.1 1199.1 L1766.5 1199.1 L1897.9 1199.1 L2029.3 1199.1 L2160.7 1199.1 L2292.1 1199.1 L2423.5 1199.1 L2554.9 1199.1 L2686.3 1199.1" stroke="#e8786c" stroke-width="3.4" fill="none" stroke-linejoin="round"/><circle cx="1240.9" cy="1199.1" r="5.6" fill="#e8786c"/><circle cx="1372.3" cy="1199.1" r="5.6" fill="#e8786c"/><circle cx="1503.7" cy="1199.1" r="5.6" fill="#e8786c"/><circle cx="1635.1" cy="1199.1" r="5.6" fill="#e8786c"/><circle cx="1766.5" cy="1199.1" r="5.6" fill="#e8786c"/><circle cx="1897.9" cy="1199.1" r="5.6" fill="#e8786c"/><circle cx="2029.3" cy="1199.1" r="5.6" fill="#e8786c"/><circle cx="2160.7" cy="1199.1" r="5.6" fill="#e8786c"/><circle cx="2292.1" cy="1199.1" r="5.6" fill="#e8786c"/><circle cx="2423.5" cy="1199.1" r="5.6" fill="#e8786c"/><circle cx="2554.9" cy="1199.1" r="5.6" fill="#e8786c"/><circle cx="2686.3" cy="1199.1" r="5.6" fill="#e8786c"/><path d="M1240.9 1372.6 L1372.3 1372.6 L1503.7 1372.6 L1635.1 1372.6 L1766.5 1372.6 L1897.9 1372.6 L2029.3 1372.6 L2160.7 1372.6 L2292.1 1372.6 L2423.5 1372.6 L2554.9 1372.6 L2686.3 1372.6" stroke="#5d9c3e" stroke-width="3.4" fill="none" stroke-linejoin="round"/><circle cx="1240.9" cy="1372.6" r="5.6" fill="#5d9c3e"/><circle cx="1372.3" cy="1372.6" r="5.6" fill="#5d9c3e"/><circle cx="1503.7" cy="1372.6" r="5.6" fill="#5d9c3e"/><circle cx="1635.1" cy="1372.6" r="5.6" fill="#5d9c3e"/><circle cx="1766.5" cy="1372.6" r="5.6" fill="#5d9c3e"/><circle cx="1897.9" cy="1372.6" r="5.6" fill="#5d9c3e"/><circle cx="2029.3" cy="1372.6" r="5.6" fill="#5d9c3e"/><circle cx="2160.7" cy="1372.6" r="5.6" fill="#5d9c3e"/><circle cx="2292.1" cy="1372.6" r="5.6" fill="#5d9c3e"/><circle cx="2423.5" cy="1372.6" r="5.6" fill="#5d9c3e"/><circle cx="2554.9" cy="1372.6" r="5.6" fill="#5d9c3e"/><circle cx="2686.3" cy="1372.6" r="5.6" fill="#5d9c3e"/><path d="M1240.9 1404.6 L1372.3 1404.6 L1503.7 1406.3 L1635.1 1406.3 L1766.5 1406.3 L1897.9 1406.3 L2029.3 1406.3 L2160.7 1406.3 L2292.1 1406.3 L2423.5 1406.3 L2554.9 1406.3 L2686.3 1406.3" stroke="#4b50d3" stroke-width="3.4" fill="none" stroke-linejoin="round"/><circle cx="1240.9" cy="1404.6" r="5.6" fill="#4b50d3"/><circle cx="1372.3" cy="1404.6" r="5.6" fill="#4b50d3"/><circle cx="1503.7" cy="1406.3" r="5.6" fill="#4b50d3"/><circle cx="1635.1" cy="1406.3" r="5.6" fill="#4b50d3"/><circle cx="1766.5" cy="1406.3" r="5.6" fill="#4b50d3"/><circle cx="1897.9" cy="1406.3" r="5.6" fill="#4b50d3"/><circle cx="2029.3" cy="1406.3" r="5.6" fill="#4b50d3"/><circle cx="2160.7" cy="1406.3" r="5.6" fill="#4b50d3"/><circle cx="2292.1" cy="1406.3" r="5.6" fill="#4b50d3"/><circle cx="2423.5" cy="1406.3" r="5.6" fill="#4b50d3"/><circle cx="2554.9" cy="1406.3" r="5.6" fill="#4b50d3"/><circle cx="2686.3" cy="1406.3" r="5.6" fill="#4b50d3"/></svg>
<div class="t" style="top:1153.0px;font-size:18.2px;line-height:18.2px;color:#111;font-weight:bold;left:2775.0px;transform:scaleX(1.100);transform-origin:0 0;">200</div>
<div class="t" style="top:1186.7px;font-size:18.2px;line-height:18.2px;color:#111;font-weight:bold;left:2775.0px;transform:scaleX(1.100);transform-origin:0 0;">180</div>
<div class="t" style="top:1220.4px;font-size:18.2px;line-height:18.2px;color:#111;font-weight:bold;left:2775.0px;transform:scaleX(1.100);transform-origin:0 0;">160</div>
<div class="t" style="top:1254.1px;font-size:18.2px;line-height:18.2px;color:#111;font-weight:bold;left:2775.0px;transform:scaleX(1.100);transform-origin:0 0;">140</div>
<div class="t" style="top:1287.8px;font-size:18.2px;line-height:18.2px;color:#111;font-weight:bold;left:2775.0px;transform:scaleX(1.100);transform-origin:0 0;">120</div>
<div class="t" style="top:1321.5px;font-size:18.2px;line-height:18.2px;color:#111;font-weight:bold;left:2775.0px;transform:scaleX(1.100);transform-origin:0 0;">100</div>
<div class="t" style="top:1355.2px;font-size:18.2px;line-height:18.2px;color:#111;font-weight:bold;left:2775.0px;transform:scaleX(1.100);transform-origin:0 0;">80</div>
<div class="t" style="top:1388.9px;font-size:18.2px;line-height:18.2px;color:#111;font-weight:bold;left:2775.0px;transform:scaleX(1.100);transform-origin:0 0;">60</div>
<div class="t" style="top:1422.6px;font-size:18.2px;line-height:18.2px;color:#111;font-weight:bold;left:2775.0px;transform:scaleX(1.100);transform-origin:0 0;">40</div>
<div class="t" style="top:1456.3px;font-size:18.2px;line-height:18.2px;color:#111;font-weight:bold;left:2775.0px;transform:scaleX(1.100);transform-origin:0 0;">20</div>
<div class="t" style="top:1490.0px;font-size:18.2px;line-height:18.2px;color:#111;font-weight:bold;left:2775.0px;transform:scaleX(1.100);transform-origin:0 0;">-</div>
<div class="t" style="top:1514.3px;font-size:18.2px;line-height:18.2px;color:#111;font-weight:bold;left:1240.9px;transform:translateX(-50%) scaleX(1.060);transform-origin:50% 0;">Jan</div>
<div class="t" style="top:1514.3px;font-size:18.2px;line-height:18.2px;color:#111;font-weight:bold;left:1372.3px;transform:translateX(-50%) scaleX(1.060);transform-origin:50% 0;">Feb</div>
<div class="t" style="top:1514.3px;font-size:18.2px;line-height:18.2px;color:#111;font-weight:bold;left:1503.7px;transform:translateX(-50%) scaleX(1.060);transform-origin:50% 0;">Mar</div>
<div class="t" style="top:1514.3px;font-size:18.2px;line-height:18.2px;color:#111;font-weight:bold;left:1635.1px;transform:translateX(-50%) scaleX(1.060);transform-origin:50% 0;">Apr</div>
<div class="t" style="top:1514.3px;font-size:18.2px;line-height:18.2px;color:#111;font-weight:bold;left:1766.5px;transform:translateX(-50%) scaleX(1.060);transform-origin:50% 0;">May</div>
<div class="t" style="top:1514.3px;font-size:18.2px;line-height:18.2px;color:#111;font-weight:bold;left:1897.9px;transform:translateX(-50%) scaleX(1.060);transform-origin:50% 0;">Jun</div>
<div class="t" style="top:1514.3px;font-size:18.2px;line-height:18.2px;color:#111;font-weight:bold;left:2029.3px;transform:translateX(-50%) scaleX(1.060);transform-origin:50% 0;">Jul</div>
<div class="t" style="top:1514.3px;font-size:18.2px;line-height:18.2px;color:#111;font-weight:bold;left:2160.7px;transform:translateX(-50%) scaleX(1.060);transform-origin:50% 0;">Aug</div>
<div class="t" style="top:1514.3px;font-size:18.2px;line-height:18.2px;color:#111;font-weight:bold;left:2292.1px;transform:translateX(-50%) scaleX(1.060);transform-origin:50% 0;">Sep</div>
<div class="t" style="top:1514.3px;font-size:18.2px;line-height:18.2px;color:#111;font-weight:bold;left:2423.5px;transform:translateX(-50%) scaleX(1.060);transform-origin:50% 0;">Oct</div>
<div class="t" style="top:1514.3px;font-size:18.2px;line-height:18.2px;color:#111;font-weight:bold;left:2554.9px;transform:translateX(-50%) scaleX(1.060);transform-origin:50% 0;">Nov</div>
<div class="t" style="top:1514.3px;font-size:18.2px;line-height:18.2px;color:#111;font-weight:bold;left:2686.3px;transform:translateX(-50%) scaleX(1.060);transform-origin:50% 0;">Dec</div>
<div class="a" style="left:70.6px;top:1562.3px;width:1074.4px;height:34.0px;background:#4b50d3;"></div>
<div class="t" style="top:1564.1px;font-size:29.4px;line-height:29.4px;color:#fff;font-weight:bold;left:607.8px;transform:translateX(-50%) scaleX(1.035);transform-origin:50% 0;">Balance Sheet ($'000) - 5 years to December 2030</div>
<div class="a" style="left:1175.2px;top:1562.3px;width:1644.3px;height:34.0px;background:#4b50d3;"></div>
<div class="t" style="top:1564.1px;font-size:29.4px;line-height:29.4px;color:#fff;font-weight:bold;left:1997.8px;transform:translateX(-50%) scaleX(1.052);transform-origin:50% 0;">Balance Sheet ($'000) - 2026</div>
<div class="a" style="left:71.2px;top:1602.2px;width:1072.6px;height:22.2px;background:#6c73e8;"></div>
<div class="a" style="left:543.4px;top:1602.2px;width:1.8px;height:22.2px;background:#fff;"></div>
<div class="a" style="left:663.2px;top:1602.2px;width:1.8px;height:22.2px;background:#fff;"></div>
<div class="a" style="left:783.5px;top:1602.2px;width:1.8px;height:22.2px;background:#fff;"></div>
<div class="a" style="left:903.6px;top:1602.2px;width:1.8px;height:22.2px;background:#fff;"></div>
<div class="a" style="left:1023.6px;top:1602.2px;width:1.8px;height:22.2px;background:#fff;"></div>
<div class="t" style="top:1605.3px;font-size:18.4px;line-height:18.4px;color:#fff;font-weight:bold;left:82.6px;">Year Ending</div>
<div class="t" style="top:1605.4px;font-size:17.4px;line-height:17.4px;color:#fff;font-weight:bold;left:604.2px;transform:translateX(-50%) scaleX(1.100);transform-origin:50% 0;">2026</div>
<div class="t" style="top:1605.4px;font-size:17.4px;line-height:17.4px;color:#fff;font-weight:bold;left:724.2px;transform:translateX(-50%) scaleX(1.100);transform-origin:50% 0;">2027</div>
<div class="t" style="top:1605.4px;font-size:17.4px;line-height:17.4px;color:#fff;font-weight:bold;left:844.5px;transform:translateX(-50%) scaleX(1.100);transform-origin:50% 0;">2028</div>
<div class="t" style="top:1605.4px;font-size:17.4px;line-height:17.4px;color:#fff;font-weight:bold;left:964.5px;transform:translateX(-50%) scaleX(1.100);transform-origin:50% 0;">2029</div>
<div class="t" style="top:1605.4px;font-size:17.4px;line-height:17.4px;color:#fff;font-weight:bold;left:1084.5px;transform:translateX(-50%) scaleX(1.100);transform-origin:50% 0;">2030</div>
<div class="a" style="left:1175.8px;top:1602.2px;width:1642.9px;height:22.2px;background:#6c73e8;"></div>
<div class="a" style="left:1311.3px;top:1602.2px;width:1.8px;height:22.2px;background:#fff;"></div>
<div class="a" style="left:1448.3px;top:1602.2px;width:1.8px;height:22.2px;background:#fff;"></div>
<div class="a" style="left:1585.3px;top:1602.2px;width:1.8px;height:22.2px;background:#fff;"></div>
<div class="a" style="left:1722.3px;top:1602.2px;width:1.8px;height:22.2px;background:#fff;"></div>
<div class="a" style="left:1859.3px;top:1602.2px;width:1.8px;height:22.2px;background:#fff;"></div>
<div class="a" style="left:1996.3px;top:1602.2px;width:1.8px;height:22.2px;background:#fff;"></div>
<div class="a" style="left:2133.3px;top:1602.2px;width:1.8px;height:22.2px;background:#fff;"></div>
<div class="a" style="left:2270.3px;top:1602.2px;width:1.8px;height:22.2px;background:#fff;"></div>
<div class="a" style="left:2407.3px;top:1602.2px;width:1.8px;height:22.2px;background:#fff;"></div>
<div class="a" style="left:2544.3px;top:1602.2px;width:1.8px;height:22.2px;background:#fff;"></div>
<div class="a" style="left:2681.3px;top:1602.2px;width:1.8px;height:22.2px;background:#fff;"></div>
<div class="t" style="top:1605.4px;font-size:17.4px;line-height:17.4px;color:#fff;font-weight:bold;left:1243.7px;transform:translateX(-50%) scaleX(1.100);transform-origin:50% 0;">Jan</div>
<div class="t" style="top:1605.4px;font-size:17.4px;line-height:17.4px;color:#fff;font-weight:bold;left:1380.7px;transform:translateX(-50%) scaleX(1.100);transform-origin:50% 0;">Feb</div>
<div class="t" style="top:1605.4px;font-size:17.4px;line-height:17.4px;color:#fff;font-weight:bold;left:1517.7px;transform:translateX(-50%) scaleX(1.100);transform-origin:50% 0;">Mar</div>
<div class="t" style="top:1605.4px;font-size:17.4px;line-height:17.4px;color:#fff;font-weight:bold;left:1654.7px;transform:translateX(-50%) scaleX(1.100);transform-origin:50% 0;">Apr</div>
<div class="t" style="top:1605.4px;font-size:17.4px;line-height:17.4px;color:#fff;font-weight:bold;left:1791.7px;transform:translateX(-50%) scaleX(1.100);transform-origin:50% 0;">May</div>
<div class="t" style="top:1605.4px;font-size:17.4px;line-height:17.4px;color:#fff;font-weight:bold;left:1928.7px;transform:translateX(-50%) scaleX(1.100);transform-origin:50% 0;">Jun</div>
<div class="t" style="top:1605.4px;font-size:17.4px;line-height:17.4px;color:#fff;font-weight:bold;left:2065.7px;transform:translateX(-50%) scaleX(1.100);transform-origin:50% 0;">Jul</div>
<div class="t" style="top:1605.4px;font-size:17.4px;line-height:17.4px;color:#fff;font-weight:bold;left:2202.7px;transform:translateX(-50%) scaleX(1.100);transform-origin:50% 0;">Aug</div>
<div class="t" style="top:1605.4px;font-size:17.4px;line-height:17.4px;color:#fff;font-weight:bold;left:2339.7px;transform:translateX(-50%) scaleX(1.100);transform-origin:50% 0;">Sep</div>
<div class="t" style="top:1605.4px;font-size:17.4px;line-height:17.4px;color:#fff;font-weight:bold;left:2476.7px;transform:translateX(-50%) scaleX(1.100);transform-origin:50% 0;">Oct</div>
<div class="t" style="top:1605.4px;font-size:17.4px;line-height:17.4px;color:#fff;font-weight:bold;left:2613.7px;transform:translateX(-50%) scaleX(1.100);transform-origin:50% 0;">Nov</div>
<div class="t" style="top:1605.4px;font-size:17.4px;line-height:17.4px;color:#fff;font-weight:bold;left:2750.7px;transform:translateX(-50%) scaleX(1.100);transform-origin:50% 0;">Dec</div>
<div class="t" style="top:1633.4px;font-size:17.5px;line-height:17.5px;left:74.0px;transform:scaleX(0.986);transform-origin:0 0;">Current Assets</div>
<div class="t" style="top:1633.4px;font-size:17.5px;line-height:17.5px;right:2249.5px;transform:scaleX(1.060);transform-origin:100% 0;">1,640</div>
<div class="t" style="top:1633.4px;font-size:17.5px;line-height:17.5px;right:2129.2px;transform:scaleX(1.060);transform-origin:100% 0;">2,945</div>
<div class="t" style="top:1633.4px;font-size:17.5px;line-height:17.5px;right:2009.1px;transform:scaleX(1.060);transform-origin:100% 0;">5,369</div>
<div class="t" style="top:1633.4px;font-size:17.5px;line-height:17.5px;right:1889.1px;transform:scaleX(1.060);transform-origin:100% 0;">9,143</div>
<div class="t" style="top:1633.4px;font-size:17.5px;line-height:17.5px;right:1769.1px;transform:scaleX(1.060);transform-origin:100% 0;">14,915</div>
<div class="t" style="top:1633.4px;font-size:17.5px;line-height:17.5px;right:1601.4px;transform:scaleX(1.060);transform-origin:100% 0;">986</div>
<div class="t" style="top:1633.4px;font-size:17.5px;line-height:17.5px;right:1464.4px;transform:scaleX(1.060);transform-origin:100% 0;">1,030</div>
<div class="t" style="top:1633.4px;font-size:17.5px;line-height:17.5px;right:1327.4px;transform:scaleX(1.060);transform-origin:100% 0;">1,163</div>
<div class="t" style="top:1633.4px;font-size:17.5px;line-height:17.5px;right:1190.4px;transform:scaleX(1.060);transform-origin:100% 0;">1,216</div>
<div class="t" style="top:1633.4px;font-size:17.5px;line-height:17.5px;right:1053.4px;transform:scaleX(1.060);transform-origin:100% 0;">1,267</div>
<div class="t" style="top:1633.4px;font-size:17.5px;line-height:17.5px;right:916.4px;transform:scaleX(1.060);transform-origin:100% 0;">1,322</div>
<div class="t" style="top:1633.4px;font-size:17.5px;line-height:17.5px;right:779.4px;transform:scaleX(1.060);transform-origin:100% 0;">1,374</div>
<div class="t" style="top:1633.4px;font-size:17.5px;line-height:17.5px;right:642.4px;transform:scaleX(1.060);transform-origin:100% 0;">1,427</div>
<div class="t" style="top:1633.4px;font-size:17.5px;line-height:17.5px;right:505.4px;transform:scaleX(1.060);transform-origin:100% 0;">1,482</div>
<div class="t" style="top:1633.4px;font-size:17.5px;line-height:17.5px;right:368.4px;transform:scaleX(1.060);transform-origin:100% 0;">1,534</div>
<div class="t" style="top:1633.4px;font-size:17.5px;line-height:17.5px;right:231.4px;transform:scaleX(1.060);transform-origin:100% 0;">1,589</div>
<div class="t" style="top:1633.4px;font-size:17.5px;line-height:17.5px;right:94.4px;transform:scaleX(1.060);transform-origin:100% 0;">1,640</div>
<div class="t" style="top:1655.1px;font-size:17.5px;line-height:17.5px;left:74.0px;transform:scaleX(0.997);transform-origin:0 0;">Non-Current Assets</div>
<div class="t" style="top:1655.1px;font-size:17.5px;line-height:17.5px;right:2249.5px;transform:scaleX(1.060);transform-origin:100% 0;">49</div>
<div class="t" style="top:1655.1px;font-size:17.5px;line-height:17.5px;right:2129.2px;transform:scaleX(1.060);transform-origin:100% 0;">44</div>
<div class="t" style="top:1655.1px;font-size:17.5px;line-height:17.5px;right:2009.1px;transform:scaleX(1.060);transform-origin:100% 0;">38</div>
<div class="t" style="top:1655.1px;font-size:17.5px;line-height:17.5px;right:1889.1px;transform:scaleX(1.060);transform-origin:100% 0;">33</div>
<div class="t" style="top:1655.1px;font-size:17.5px;line-height:17.5px;right:1769.1px;transform:scaleX(1.060);transform-origin:100% 0;">27</div>
<div class="t" style="top:1655.1px;font-size:17.5px;line-height:17.5px;right:1601.4px;transform:scaleX(1.060);transform-origin:100% 0;">20</div>
<div class="t" style="top:1655.1px;font-size:17.5px;line-height:17.5px;right:1464.4px;transform:scaleX(1.060);transform-origin:100% 0;">36</div>
<div class="t" style="top:1655.1px;font-size:17.5px;line-height:17.5px;right:1327.4px;transform:scaleX(1.060);transform-origin:100% 0;">50</div>
<div class="t" style="top:1655.1px;font-size:17.5px;line-height:17.5px;right:1190.4px;transform:scaleX(1.060);transform-origin:100% 0;">52</div>
<div class="t" style="top:1655.1px;font-size:17.5px;line-height:17.5px;right:1053.4px;transform:scaleX(1.060);transform-origin:100% 0;">52</div>
<div class="t" style="top:1655.1px;font-size:17.5px;line-height:17.5px;right:916.4px;transform:scaleX(1.060);transform-origin:100% 0;">52</div>
<div class="t" style="top:1655.1px;font-size:17.5px;line-height:17.5px;right:779.4px;transform:scaleX(1.060);transform-origin:100% 0;">51</div>
<div class="t" style="top:1655.1px;font-size:17.5px;line-height:17.5px;right:642.4px;transform:scaleX(1.060);transform-origin:100% 0;">51</div>
<div class="t" style="top:1655.1px;font-size:17.5px;line-height:17.5px;right:505.4px;transform:scaleX(1.060);transform-origin:100% 0;">50</div>
<div class="t" style="top:1655.1px;font-size:17.5px;line-height:17.5px;right:368.4px;transform:scaleX(1.060);transform-origin:100% 0;">50</div>
<div class="t" style="top:1655.1px;font-size:17.5px;line-height:17.5px;right:231.4px;transform:scaleX(1.060);transform-origin:100% 0;">50</div>
<div class="t" style="top:1655.1px;font-size:17.5px;line-height:17.5px;right:94.4px;transform:scaleX(1.060);transform-origin:100% 0;">49</div>
<div class="a" style="left:2860.0px;top:278.0px;width:30.0px;height:1392.5px;background:#0d0d0d;"></div>
<div class="a" style="left:2862px;top:280px;width:26px;height:1388px;border-radius:13px;background:#161616"></div>
<svg class="a" style="left:2867.0px;top:285.0px;" width="18" height="13" viewBox="0 0 18 13"><path d="M9 1.5 L16.5 11.5 H1.5 Z" fill="#9a9a9a" stroke="#9a9a9a" stroke-width="1.5" stroke-linejoin="round"/></svg>
<div class="a" style="left:2869.7px;top:304px;width:12.2px;height:529px;border-radius:6px;background:#9d9d9d"></div>
<svg class="a" style="left:2867.0px;top:1652.0px;" width="18" height="13" viewBox="0 0 18 13"><path d="M9 11.5 L16.5 1.5 H1.5 Z" fill="#9a9a9a" stroke="#9a9a9a" stroke-width="1.5" stroke-linejoin="round"/></svg>
<div class="a" style="left:1580.0px;top:1670.5px;width:142.0px;height:11.5px;background:#fff;"></div>
<div class="a" style="left:11px;top:1670.5px;width:1582.7px;height:47.3px;background:#0a0a0a;border-top-right-radius:7px"></div>
<div class="a" style="left:1593.7px;top:1690.0px;width:114.4px;height:27.8px;background:#0a0a0a;"></div>
<div class="a" style="left:1708.1px;top:1670.5px;width:1181.9px;height:47.3px;background:#0a0a0a;border-top-left-radius:7px"></div>
<svg class="a" style="left:44.0px;top:1683.0px;" width="13" height="19" viewBox="0 0 13 19"><path d="M10.5 1.5 L2.5 9 L10.5 16.5" stroke="#bdbdbd" stroke-width="1.6" fill="none"/></svg>
<svg class="a" style="left:93.0px;top:1683.0px;" width="13" height="19" viewBox="0 0 13 19"><path d="M2.5 1.5 L10.5 9 L2.5 16.5" stroke="#bdbdbd" stroke-width="1.6" fill="none"/></svg>
<div class="t" style="top:1685.4px;font-size:20.4px;line-height:20.4px;color:#f0f0f0;left:190.5px;transform:scaleX(0.985);transform-origin:0 0;">Contents</div>
<div class="a" style="left:299px;top:1676px;width:127.8px;height:36px;border-radius:7px;background:#fdeb6b"></div>
<div class="t" style="top:1685.5px;font-size:20.2px;line-height:20.2px;color:#111;left:362.9px;transform:translateX(-50%) scaleX(0.985);transform-origin:50% 0;">Dashboard</div>
<div class="a" style="left:440px;top:1676px;width:105.7px;height:36px;border-radius:7px;background:#fdeb6b"></div>
<div class="t" style="top:1685.5px;font-size:20.2px;line-height:20.2px;color:#111;left:492.9px;transform:translateX(-50%) scaleX(0.985);transform-origin:50% 0;">Revenue</div>
<div class="a" style="left:559.4px;top:1676px;width:157.4px;height:36px;border-radius:7px;background:#fdeb6b"></div>
<div class="t" style="top:1685.5px;font-size:20.2px;line-height:20.2px;color:#111;left:638.1px;transform:translateX(-50%) scaleX(0.985);transform-origin:50% 0;">COGS &amp; OPEX</div>
<div class="a" style="left:730px;top:1676px;width:88.8px;height:36px;border-radius:7px;background:#fdeb6b"></div>
<div class="t" style="top:1685.5px;font-size:20.2px;line-height:20.2px;color:#111;left:774.4px;transform:translateX(-50%) scaleX(0.985);transform-origin:50% 0;">Payroll</div>
<div class="a" style="left:832px;top:1676px;width:86.7px;height:36px;border-radius:7px;background:#fdeb6b"></div>
<div class="t" style="top:1685.5px;font-size:20.2px;line-height:20.2px;color:#111;left:875.4px;transform:translateX(-50%) scaleX(0.985);transform-origin:50% 0;">CAPEX</div>
<div class="a" style="left:932.4px;top:1676px;width:112.6px;height:36px;border-radius:7px;background:#fdeb6b"></div>
<div class="t" style="top:1685.5px;font-size:20.2px;line-height:20.2px;color:#111;left:988.7px;transform:translateX(-50%) scaleX(0.985);transform-origin:50% 0;">CapTable</div>
<div class="a" style="left:1058px;top:1676px;width:90.0px;height:36px;border-radius:7px;background:#fdeb6b"></div>
<div class="t" style="top:1685.5px;font-size:20.2px;line-height:20.2px;color:#111;left:1103.0px;transform:translateX(-50%) scaleX(0.985);transform-origin:50% 0;">Capital</div>
<div class="a" style="left:1161.3px;top:1676px;width:41.4px;height:36px;border-radius:7px;background:#4cb3e8"></div>
<div class="t" style="top:1685.5px;font-size:20.2px;line-height:20.2px;color:#111;left:1182.0px;transform:translateX(-50%) scaleX(0.985);transform-origin:50% 0;">IS</div>
<div class="a" style="left:1216px;top:1676px;width:47.6px;height:36px;border-radius:7px;background:#4cb3e8"></div>
<div class="t" style="top:1685.5px;font-size:20.2px;line-height:20.2px;color:#111;left:1239.8px;transform:translateX(-50%) scaleX(0.985);transform-origin:50% 0;">CF</div>
<div class="a" style="left:1277.3px;top:1676px;width:47.7px;height:36px;border-radius:7px;background:#4cb3e8"></div>
<div class="t" style="top:1685.5px;font-size:20.2px;line-height:20.2px;color:#111;left:1301.2px;transform:translateX(-50%) scaleX(0.985);transform-origin:50% 0;">BS</div>
<div class="a" style="left:1338.2px;top:1676px;width:114.8px;height:36px;border-radius:7px;background:#4cb3e8"></div>
<div class="t" style="top:1685.5px;font-size:20.2px;line-height:20.2px;color:#111;left:1395.6px;transform:translateX(-50%) scaleX(0.985);transform-origin:50% 0;">Scenarios</div>
<div class="a" style="left:1466px;top:1676px;width:114.4px;height:36px;border-radius:7px;background:#4cb3e8"></div>
<div class="t" style="top:1685.5px;font-size:20.2px;line-height:20.2px;color:#111;left:1523.2px;transform:translateX(-50%) scaleX(0.985);transform-origin:50% 0;">Valuation</div>
<div class="a" style="left:1721.4px;top:1676px;width:47.2px;height:36px;border-radius:7px;background:#4cb3e8"></div>
<div class="t" style="top:1685.5px;font-size:20.2px;line-height:20.2px;color:#111;left:1745.0px;transform:translateX(-50%) scaleX(0.985);transform-origin:50% 0;">BE</div>
<div class="a" style="left:1782.3px;top:1676px;width:71.5px;height:36px;border-radius:7px;background:#4cb3e8"></div>
<div class="t" style="top:1685.5px;font-size:20.2px;line-height:20.2px;color:#111;left:1818.0px;transform:translateX(-50%) scaleX(0.985);transform-origin:50% 0;">ROIC</div>
<div class="a" style="left:1867.2px;top:1676px;width:84.6px;height:36px;border-radius:7px;background:#4cb3e8"></div>
<div class="t" style="top:1685.5px;font-size:20.2px;line-height:20.2px;color:#111;left:1909.5px;transform:translateX(-50%) scaleX(0.985);transform-origin:50% 0;">Charts</div>
<div class="a" style="left:1965.5px;top:1676px;width:63.0px;height:36px;border-radius:7px;background:#4cb3e8"></div>
<div class="t" style="top:1685.5px;font-size:20.2px;line-height:20.2px;color:#111;left:1997.0px;transform:translateX(-50%) scaleX(0.985);transform-origin:50% 0;">KPIs</div>
<div class="a" style="left:2042.2px;top:1676px;width:30px;height:36px;border-radius:7px 0 0 7px;background:#4cb3e8;overflow:hidden"><div class="t" style="left:9px;top:9.5px;font-size:20.2px;line-height:20.2px;color:#111">Sc</div></div>
<div class="a" style="left:292.0px;top:1680.0px;width:1.2px;height:28.0px;background:#4d4d4d;"></div>
<div class="a" style="left:433.1px;top:1680.0px;width:1.2px;height:28.0px;background:#4d4d4d;"></div>
<div class="a" style="left:551.8px;top:1680.0px;width:1.2px;height:28.0px;background:#4d4d4d;"></div>
<div class="a" style="left:722.9px;top:1680.0px;width:1.2px;height:28.0px;background:#4d4d4d;"></div>
<div class="a" style="left:825.2px;top:1680.0px;width:1.2px;height:28.0px;background:#4d4d4d;"></div>
<div class="a" style="left:924.9px;top:1680.0px;width:1.2px;height:28.0px;background:#4d4d4d;"></div>
<div class="a" style="left:1050.9px;top:1680.0px;width:1.2px;height:28.0px;background:#4d4d4d;"></div>
<div class="a" style="left:1154.0px;top:1680.0px;width:1.2px;height:28.0px;background:#4d4d4d;"></div>
<div class="a" style="left:1208.8px;top:1680.0px;width:1.2px;height:28.0px;background:#4d4d4d;"></div>
<div class="a" style="left:1269.7px;top:1680.0px;width:1.2px;height:28.0px;background:#4d4d4d;"></div>
<div class="a" style="left:1331.0px;top:1680.0px;width:1.2px;height:28.0px;background:#4d4d4d;"></div>
<div class="a" style="left:1458.9px;top:1680.0px;width:1.2px;height:28.0px;background:#4d4d4d;"></div>
<div class="a" style="left:1586.6px;top:1680.0px;width:1.2px;height:28.0px;background:#4d4d4d;"></div>
<div class="a" style="left:1714.1px;top:1680.0px;width:1.2px;height:28.0px;background:#4d4d4d;"></div>
<div class="a" style="left:1774.8px;top:1680.0px;width:1.2px;height:28.0px;background:#4d4d4d;"></div>
<div class="a" style="left:1859.9px;top:1680.0px;width:1.2px;height:28.0px;background:#4d4d4d;"></div>
<div class="a" style="left:1958.0px;top:1680.0px;width:1.2px;height:28.0px;background:#4d4d4d;"></div>
<div class="a" style="left:2034.8px;top:1680.0px;width:1.2px;height:28.0px;background:#4d4d4d;"></div>
<div class="a" style="left:1593.7px;top:1670px;width:114.4px;height:42.5px;border-radius:0 0 8px 8px;background:linear-gradient(#ffffff 8%,#c4e2f4)"></div>
<div class="t" style="top:1680.6px;font-size:20.2px;line-height:20.2px;color:#1a1a1a;left:1651.4px;transform:translateX(-50%) scaleX(1.033);transform-origin:50% 0;">Summary</div>
<div class="a" style="left:1606.0px;top:1704.8px;width:90.0px;height:3.0px;background:#1e7a45;"></div>
<div class="a" style="left:2085.5px;top:1690px;width:5px;height:5px;border-radius:50%;background:#e6e6e6"></div>
<div class="a" style="left:2092.5px;top:1690px;width:5px;height:5px;border-radius:50%;background:#e6e6e6"></div>
<div class="a" style="left:2099.5px;top:1690px;width:5px;height:5px;border-radius:50%;background:#e6e6e6"></div>
<svg class="a" style="left:2133.0px;top:1683.0px;" width="20" height="20" viewBox="0 0 20 20"><path d="M10 1 V19 M1 10 H19" stroke="#e6e6e6" stroke-width="1.7"/></svg>
<div class="a" style="left:2189.2px;top:1683.5px;width:5px;height:5px;border-radius:50%;background:#e6e6e6"></div>
<div class="a" style="left:2189.2px;top:1690.5px;width:5px;height:5px;border-radius:50%;background:#e6e6e6"></div>
<div class="a" style="left:2189.2px;top:1697.5px;width:5px;height:5px;border-radius:50%;background:#e6e6e6"></div>
<div class="a" style="left:2217px;top:1680.5px;width:642.5px;height:25.2px;border-radius:13px;background:#161616"></div>
<svg class="a" style="left:2222.0px;top:1686.0px;" width="13" height="15" viewBox="0 0 13 15"><path d="M1.5 7.5 L11.5 1 V14 Z" fill="#9a9a9a" stroke="#9a9a9a" stroke-width="1.5" stroke-linejoin="round"/></svg>
<div class="a" style="left:2241.9px;top:1687px;width:537px;height:12px;border-radius:6px;background:#9d9d9d"></div>
<svg class="a" style="left:2840.0px;top:1686.0px;" width="13" height="15" viewBox="0 0 13 15"><path d="M11.5 7.5 L1.5 1 V14 Z" fill="#9a9a9a" stroke="#9a9a9a" stroke-width="1.5" stroke-linejoin="round"/></svg>
<div class="a" style="left:11.0px;top:1717.8px;width:2879.0px;height:32.8px;background:#141414;"></div>
<div class="a" style="left:11.0px;top:1717.2px;width:2879.0px;height:1.2px;background:#2c2c2c;"></div>
<div class="t" style="top:1727.1px;font-size:15.2px;line-height:15.2px;color:#e6e6e6;left:27.4px;transform:scaleX(0.985);transform-origin:0 0;">Ready</div>
<svg class="a" style="left:98.0px;top:1725.0px;" width="24" height="21" viewBox="0 0 24 21"><path d="M1.5 1.5 H22 M1.5 5 H22 V9 M1.5 1.5 V19.5 H9" stroke="#e6e6e6" stroke-width="1.4" fill="none"/><path d="M4 9 H9 M4 12.5 H8 M4 16 H8" stroke="#e6e6e6" stroke-width="1.3"/><circle cx="16" cy="15" r="5.2" stroke="#e6e6e6" stroke-width="1.5" fill="none"/><circle cx="16" cy="15" r="2.4" fill="#e6e6e6"/></svg>
<svg class="a" style="left:145.0px;top:1723.0px;" width="24" height="24" viewBox="0 0 24 24"><circle cx="9" cy="3.5" r="2.5" stroke="#e6e6e6" stroke-width="1.4" fill="none"/><path d="M2 7 L9 8.5 L16 7 M9 8.5 L8 14 L4 22 M8 14 L12 20" stroke="#e6e6e6" stroke-width="1.5" fill="none"/><path d="M14 15 L22 23 M22 15 L14 23" stroke="#e6e6e6" stroke-width="1.5"/></svg>
<div class="t" style="top:1726.8px;font-size:16.1px;line-height:16.1px;color:#f2f2f2;font-weight:bold;left:173.5px;transform:scaleX(0.978);transform-origin:0 0;">Accessibility: Investigate</div>
<div class="a" style="left:2445.0px;top:1718.4px;width:59.8px;height:32.2px;background:#262626;"></div>
<svg class="a" style="left:2462.0px;top:1724.0px;" width="22" height="22" viewBox="0 0 22 22"><rect x="1.2" y="1.2" width="19.6" height="19.6" stroke="#f2f2f2" stroke-width="2" fill="none"/><path d="M7.7 1 V21 M14.3 1 V21 M1 7.7 H21 M1 14.3 H21" stroke="#f2f2f2" stroke-width="2"/></svg>
<svg class="a" style="left:2524.0px;top:1724.0px;" width="22" height="22" viewBox="0 0 22 22"><rect x="1.2" y="1.2" width="19.6" height="19.6" stroke="#f2f2f2" stroke-width="2" fill="none"/><rect x="5.2" y="5.2" width="11.6" height="11.6" stroke="#f2f2f2" stroke-width="1.6" fill="none"/><path d="M7.5 8.5 H14.5 M7.5 11 H14.5 M7.5 13.5 H14.5" stroke="#f2f2f2" stroke-width="1.3"/></svg>
<svg class="a" style="left:2584.0px;top:1724.0px;" width="22" height="22" viewBox="0 0 22 22"><rect x="1.2" y="1.2" width="19.6" height="19.6" stroke="#f2f2f2" stroke-width="2" fill="none"/><path d="M6 1 V10 H14 V1 M10 1 V10" stroke="#f2f2f2" stroke-width="2" fill="none"/></svg>
<div class="a" style="left:2632.0px;top:1733.3px;width:12.0px;height:2.0px;background:#d0d0d0;"></div>
<div class="a" style="left:2653.0px;top:1733.2px;width:148.0px;height:2.6px;background:#bdbdbd;"></div>
<div class="a" style="left:2726px;top:1725.5px;width:9px;height:17px;border-radius:2px;background:#bdbdbd"></div>
<svg class="a" style="left:2808.0px;top:1728.0px;" width="14" height="14" viewBox="0 0 14 14"><path d="M7 1 V13 M1 7 H13" stroke="#e0e0e0" stroke-width="1.8"/></svg>
<div class="t" style="top:1727.0px;font-size:16.5px;line-height:16.5px;color:#e6e6e6;left:2839.6px;transform:scaleX(0.970);transform-origin:0 0;">115%</div></body></html>
